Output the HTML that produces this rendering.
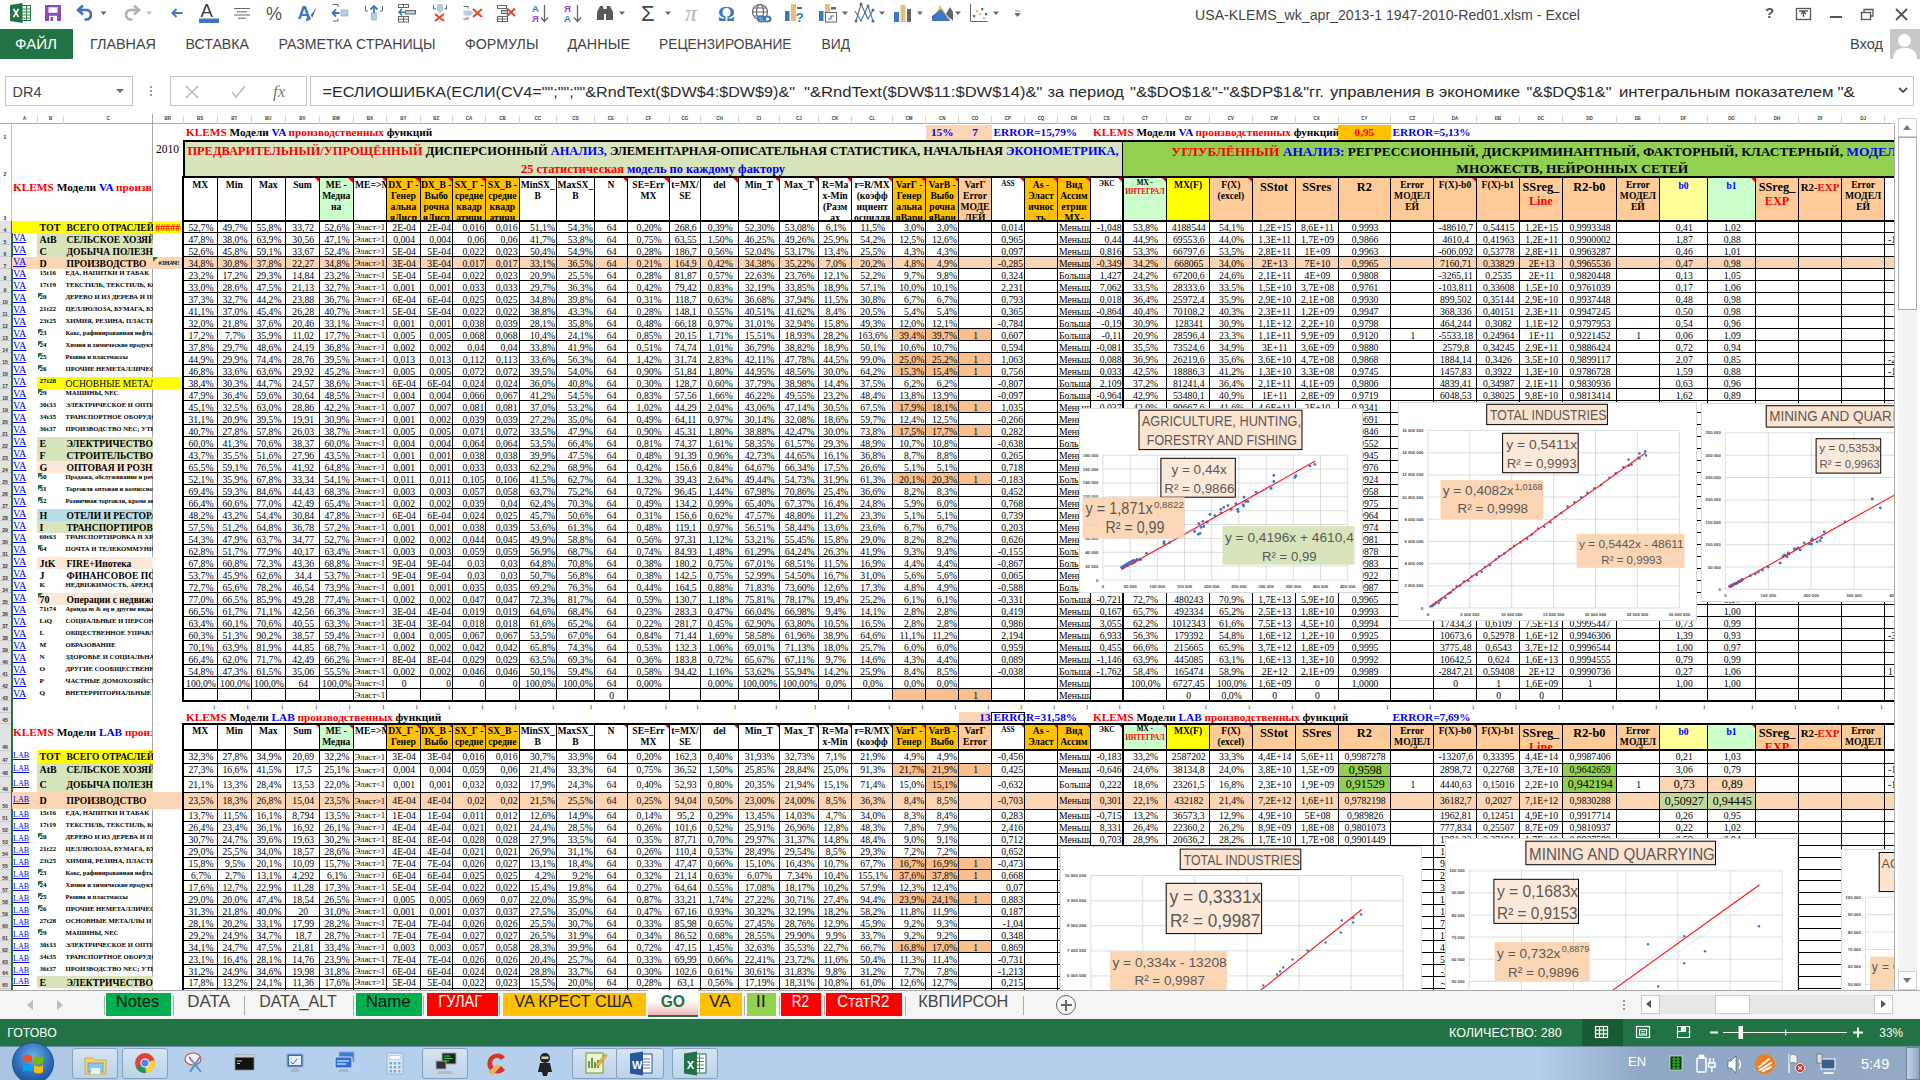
<!DOCTYPE html><html lang="ru"><head><meta charset="utf-8"><title>Excel</title><style>
*{box-sizing:border-box;margin:0;padding:0}
html,body{width:1920px;height:1080px;overflow:hidden;background:#fff;font-family:"Liberation Sans",sans-serif}
#sh{position:absolute;left:0;top:114px;width:1894px;height:876px;overflow:hidden;background:#fff;font-family:"Liberation Serif",serif;font-size:9.7px;color:#000}
.r{position:absolute;left:0;width:1895px;white-space:nowrap}
.r>*{position:absolute;top:0;height:100%;overflow:hidden;display:block;font-style:normal;font-weight:normal;text-align:center}
.hl{position:absolute;background:#000;height:1px}
.vl{position:absolute;background:#000;width:1px}
.bg{position:absolute}
.t{position:absolute;white-space:nowrap}
.rd{color:#f00}.bl{color:#00f}
.hd>*{font-weight:bold;white-space:nowrap;line-height:11px;font-size:9.6px;padding:1px 0 0 0!important;text-align:center!important}
.tri:after{content:"";position:absolute;right:0;top:0;border-left:5px solid transparent;border-top:5px solid #f00}
.gt:before{content:"";position:absolute;left:0;top:0;border-right:5px solid transparent;border-top:5px solid #1e7b34}
.lk{color:#00f;text-decoration:underline;text-align:left!important;font-size:10px;padding-left:1.5px;line-height:10.5px}
.B{font-weight:bold!important;font-size:10px;text-align:left!important}
.C.B{font-size:9.55px}
.s{line-height:8.7px;font-size:6.7px;text-align:left!important;font-weight:bold!important}
.tn{line-height:8.7px;font-size:6.5px;text-align:left!important;font-weight:bold!important}
.m{font-size:9.6px;text-align:left!important}
.one{font-size:5.6px}
.sc{line-height:8.7px;font-size:7.1px;text-align:left!important;font-weight:bold!important}
.ch{position:absolute;background:#fff;border:1px solid #d9d9d9;overflow:hidden;font-family:"Liberation Sans",sans-serif;color:#595959}
.bx{position:absolute;text-align:center;white-space:nowrap;color:#595959}
.ax{position:absolute;font-size:4px;color:#777;white-space:nowrap}
.A{left:11.50px;width:26.00px;}.B{left:37.50px;width:26.00px;}.C{left:63.50px;width:89.00px;}.BR{left:152.50px;width:30.50px;}.BS{left:183.00px;width:34.50px;padding-left:1.5px;}.BT{left:217.50px;width:33.50px;padding-left:1.5px;}.BU{left:251.00px;width:34.50px;padding-left:1.5px;}.BV{left:285.50px;width:34.00px;padding-left:1.5px;}.BW{left:319.50px;width:33.50px;padding-left:1.5px;}.BX{left:353.00px;width:33.75px;text-align:left;padding-left:1.5px;}.BY{left:386.75px;width:33.25px;padding-left:1.5px;}.BZ{left:420.00px;width:32.50px;text-align:right;padding-right:1.5px;}.CA{left:452.50px;width:33.25px;text-align:right;padding-right:1.5px;}.CB{left:485.75px;width:33.25px;text-align:right;padding-right:1.5px;}.CC{left:519.00px;width:37.50px;text-align:right;padding-right:1.5px;}.CD{left:556.50px;width:37.75px;text-align:right;padding-right:1.5px;}.CE{left:594.25px;width:33.25px;padding-left:1.5px;}.CF{left:627.50px;width:41.75px;padding-left:1.5px;}.CG{left:669.25px;width:31.50px;padding-left:1.5px;}.CH{left:700.75px;width:37.50px;padding-left:1.5px;}.CI{left:738.25px;width:41.25px;padding-left:1.5px;}.CJ{left:779.50px;width:39.00px;padding-left:1.5px;}.CK{left:818.50px;width:33.25px;padding-left:1.5px;}.CL{left:851.75px;width:40.75px;padding-left:1.5px;}.CM{left:892.50px;width:33.25px;text-align:right;padding-right:1.5px;}.CN{left:925.75px;width:32.75px;text-align:right;padding-right:1.5px;}.CO{left:958.50px;width:33.00px;padding-left:1.5px;}.CP{left:991.50px;width:33.00px;text-align:right;padding-right:1.5px;}.CQ{left:1024.50px;width:33.00px;padding-left:1.5px;}.CR{left:1057.50px;width:33.00px;text-align:left;padding-left:1.5px;}.CS{left:1090.50px;width:32.50px;text-align:right;padding-right:1.5px;}.CT{left:1123.00px;width:43.75px;padding-left:1.5px;}.CU{left:1166.75px;width:42.50px;padding-left:1.5px;}.CV{left:1209.25px;width:43.25px;padding-left:1.5px;}.CW{left:1252.50px;width:43.00px;padding-left:1.5px;}.CX{left:1295.50px;width:42.50px;padding-left:1.5px;}.CY{left:1338.00px;width:52.75px;padding-left:1.5px;}.CZ{left:1390.75px;width:42.75px;padding-left:1.5px;}.DA{left:1433.50px;width:43.00px;padding-left:1.5px;}.DB{left:1476.50px;width:42.75px;padding-left:1.5px;}.DC{left:1519.25px;width:43.25px;padding-left:1.5px;}.DD{left:1562.50px;width:53.75px;padding-left:1.5px;}.DE{left:1616.25px;width:43.25px;padding-left:1.5px;}.DF{left:1659.50px;width:48.00px;padding-left:1.5px;}.DG{left:1707.50px;width:48.00px;padding-left:1.5px;}.DH{left:1755.50px;width:43.00px;padding-left:1.5px;}.DI{left:1798.50px;width:43.00px;padding-left:1.5px;}.DJ{left:1841.50px;width:43.20px;padding-left:1.5px;}.DK{left:1884.70px;width:15.30px;padding-left:1.5px;}
.a{position:absolute}
.tab{position:absolute;top:36px;font-size:15px;color:#444;white-space:nowrap;line-height:18px}
.qi{position:absolute;top:5px;width:22px;height:22px}
.st{position:absolute;top:993px;height:23px;font-size:18px;line-height:22px;text-align:center;color:#000;white-space:nowrap}
.sep{position:absolute;top:996px;width:1px;height:19px;background:#ababab}
.tb{position:absolute;top:1048px;height:31px;border:1px solid #8aa0b8;border-radius:3px;background:linear-gradient(#d4e4f4,#bcd3ea)}
</style></head><body><div class="a" style="left:1765px;top:4px;font-size:15px;line-height:18px;color:#555;font-weight:bold">?</div><svg class="a" style="left:1795px;top:6px" width="120" height="18" viewBox="0 0 120 18"><g fill="none" stroke="#555" stroke-width="1.3"><rect x="1.5" y="2.5" width="14" height="11"/><path d="M8.5 11V6M6 8l2.5-2.5L11 8M4 5h9"/><path d="M35 11h12" stroke-width="2"/><rect x="66.5" y="6.5" width="9" height="7"/><path d="M69 6V3.5h9V10h-2.5"/><path d="M101 3l11 11M112 3l-11 11" stroke-width="1.8"/></g></svg><div class="a" style="left:1890px;top:29px;width:30px;height:30px;background:#c8c8c8;overflow:hidden"><div class="a" style="left:8px;top:5px;width:13px;height:13px;border-radius:50%;background:#fff"></div><div class="a" style="left:3px;top:19px;width:24px;height:20px;border-radius:10px 10px 0 0;background:#fff"></div></div><div class="a" style="left:0;top:29px;width:73px;height:30px;background:#217346"></div><div class="a" style="left:5px;top:76px;width:128px;height:30px;border:1px solid #c6c6c6;background:#fff"></div><div class="a" style="left:116px;top:89px;border:4px solid transparent;border-top:4px solid #666;width:0;height:0"></div><div class="a" style="left:150px;top:86px;width:2px;height:10px;background:repeating-linear-gradient(#999 0 2px,transparent 2px 4px)"></div><div class="a" style="left:170px;top:76px;width:137px;height:30px;border:1px solid #c6c6c6;background:#fff"></div><svg class="a" style="left:182px;top:82px" width="120" height="20" viewBox="0 0 120 20"><g fill="none" stroke="#bbb" stroke-width="1.6"><path d="M4 4l12 12M16 4L4 16"/><path d="M50 10l4 5 9-11"/></g><text x="91" y="15" font-family="Liberation Serif" font-style="italic" font-size="17" fill="#777">fx</text></svg><div class="a" style="left:310px;top:76px;width:1604px;height:30px;border:1px solid #c6c6c6;background:#fff"></div><svg class="a" style="left:1897px;top:86px" width="12" height="10"><path d="M2 2l4 4 4-4" fill="none" stroke="#555" stroke-width="1.8"/></svg><div class="a" style="left:1895px;top:114px;width:25px;height:877px;background:#fff"></div><div class="a" style="left:1894px;top:124px;width:1px;height:867px;background:#ababab"></div><div class="a" style="left:1898px;top:137px;width:19px;height:835px;background:#f3f3f3"></div><div class="a" style="left:1898px;top:118px;width:19px;height:19px;border:1px solid #cfcfcf;background:#fff"></div><div class="a" style="left:1903px;top:125px;border:4.5px solid transparent;border-bottom:5px solid #777;border-top:0"></div><div class="a" style="left:1898px;top:137px;width:19px;height:173px;border:1px solid #ababab;background:#fff"></div><div class="a" style="left:1898px;top:971px;width:19px;height:19px;border:1px solid #cfcfcf;background:#fff"></div><div class="a" style="left:1903px;top:978px;border:4.5px solid transparent;border-top:5px solid #777;border-bottom:0"></div><div class="a" style="left:0;top:990px;width:1920px;height:29px;background:#f5f5f5;border-top:1px solid #ababab"></div><div class="a" style="left:27px;top:1000px;border:5px solid transparent;border-right:6px solid #bdbdbd;border-left:0"></div><div class="a" style="left:57px;top:1000px;border:5px solid transparent;border-left:6px solid #bdbdbd;border-right:0"></div><div class="sep" style="left:103.5px"></div><div class="sep" style="left:173.0px"></div><div class="sep" style="left:244.0px"></div><div class="sep" style="left:353.0px"></div><div class="sep" style="left:423.0px"></div><div class="sep" style="left:499.0px"></div><div class="st" style="left:106.0px;width:65.0px;background:#00b050"></div><div class="st" style="left:356.0px;width:65.5px;background:#00b050"></div><div class="st" style="left:427.0px;width:70.5px;background:#ff0000"></div><div class="st" style="left:502.5px;width:143.5px;background:#ffc000"></div><div class="st" style="left:700.0px;width:41.5px;background:#ffc000"></div><div class="st" style="left:746.5px;width:29.5px;background:#92d050"></div><div class="st" style="left:781.0px;width:40.0px;background:#ff0000"></div><div class="st" style="left:826.0px;width:76.0px;background:#ff0000"></div><div class="sep" style="left:743.5px"></div><div class="sep" style="left:778.5px"></div><div class="sep" style="left:823.5px"></div><div class="sep" style="left:904.5px"></div><div class="sep" style="left:1022.5px"></div><div class="a" style="left:648px;top:990px;width:50px;height:27px;background:linear-gradient(#fff 0,#fff 45%,#f4b6b6 100%);border-bottom:2.5px solid #217346"></div><div class="a" style="left:1056px;top:995px;width:20px;height:20px;border:1.5px solid #666;border-radius:50%"></div><div class="a" style="left:1060.5px;top:1004.250px;width:11px;height:1.5px;background:#666"></div><div class="a" style="left:1065.250px;top:999.5px;width:1.5px;height:11px;background:#666"></div><div class="a" style="left:1623px;top:1000px;width:2px;height:10px;background:repeating-linear-gradient(#999 0 2px,transparent 2px 4px)"></div><div class="a" style="left:1641px;top:995px;width:252px;height:19px;background:#e8e8e8"></div><div class="a" style="left:1641px;top:995px;width:19px;height:19px;border:1px solid #c8c8c8;background:#fff"></div><div class="a" style="left:1646px;top:1000px;border:4.5px solid transparent;border-right:5.5px solid #555;border-left:0"></div><div class="a" style="left:1874px;top:995px;width:19px;height:19px;border:1px solid #c8c8c8;background:#fff"></div><div class="a" style="left:1881px;top:1000px;border:4.5px solid transparent;border-left:5.5px solid #555;border-right:0"></div><div class="a" style="left:1715px;top:995px;width:35px;height:19px;border:1px solid #c8c8c8;background:#fff"></div><div class="a" style="left:0;top:1019px;width:1920px;height:27px;background:#217346"></div><div class="a" style="left:1582px;top:1019px;width:41px;height:27px;background:#185c37"></div><svg class="a" style="left:1590px;top:1024px" width="330" height="18" viewBox="0 0 330 18"><g fill="none" stroke="#fff" stroke-width="1.2"><rect x="5.5" y="2.5" width="12" height="11"/><path d="M9.5 2.5v11M13.5 2.5v11M5.5 6.2h12M5.5 9.9h12"/><rect x="46.5" y="2.5" width="13" height="11"/><rect x="49.5" y="5.5" width="7" height="5.5"/><path d="M51 7.5h4M51 9.3h4" stroke-width=".8"/><path d="M87.5 13.5v-11h12v11zM91.5 2.5v5h4v-5" /><path d="M87.5 7.5h4" /><path d="M133 8.5h124M195.7 5.5v6" stroke-width="1"/><path d="M120 8.5h8M263 8.5h10M268 3.5v10" stroke-width="1.8"/></g><rect x="148.5" y="2" width="4.5" height="13" fill="#fff"/><rect x="92" y="3" width="3.5" height="4" fill="#fff"/></svg><div class="a" style="left:0;top:1046px;width:1920px;height:34px;background:linear-gradient(90deg,#a9c4e2 0,#b4d0ec 8%,#b4d0ec 80%,#8fa8c6 85.5%,#93a9c4 100%);border-top:1px solid #6e8aa8"></div><div class="a" style="left:12px;top:1042px;width:42px;height:42px;border-radius:50%;background:radial-gradient(circle at 50% 35%,#6fb2e8 0,#2a6cb8 55%,#173f7a 100%);border:1px solid #274b7a"></div><svg class="a" style="left:20px;top:1050px" width="26" height="26" viewBox="0 0 26 26"><path d="M3 6q5-3 9 0v7q-4-3-9 0z" fill="#f25022"/><path d="M14 6q5 3 9 0v7q-4 3-9 0z" fill="#7fba00"/><path d="M3 15q5-3 9 0v7q-4-3-9 0z" fill="#00a4ef"/><path d="M14 15q5 3 9 0v7q-4 3-9 0z" fill="#ffb900"/></svg><div class="tb" style="left:72px;width:46px"></div><div class="tb" style="left:122px;width:46px"></div><div class="tb" style="left:422px;width:46px"></div><div class="tb" style="left:572px;width:46px"></div><div class="tb" style="left:672px;width:46px"></div><div class="a" style="left:616px;top:1048px;width:48px;height:31px;border:1px solid #8aa0b8;border-radius:3px;background:linear-gradient(#d4e4f4,#bcd3ea)"></div><svg class="a" style="left:0;top:0" width="1920" height="1080" viewBox="0 0 1920 1080"><g transform="translate(84,1054)"><path d="M1 4h8l2 2h11v14H1z" fill="#f3d36b" stroke="#c9a53a" stroke-width=".8"/><rect x="4" y="9" width="15" height="9" fill="#8cc7f0" stroke="#5b9bd5" stroke-width=".8"/><rect x="7" y="14" width="9" height="6" fill="#e8f2fb"/></g><g transform="translate(145,1063)"><circle r="10" fill="#db4437"/><path d="M0 0L-8.7 5A10 10 0 0 0 1 10z" fill="#0f9d58"/><path d="M0 0L1 10A10 10 0 0 0 9.5-3z" fill="#ffcd40"/><circle r="4.6" fill="#fff"/><circle r="3.6" fill="#4285f4"/></g><g transform="translate(195,1063)"><ellipse cx="-2" cy="-4" rx="8" ry="6" fill="#f4f4f4" stroke="#d05050" stroke-width="1.2"/><path d="M-6-6L6 9M5-6L-5 9" stroke="#5b8fc7" stroke-width="2" fill="none"/></g><g transform="translate(235,1055)"><rect width="19" height="15" fill="#111" stroke="#888" stroke-width=".8"/><rect y="0" width="19" height="2.5" fill="#ccc"/><path d="M2 6h5M2 8.5h3" stroke="#ddd" stroke-width=".9"/></g><g transform="translate(286,1053)"><rect x="1" y="1" width="16" height="13" rx="1" fill="#2f6fd0" stroke="#9ab" stroke-width="1.2"/><rect x="3" y="3" width="12" height="9" fill="#e9f1fb"/><path d="M5 9l2 2 4-5" stroke="#2f6fd0" fill="none"/><path d="M6 15h6l2 4H4z" fill="#aab4c2"/></g><g transform="translate(335,1052)"><rect x="4" y="0" width="15" height="10" fill="#3b7be0" stroke="#9ab" stroke-width="1"/><rect x="0" y="5" width="17" height="11" rx="1" fill="#2f6fd0" stroke="#cde" stroke-width="1.2"/><path d="M2 9h12M2 12h9" stroke="#fff" stroke-width="1.2"/><path d="M5 17h7l2 3H3z" fill="#aab4c2"/></g><g transform="translate(387,1053)"><rect width="16" height="21" rx="1.5" fill="#dbe9f8" stroke="#8fb2dc"/><rect x="2.5" y="2.5" width="11" height="4" fill="#f7fbff" stroke="#9bbbe0" stroke-width=".6"/><g fill="#7fa8d8"><rect x="2.5" y="9" width="2.5" height="2.5"/><rect x="6.7" y="9" width="2.5" height="2.5"/><rect x="11" y="9" width="2.5" height="2.5"/><rect x="2.5" y="13" width="2.5" height="2.5"/><rect x="6.7" y="13" width="2.5" height="2.5"/><rect x="11" y="13" width="2.5" height="2.5"/><rect x="2.5" y="17" width="2.5" height="2.5"/><rect x="6.7" y="17" width="2.5" height="2.5"/></g><rect x="11" y="17" width="2.5" height="2.5" fill="#e8954a"/></g><g transform="translate(436,1053)"><rect x="6" y="0" width="14" height="11" fill="#222" stroke="#aaa"/><path d="M8 3h6M8 5.5h9M8 8h5" stroke="#3c3" stroke-width="1"/><rect x="0" y="8" width="10" height="8" fill="#333" stroke="#aaa"/><path d="M3 18h12l2 3H1z" fill="#bbb"/></g><g transform="translate(497,1063)"><path d="M8-6A10 10 0 1 0 8 7L4 3A5 5 0 1 1 4-3z" fill="#d8352a"/><path d="M-9 9L0 1l3 3-7 8z" fill="#e9b25c"/></g><g transform="translate(545,1063)"><circle cy="-5" r="5" fill="#222"/><rect x="-3.5" y="-6.5" width="7" height="2.5" fill="#e8c8a8"/><path d="M-5 0h10l2 9h-4l-1 4h-4l-1-4h-4z" fill="#222"/></g><g transform="translate(586,1053)"><rect width="17" height="20" fill="#eaf5d0" stroke="#6c9a2e"/><path d="M3 15V8M6 15V5M9 15V9M12 15V7" stroke="#3a7a1e" stroke-width="1.5"/><path d="M10 12L19 1l2 1.5L12 14z" fill="#f0b43c" stroke="#a0701a" stroke-width=".5"/></g><g transform="translate(630,1052)"><rect x="8" y="2" width="14" height="19" fill="#fff" stroke="#2b579a"/><path d="M11 7h9M11 10h9M11 13h9M11 16h9" stroke="#2b579a" stroke-width=".8"/><path d="M0 1.5l13-2v24l-13-2z" fill="#2b579a"/><text x="2" y="16.5" font-family="Liberation Sans" font-weight="bold" font-size="11" fill="#fff">W</text></g><g transform="translate(684,1052)"><rect x="8" y="2" width="14" height="19" fill="#fff" stroke="#217346"/><path d="M11 6h9M11 9.5h9M11 13h9M11 16.5h9M15.5 3v17" stroke="#217346" stroke-width=".8"/><path d="M0 1.5l13-2v24l-13-2z" fill="#217346"/><text x="2.8" y="16.5" font-family="Liberation Sans" font-weight="bold" font-size="11" fill="#fff">X</text></g><g transform="translate(1670,1056)"><rect width="12" height="14" fill="#0a3a0a" stroke="#ddd" stroke-width=".8"/><path d="M2 3h8M2 6h8M2 9h8M2 12h8M4 1v12M8 1v12" stroke="#2fd02f" stroke-width=".9"/></g><g transform="translate(1697,1055)" fill="none" stroke="#fff" stroke-width="1.5"><rect x="0" y="3" width="9" height="14" rx="1"/><rect x="2.5" y="0.5" width="4" height="2.5" fill="#fff"/><path d="M13 3v5M16.5 3v5M11.5 8h6.5v4h-6.5zM14.8 12v5"/></g><g transform="translate(1728,1055)" fill="#fff" stroke="#445" stroke-width=".6"><path d="M0 6h3l5-5v17l-5-5H0z"/><path d="M11 5q3 4.5 0 9" fill="none" stroke="#fff" stroke-width="1.3"/></g><g transform="translate(1765,1064)"><circle r="10" fill="#f47b20"/><path d="M-6 3L4-5M-5 6L6-1M-2 7l8-4" stroke="#fff" stroke-width="2" stroke-linecap="round"/></g><g transform="translate(1787,1054)"><path d="M2 0v19" stroke="#eee" stroke-width="1.5"/><path d="M3 1q4-2 7 1v8q-3-3-7-1z" fill="#f4f4f4" stroke="#667" stroke-width=".6"/><circle cx="13" cy="14" r="4.5" fill="#d22" stroke="#fff" stroke-width=".8"/><path d="M11 12l4 4M15 12l-4 4" stroke="#fff" stroke-width="1.2"/></g><g transform="translate(1817,1054)"><rect x="4" y="5" width="14" height="10" fill="#3a5f8f" stroke="#eee" stroke-width="1.2"/><rect x="0" y="0" width="5" height="9" fill="#ddd" stroke="#556" stroke-width=".6"/><path d="M7 18h9l1 2H6z" fill="#eee"/></g></svg><div class="a" style="left:1628px;top:1053.5px;font-size:13px;line-height:16px;color:#fff">EN</div><div class="a" style="left:1861px;top:1055px;font-size:14.5px;line-height:18px;color:#fff">5:49</div><div class="a" style="left:1906px;top:1047px;width:14px;height:33px;border:1px solid #6c829c;background:linear-gradient(90deg,#c4d4e6,#8fa6c2)"></div><svg class="a" style="left:0;top:0" width="1100" height="30" viewBox="0 0 1100 30"><g transform="translate(10,3)"><rect x="9" y="2.5" width="11.5" height="15" fill="#fff" stroke="#217346" stroke-width="1"/><path d="M12 6h8M12 9h8M12 12h8M12 15h8M16.5 3v14" stroke="#217346" stroke-width=".9"/><path d="M0 2l12.5-2v20L0 18z" fill="#217346"/><path d="M3.5 6l5 8M8.5 6l-5 8" stroke="#fff" stroke-width="1.7"/></g><g transform="translate(45,5)"><path d="M0 0h16v16H0z" fill="#8b4bb8"/><rect x="3.5" y="2.3" width="9" height="5.5" fill="#fff"/><rect x="4" y="10.8" width="8" height="5.2" fill="#fff"/><rect x="5.5" y="12" width="2.6" height="4" fill="#8b4bb8"/></g><path d="M83 7l-5 4.5 5 4.5M78.5 11.5h9a5 5 0 0 1 0 9.5h-3" fill="none" stroke="#3e77bd" stroke-width="2.6" stroke-linejoin="miter" transform="translate(0,-1.5)"/><path d="M100.5 11.5h6l-3 3.5z" fill="#666"/><path d="M134 7l5 4.5-5 4.5M138.5 11.5h-9a5 5 0 0 0 0 9.5h3" fill="none" stroke="#b4b4b4" stroke-width="2.6" transform="translate(0,-1.5)"/><path d="M146.0 11.5h6l-3 3.5z" fill="#c0c0c0"/><path d="M176.5 9l-4 4 4 4M172.5 13h10" fill="none" stroke="#3e77bd" stroke-width="2"/><text x="200.5" y="17" font-family="Liberation Sans" font-size="18.5" fill="#3b3b3b">A</text><rect x="199" y="18.5" width="20" height="4.5" fill="#3e77bd"/><path d="M234 8.5h16M237 11.8h10M234 15h16M238 18.2h8" stroke="#666" stroke-width="1"/><text x="266" y="19.5" font-family="Liberation Sans" font-size="18" fill="#555">%</text><text x="297.5" y="19" font-family="Liberation Sans" font-weight="bold" font-size="18.5" fill="#3e77bd">A</text><path d="M316.5 7.5l-6 8 2 2z" fill="#666"/><path d="M309 16q-3 1-3 5 4 0 5-3z" fill="#3e77bd"/><g fill="none" stroke="#666" stroke-width="1"><path d="M333 4.5h5v2.5M333 21h5v-2.5"/></g><rect x="341" y="10" width="7" height="6" fill="#b8cde8" stroke="#8aa" stroke-width=".6"/><path d="M336 9.5l-3.5 3.5 3.5 3.5M332.5 13h7" fill="none" stroke="#3e77bd" stroke-width="1.8"/><g fill="none" stroke="#666" stroke-width="1"><path d="M365.5 6v5h2.5M382.5 6v5h-2.5"/></g><rect x="371.5" y="13" width="5" height="7" fill="#b8cde8" stroke="#8aa" stroke-width=".6"/><path d="M370.5 9.5l3.5-3.5 3.5 3.5M374 6v7" fill="none" stroke="#3e77bd" stroke-width="1.8"/><g fill="none" stroke="#666" stroke-width="1"><rect x="398.5" y="4.5" width="10" height="3"/><path d="M403.5 4.5v3"/><rect x="398.5" y="16.5" width="10" height="5.5"/><path d="M403.5 16.5v5.5M398.5 19.2h10"/><rect x="405.5" y="10.5" width="10" height="3.5" fill="#b8cde8"/></g><path d="M402 9l-3 3.2 3 3.2M399 12.2h6" fill="none" stroke="#3e77bd" stroke-width="1.6"/><g fill="none" stroke="#666" stroke-width="1"><path d="M433.5 5v4h2.5M446.5 5v4h-2.5"/></g><path d="M437.5 4.5h5v6l-2.5 2-2.5-2z" fill="#b8cde8" stroke="#9ab" stroke-width=".6"/><path d="M435 14l9 7M444 14l-9 7" stroke="#e0492a" stroke-width="2"/><g fill="none" stroke="#666" stroke-width="1"><path d="M463.5 6.5h4.5v2M463.5 19h4.5v-2"/></g><path d="M463.5 10.5h7l3 2.5-3 2.5h-7z" fill="#b8cde8"/><path d="M473 9l9 8M482 9l-9 8" stroke="#e0492a" stroke-width="2"/><g fill="none" stroke="#666" stroke-width="1"><rect x="497.5" y="5.5" width="9" height="3"/><rect x="497.5" y="16.5" width="10" height="5"/><path d="M502.5 16.5v5M497.5 19h10"/><rect x="501.5" y="10.5" width="6" height="3" fill="#b8cde8"/></g><path d="M507 8.5l8 7.5M515 8.5l-8 7.5" stroke="#e0492a" stroke-width="2"/><text x="532" y="12" font-family="Liberation Sans" font-weight="bold" font-size="9.5" fill="#3e77bd">А</text><text x="532" y="22" font-family="Liberation Sans" font-weight="bold" font-size="9.5" fill="#8b4bb8">Я</text><path d="M544.5 5v16M541 17.5l3.5 4 3.5-4" fill="none" stroke="#666" stroke-width="1.3"/><text x="564" y="12" font-family="Liberation Sans" font-weight="bold" font-size="9.5" fill="#8b4bb8">Я</text><text x="564" y="22" font-family="Liberation Sans" font-weight="bold" font-size="9.5" fill="#3e77bd">А</text><path d="M577.5 5v16M574 17.5l3.5 4 3.5-4" fill="none" stroke="#666" stroke-width="1.3"/><g fill="#5a5a5a"><path d="M597 20v-8l3-6h3l1 6v8zM613 20v-8l-3-6h-3l-1 6v8z"/><rect x="603" y="9" width="4" height="5"/></g><path d="M619.0 11.5h6l-3 3.5z" fill="#666"/><text x="641" y="21" font-family="Liberation Sans" font-size="22" fill="#444">Σ</text><path d="M665.0 11.5h6l-3 3.5z" fill="#666"/><text x="685" y="21" font-family="Liberation Serif" font-style="italic" font-size="24" fill="#b8b8b8">π</text><text x="718" y="20.5" font-family="Liberation Serif" font-weight="bold" font-size="21" fill="#3e77bd">Ω</text><g fill="none" stroke="#666" stroke-width="1.2"><circle cx="760" cy="12" r="7.5"/><ellipse cx="760" cy="12" rx="3.5" ry="7.5"/><path d="M752.5 12h15M754 8h12M754 16h8"/></g><g fill="none" stroke="#3e77bd" stroke-width="2"><ellipse cx="761.5" cy="19" rx="3.5" ry="2.5"/><ellipse cx="767" cy="19" rx="3.5" ry="2.5"/></g><rect x="785" y="11" width="4.5" height="10" fill="#3e77bd"/><rect x="791" y="4" width="5" height="17" fill="#e8c07a"/><rect x="797" y="7" width="5" height="2" fill="#666"/><text x="795.5" y="21.5" font-family="Liberation Sans" font-weight="bold" font-size="13.5" fill="#3e77bd">?</text><rect x="819" y="11" width="4.5" height="10" fill="#3e77bd"/><rect x="825" y="4" width="5" height="8" fill="#e8c07a"/><rect x="831" y="7" width="5" height="2.5" fill="#666"/><rect x="825.5" y="12.5" width="11" height="9.5" fill="#fff" stroke="#666" stroke-width="1"/><path d="M828 19h3v-3h3" fill="none" stroke="#3e77bd" stroke-width="1.2"/><path d="M842.0 11.5h6l-3 3.5z" fill="#666"/><g fill="none" stroke-width="1.1"><path d="M856 21l5-17 7 15 5-9" stroke="#666"/><path d="M855 11l6 10 7-15 5 15" stroke="#3e77bd"/></g><g fill="#666"><circle cx="861" cy="4" r="1.5"/><circle cx="856" cy="21" r="1.5"/><circle cx="873" cy="10" r="1.5"/></g><g fill="#3e77bd"><circle cx="868" cy="6" r="1.5"/><circle cx="873" cy="21" r="1.5"/></g><path d="M879.0 11.5h6l-3 3.5z" fill="#666"/><rect x="894" y="12" width="5" height="10" fill="#3e77bd"/><rect x="900.5" y="5" width="5" height="17" fill="#e8c07a"/><rect x="907" y="9" width="4" height="13" fill="#666"/><path d="M917.0 11.5h6l-3 3.5z" fill="#666"/><path d="M932 21l8-16 6 9 4-6v13z" fill="#e8c07a"/><path d="M946 14l4-7 3 5v9z" fill="#666"/><path d="M932 21v-5l4-3 5-4 9 12z" fill="#3e77bd"/><path d="M955.0 11.5h6l-3 3.5z" fill="#666"/><path d="M970.5 4v17.5h17" fill="none" stroke="#666" stroke-width="1"/><g fill="#3e77bd"><rect x="973" y="15" width="2.3" height="2.3"/><rect x="981" y="8" width="2.3" height="2.3"/><rect x="985" y="13" width="2.3" height="2.3"/></g><g fill="#e8c07a"><rect x="976" y="10" width="2.3" height="2.3"/><rect x="979" y="13" width="2.3" height="2.3"/><rect x="983" y="17" width="2.3" height="2.3"/></g><path d="M993.0 11.5h6l-3 3.5z" fill="#666"/><path d="M1015 11h5M1015 13.5h5l-2.5 3z" fill="#666" stroke="#666" stroke-width=".8"/></svg><svg class="a" style="left:0;top:0" width="1920" height="1080" viewBox="0 0 1920 1080" font-family="Liberation Sans,sans-serif"><text x="1195.0" y="20.0" font-size="15.0" textLength="385.0" lengthAdjust="spacingAndGlyphs" fill="#444">USA-KLEMS_wk_apr_2013-1 1947-2010-Red01.xlsm - Excel</text><text x="1850.0" y="49.3" font-size="14.8" textLength="33.0" lengthAdjust="spacingAndGlyphs" fill="#444">Вход</text><text x="15.0" y="49.3" font-size="14.8" textLength="42.0" lengthAdjust="spacingAndGlyphs" fill="#fff">ФАЙЛ</text><text x="90.0" y="49.3" font-size="14.8" textLength="66.0" lengthAdjust="spacingAndGlyphs" fill="#444">ГЛАВНАЯ</text><text x="185.5" y="49.3" font-size="14.8" textLength="63.5" lengthAdjust="spacingAndGlyphs" fill="#444">ВСТАВКА</text><text x="278.5" y="49.3" font-size="14.8" textLength="157.0" lengthAdjust="spacingAndGlyphs" fill="#444">РАЗМЕТКА СТРАНИЦЫ</text><text x="465.0" y="49.3" font-size="14.8" textLength="73.5" lengthAdjust="spacingAndGlyphs" fill="#444">ФОРМУЛЫ</text><text x="567.5" y="49.3" font-size="14.8" textLength="62.5" lengthAdjust="spacingAndGlyphs" fill="#444">ДАННЫЕ</text><text x="659.0" y="49.3" font-size="14.8" textLength="132.5" lengthAdjust="spacingAndGlyphs" fill="#444">РЕЦЕНЗИРОВАНИЕ</text><text x="821.5" y="49.3" font-size="14.8" textLength="28.5" lengthAdjust="spacingAndGlyphs" fill="#444">ВИД</text><text x="12.5" y="96.5" font-size="15.0" textLength="29.0" lengthAdjust="spacingAndGlyphs" fill="#444">DR4</text><text x="322.5" y="96.5" font-size="15.2" textLength="472.5" lengthAdjust="spacingAndGlyphs" fill="#2b2b2b">=ЕСЛИОШИБКА(ЕСЛИ(CV4="";"";""&amp;RndText($DW$4:$DW$9)&amp;"</text><text x="804.0" y="96.5" font-size="15.2" textLength="238.5" lengthAdjust="spacingAndGlyphs" fill="#2b2b2b">"&amp;RndText($DW$11:$DW$14)&amp;"</text><text x="1047.5" y="96.5" font-size="15.2" textLength="76.5" lengthAdjust="spacingAndGlyphs" fill="#2b2b2b">за период</text><text x="1130.0" y="96.5" font-size="15.2" textLength="194.0" lengthAdjust="spacingAndGlyphs" fill="#2b2b2b">"&amp;$DO$1&amp;"-"&amp;$DP$1&amp;"гг.</text><text x="1330.0" y="96.5" font-size="15.2" textLength="190.0" lengthAdjust="spacingAndGlyphs" fill="#2b2b2b">управления в экономике</text><text x="1526.5" y="96.5" font-size="15.2" textLength="85.0" lengthAdjust="spacingAndGlyphs" fill="#2b2b2b">"&amp;$DQ$1&amp;"</text><text x="1619.0" y="96.5" font-size="15.2" textLength="214.5" lengthAdjust="spacingAndGlyphs" fill="#2b2b2b">интегральным показателем</text><text x="1837.5" y="96.5" font-size="15.2" textLength="17.5" lengthAdjust="spacingAndGlyphs" fill="#2b2b2b">"&amp;</text><text x="115.7" y="1007.3" font-size="17.0" textLength="43.6" lengthAdjust="spacingAndGlyphs" fill="#111">Notes</text><text x="187.3" y="1007.3" font-size="17.0" textLength="42.7" lengthAdjust="spacingAndGlyphs" fill="#444">DATA</text><text x="259.3" y="1007.3" font-size="17.0" textLength="77.4" lengthAdjust="spacingAndGlyphs" fill="#444">DATA_ALT</text><text x="365.7" y="1007.3" font-size="17.0" textLength="45.0" lengthAdjust="spacingAndGlyphs" fill="#111">Name</text><text x="438.3" y="1007.3" font-size="17.0" textLength="44.0" lengthAdjust="spacingAndGlyphs" fill="#fff">ГУЛАГ</text><text x="514.3" y="1007.3" font-size="17.0" textLength="118.0" lengthAdjust="spacingAndGlyphs" fill="#222">VA КРЕСТ США</text><text x="660.7" y="1007.3" font-size="17.0" textLength="24.3" lengthAdjust="spacingAndGlyphs" fill="#217346" font-weight="bold">GO</text><text x="709.0" y="1007.3" font-size="17.0" textLength="21.7" lengthAdjust="spacingAndGlyphs" fill="#222">VA</text><text x="755.7" y="1007.3" font-size="17.0" textLength="10.3" lengthAdjust="spacingAndGlyphs" fill="#222">II</text><text x="791.7" y="1007.3" font-size="17.0" textLength="17.3" lengthAdjust="spacingAndGlyphs" fill="#fff">R2</text><text x="837.3" y="1007.3" font-size="17.0" textLength="52.0" lengthAdjust="spacingAndGlyphs" fill="#fff">СтатR2</text><text x="918.3" y="1007.3" font-size="17.0" textLength="90.0" lengthAdjust="spacingAndGlyphs" fill="#444">КВПИРСОН</text><text x="7.3" y="1037.0" font-size="12.4" textLength="49.4" lengthAdjust="spacingAndGlyphs" fill="#fff">ГОТОВО</text><text x="1449.0" y="1037.0" font-size="12.4" textLength="112.7" lengthAdjust="spacingAndGlyphs" fill="#fff">КОЛИЧЕСТВО: 280</text><text x="1879.3" y="1037.0" font-size="12.4" textLength="23.7" lengthAdjust="spacingAndGlyphs" fill="#fff">33%</text></svg><div id="sh"><div class="bg" style="left:0;top:0;width:1895px;height:10px;background:#fff;border-bottom:1px solid #ababab"></div><span class="t" style="left:11.5px;top:2px;width:26.0px;text-align:center;font:bold 4.5px 'Liberation Sans',sans-serif;color:#3a3a3a">A</span><div class="bg" style="left:37.0px;top:2px;width:1px;height:8px;background:#d4d4d4"></div><span class="t" style="left:37.5px;top:2px;width:26.0px;text-align:center;font:bold 4.5px 'Liberation Sans',sans-serif;color:#3a3a3a">B</span><div class="bg" style="left:63.0px;top:2px;width:1px;height:8px;background:#d4d4d4"></div><span class="t" style="left:63.5px;top:2px;width:89.0px;text-align:center;font:bold 4.5px 'Liberation Sans',sans-serif;color:#3a3a3a">C</span><div class="bg" style="left:152.0px;top:2px;width:1px;height:8px;background:#d4d4d4"></div><span class="t" style="left:152.5px;top:2px;width:30.5px;text-align:center;font:bold 4.5px 'Liberation Sans',sans-serif;color:#3a3a3a">BR</span><div class="bg" style="left:182.5px;top:2px;width:1px;height:8px;background:#d4d4d4"></div><span class="t" style="left:183.0px;top:2px;width:34.5px;text-align:center;font:bold 4.5px 'Liberation Sans',sans-serif;color:#3a3a3a">BS</span><div class="bg" style="left:217.0px;top:2px;width:1px;height:8px;background:#d4d4d4"></div><span class="t" style="left:217.5px;top:2px;width:33.5px;text-align:center;font:bold 4.5px 'Liberation Sans',sans-serif;color:#3a3a3a">BT</span><div class="bg" style="left:250.5px;top:2px;width:1px;height:8px;background:#d4d4d4"></div><span class="t" style="left:251.0px;top:2px;width:34.5px;text-align:center;font:bold 4.5px 'Liberation Sans',sans-serif;color:#3a3a3a">BU</span><div class="bg" style="left:285.0px;top:2px;width:1px;height:8px;background:#d4d4d4"></div><span class="t" style="left:285.5px;top:2px;width:34.0px;text-align:center;font:bold 4.5px 'Liberation Sans',sans-serif;color:#3a3a3a">BV</span><div class="bg" style="left:319.0px;top:2px;width:1px;height:8px;background:#d4d4d4"></div><span class="t" style="left:319.5px;top:2px;width:33.5px;text-align:center;font:bold 4.5px 'Liberation Sans',sans-serif;color:#3a3a3a">BW</span><div class="bg" style="left:352.5px;top:2px;width:1px;height:8px;background:#d4d4d4"></div><span class="t" style="left:353.0px;top:2px;width:33.8px;text-align:center;font:bold 4.5px 'Liberation Sans',sans-serif;color:#3a3a3a">BX</span><div class="bg" style="left:386.2px;top:2px;width:1px;height:8px;background:#d4d4d4"></div><span class="t" style="left:386.8px;top:2px;width:33.2px;text-align:center;font:bold 4.5px 'Liberation Sans',sans-serif;color:#3a3a3a">BY</span><div class="bg" style="left:419.5px;top:2px;width:1px;height:8px;background:#d4d4d4"></div><span class="t" style="left:420.0px;top:2px;width:32.5px;text-align:center;font:bold 4.5px 'Liberation Sans',sans-serif;color:#3a3a3a">BZ</span><div class="bg" style="left:452.0px;top:2px;width:1px;height:8px;background:#d4d4d4"></div><span class="t" style="left:452.5px;top:2px;width:33.2px;text-align:center;font:bold 4.5px 'Liberation Sans',sans-serif;color:#3a3a3a">CA</span><div class="bg" style="left:485.2px;top:2px;width:1px;height:8px;background:#d4d4d4"></div><span class="t" style="left:485.8px;top:2px;width:33.2px;text-align:center;font:bold 4.5px 'Liberation Sans',sans-serif;color:#3a3a3a">CB</span><div class="bg" style="left:518.5px;top:2px;width:1px;height:8px;background:#d4d4d4"></div><span class="t" style="left:519.0px;top:2px;width:37.5px;text-align:center;font:bold 4.5px 'Liberation Sans',sans-serif;color:#3a3a3a">CC</span><div class="bg" style="left:556.0px;top:2px;width:1px;height:8px;background:#d4d4d4"></div><span class="t" style="left:556.5px;top:2px;width:37.8px;text-align:center;font:bold 4.5px 'Liberation Sans',sans-serif;color:#3a3a3a">CD</span><div class="bg" style="left:593.8px;top:2px;width:1px;height:8px;background:#d4d4d4"></div><span class="t" style="left:594.2px;top:2px;width:33.2px;text-align:center;font:bold 4.5px 'Liberation Sans',sans-serif;color:#3a3a3a">CE</span><div class="bg" style="left:627.0px;top:2px;width:1px;height:8px;background:#d4d4d4"></div><span class="t" style="left:627.5px;top:2px;width:41.8px;text-align:center;font:bold 4.5px 'Liberation Sans',sans-serif;color:#3a3a3a">CF</span><div class="bg" style="left:668.8px;top:2px;width:1px;height:8px;background:#d4d4d4"></div><span class="t" style="left:669.2px;top:2px;width:31.5px;text-align:center;font:bold 4.5px 'Liberation Sans',sans-serif;color:#3a3a3a">CG</span><div class="bg" style="left:700.2px;top:2px;width:1px;height:8px;background:#d4d4d4"></div><span class="t" style="left:700.8px;top:2px;width:37.5px;text-align:center;font:bold 4.5px 'Liberation Sans',sans-serif;color:#3a3a3a">CH</span><div class="bg" style="left:737.8px;top:2px;width:1px;height:8px;background:#d4d4d4"></div><span class="t" style="left:738.2px;top:2px;width:41.2px;text-align:center;font:bold 4.5px 'Liberation Sans',sans-serif;color:#3a3a3a">CI</span><div class="bg" style="left:779.0px;top:2px;width:1px;height:8px;background:#d4d4d4"></div><span class="t" style="left:779.5px;top:2px;width:39.0px;text-align:center;font:bold 4.5px 'Liberation Sans',sans-serif;color:#3a3a3a">CJ</span><div class="bg" style="left:818.0px;top:2px;width:1px;height:8px;background:#d4d4d4"></div><span class="t" style="left:818.5px;top:2px;width:33.2px;text-align:center;font:bold 4.5px 'Liberation Sans',sans-serif;color:#3a3a3a">CK</span><div class="bg" style="left:851.2px;top:2px;width:1px;height:8px;background:#d4d4d4"></div><span class="t" style="left:851.8px;top:2px;width:40.8px;text-align:center;font:bold 4.5px 'Liberation Sans',sans-serif;color:#3a3a3a">CL</span><div class="bg" style="left:892.0px;top:2px;width:1px;height:8px;background:#d4d4d4"></div><span class="t" style="left:892.5px;top:2px;width:33.2px;text-align:center;font:bold 4.5px 'Liberation Sans',sans-serif;color:#3a3a3a">CM</span><div class="bg" style="left:925.2px;top:2px;width:1px;height:8px;background:#d4d4d4"></div><span class="t" style="left:925.8px;top:2px;width:32.8px;text-align:center;font:bold 4.5px 'Liberation Sans',sans-serif;color:#3a3a3a">CN</span><div class="bg" style="left:958.0px;top:2px;width:1px;height:8px;background:#d4d4d4"></div><span class="t" style="left:958.5px;top:2px;width:33.0px;text-align:center;font:bold 4.5px 'Liberation Sans',sans-serif;color:#3a3a3a">CO</span><div class="bg" style="left:991.0px;top:2px;width:1px;height:8px;background:#d4d4d4"></div><span class="t" style="left:991.5px;top:2px;width:33.0px;text-align:center;font:bold 4.5px 'Liberation Sans',sans-serif;color:#3a3a3a">CP</span><div class="bg" style="left:1024.0px;top:2px;width:1px;height:8px;background:#d4d4d4"></div><span class="t" style="left:1024.5px;top:2px;width:33.0px;text-align:center;font:bold 4.5px 'Liberation Sans',sans-serif;color:#3a3a3a">CQ</span><div class="bg" style="left:1057.0px;top:2px;width:1px;height:8px;background:#d4d4d4"></div><span class="t" style="left:1057.5px;top:2px;width:33.0px;text-align:center;font:bold 4.5px 'Liberation Sans',sans-serif;color:#3a3a3a">CR</span><div class="bg" style="left:1090.0px;top:2px;width:1px;height:8px;background:#d4d4d4"></div><span class="t" style="left:1090.5px;top:2px;width:32.5px;text-align:center;font:bold 4.5px 'Liberation Sans',sans-serif;color:#3a3a3a">CS</span><div class="bg" style="left:1122.5px;top:2px;width:1px;height:8px;background:#d4d4d4"></div><span class="t" style="left:1123.0px;top:2px;width:43.8px;text-align:center;font:bold 4.5px 'Liberation Sans',sans-serif;color:#3a3a3a">CT</span><div class="bg" style="left:1166.2px;top:2px;width:1px;height:8px;background:#d4d4d4"></div><span class="t" style="left:1166.8px;top:2px;width:42.5px;text-align:center;font:bold 4.5px 'Liberation Sans',sans-serif;color:#3a3a3a">CU</span><div class="bg" style="left:1208.8px;top:2px;width:1px;height:8px;background:#d4d4d4"></div><span class="t" style="left:1209.2px;top:2px;width:43.2px;text-align:center;font:bold 4.5px 'Liberation Sans',sans-serif;color:#3a3a3a">CV</span><div class="bg" style="left:1252.0px;top:2px;width:1px;height:8px;background:#d4d4d4"></div><span class="t" style="left:1252.5px;top:2px;width:43.0px;text-align:center;font:bold 4.5px 'Liberation Sans',sans-serif;color:#3a3a3a">CW</span><div class="bg" style="left:1295.0px;top:2px;width:1px;height:8px;background:#d4d4d4"></div><span class="t" style="left:1295.5px;top:2px;width:42.5px;text-align:center;font:bold 4.5px 'Liberation Sans',sans-serif;color:#3a3a3a">CX</span><div class="bg" style="left:1337.5px;top:2px;width:1px;height:8px;background:#d4d4d4"></div><span class="t" style="left:1338.0px;top:2px;width:52.8px;text-align:center;font:bold 4.5px 'Liberation Sans',sans-serif;color:#3a3a3a">CY</span><div class="bg" style="left:1390.2px;top:2px;width:1px;height:8px;background:#d4d4d4"></div><span class="t" style="left:1390.8px;top:2px;width:42.8px;text-align:center;font:bold 4.5px 'Liberation Sans',sans-serif;color:#3a3a3a">CZ</span><div class="bg" style="left:1433.0px;top:2px;width:1px;height:8px;background:#d4d4d4"></div><span class="t" style="left:1433.5px;top:2px;width:43.0px;text-align:center;font:bold 4.5px 'Liberation Sans',sans-serif;color:#3a3a3a">DA</span><div class="bg" style="left:1476.0px;top:2px;width:1px;height:8px;background:#d4d4d4"></div><span class="t" style="left:1476.5px;top:2px;width:42.8px;text-align:center;font:bold 4.5px 'Liberation Sans',sans-serif;color:#3a3a3a">DB</span><div class="bg" style="left:1518.8px;top:2px;width:1px;height:8px;background:#d4d4d4"></div><span class="t" style="left:1519.2px;top:2px;width:43.2px;text-align:center;font:bold 4.5px 'Liberation Sans',sans-serif;color:#3a3a3a">DC</span><div class="bg" style="left:1562.0px;top:2px;width:1px;height:8px;background:#d4d4d4"></div><span class="t" style="left:1562.5px;top:2px;width:53.8px;text-align:center;font:bold 4.5px 'Liberation Sans',sans-serif;color:#3a3a3a">DD</span><div class="bg" style="left:1615.8px;top:2px;width:1px;height:8px;background:#d4d4d4"></div><span class="t" style="left:1616.2px;top:2px;width:43.2px;text-align:center;font:bold 4.5px 'Liberation Sans',sans-serif;color:#3a3a3a">DE</span><div class="bg" style="left:1659.0px;top:2px;width:1px;height:8px;background:#d4d4d4"></div><span class="t" style="left:1659.5px;top:2px;width:48.0px;text-align:center;font:bold 4.5px 'Liberation Sans',sans-serif;color:#3a3a3a">DF</span><div class="bg" style="left:1707.0px;top:2px;width:1px;height:8px;background:#d4d4d4"></div><span class="t" style="left:1707.5px;top:2px;width:48.0px;text-align:center;font:bold 4.5px 'Liberation Sans',sans-serif;color:#3a3a3a">DG</span><div class="bg" style="left:1755.0px;top:2px;width:1px;height:8px;background:#d4d4d4"></div><span class="t" style="left:1755.5px;top:2px;width:43.0px;text-align:center;font:bold 4.5px 'Liberation Sans',sans-serif;color:#3a3a3a">DH</span><div class="bg" style="left:1798.0px;top:2px;width:1px;height:8px;background:#d4d4d4"></div><span class="t" style="left:1798.5px;top:2px;width:43.0px;text-align:center;font:bold 4.5px 'Liberation Sans',sans-serif;color:#3a3a3a">DI</span><div class="bg" style="left:1841.0px;top:2px;width:1px;height:8px;background:#d4d4d4"></div><span class="t" style="left:1841.5px;top:2px;width:43.2px;text-align:center;font:bold 4.5px 'Liberation Sans',sans-serif;color:#3a3a3a">DJ</span><div class="bg" style="left:1884.2px;top:2px;width:1px;height:8px;background:#d4d4d4"></div><div class="bg" style="left:0.0px;top:11.0px;width:11.0px;height:95.5px;background:#fff"></div><div class="bg" style="left:0.0px;top:106.5px;width:11.0px;height:769.5px;background:#e2e2e2"></div><div class="bg" style="left:10.5px;top:106.5px;width:2.0px;height:769.5px;background:#217346"></div><div class="bg" style="left:11.0px;top:10.0px;width:1.0px;height:96.5px;background:#c6c6c6"></div><span class="t" style="left:0;top:20.0px;width:10px;text-align:center;font:bold 5.1px 'Liberation Sans',sans-serif;color:#3a3a3a">1</span><span class="t" style="left:0;top:57.0px;width:10px;text-align:center;font:bold 5.1px 'Liberation Sans',sans-serif;color:#3a3a3a">2</span><span class="t" style="left:0;top:100.5px;width:10px;text-align:center;font:bold 5.1px 'Liberation Sans',sans-serif;color:#3a3a3a">3</span><span class="t" style="left:0;top:112.5px;width:10px;text-align:center;font:bold 5.1px 'Liberation Sans',sans-serif;color:#3a3a3a">4</span><div class="bg" style="left:0;top:118.0px;width:10.5px;height:1px;background:#c8c8c8"></div><span class="t" style="left:0;top:124.5px;width:10px;text-align:center;font:bold 5.1px 'Liberation Sans',sans-serif;color:#3a3a3a">5</span><div class="bg" style="left:0;top:130.0px;width:10.5px;height:1px;background:#c8c8c8"></div><span class="t" style="left:0;top:136.5px;width:10px;text-align:center;font:bold 5.1px 'Liberation Sans',sans-serif;color:#3a3a3a">6</span><div class="bg" style="left:0;top:142.0px;width:10.5px;height:1px;background:#c8c8c8"></div><span class="t" style="left:0;top:148.5px;width:10px;text-align:center;font:bold 5.1px 'Liberation Sans',sans-serif;color:#3a3a3a">7</span><div class="bg" style="left:0;top:154.0px;width:10.5px;height:1px;background:#c8c8c8"></div><span class="t" style="left:0;top:160.5px;width:10px;text-align:center;font:bold 5.1px 'Liberation Sans',sans-serif;color:#3a3a3a">8</span><div class="bg" style="left:0;top:166.0px;width:10.5px;height:1px;background:#c8c8c8"></div><span class="t" style="left:0;top:172.5px;width:10px;text-align:center;font:bold 5.1px 'Liberation Sans',sans-serif;color:#3a3a3a">9</span><div class="bg" style="left:0;top:178.0px;width:10.5px;height:1px;background:#c8c8c8"></div><span class="t" style="left:0;top:184.5px;width:10px;text-align:center;font:bold 5.1px 'Liberation Sans',sans-serif;color:#3a3a3a">10</span><div class="bg" style="left:0;top:190.0px;width:10.5px;height:1px;background:#c8c8c8"></div><span class="t" style="left:0;top:196.5px;width:10px;text-align:center;font:bold 5.1px 'Liberation Sans',sans-serif;color:#3a3a3a">11</span><div class="bg" style="left:0;top:202.0px;width:10.5px;height:1px;background:#c8c8c8"></div><span class="t" style="left:0;top:208.5px;width:10px;text-align:center;font:bold 5.1px 'Liberation Sans',sans-serif;color:#3a3a3a">12</span><div class="bg" style="left:0;top:214.0px;width:10.5px;height:1px;background:#c8c8c8"></div><span class="t" style="left:0;top:220.5px;width:10px;text-align:center;font:bold 5.1px 'Liberation Sans',sans-serif;color:#3a3a3a">13</span><div class="bg" style="left:0;top:226.0px;width:10.5px;height:1px;background:#c8c8c8"></div><span class="t" style="left:0;top:232.5px;width:10px;text-align:center;font:bold 5.1px 'Liberation Sans',sans-serif;color:#3a3a3a">14</span><div class="bg" style="left:0;top:238.0px;width:10.5px;height:1px;background:#c8c8c8"></div><span class="t" style="left:0;top:244.5px;width:10px;text-align:center;font:bold 5.1px 'Liberation Sans',sans-serif;color:#3a3a3a">15</span><div class="bg" style="left:0;top:250.0px;width:10.5px;height:1px;background:#c8c8c8"></div><span class="t" style="left:0;top:256.5px;width:10px;text-align:center;font:bold 5.1px 'Liberation Sans',sans-serif;color:#3a3a3a">16</span><div class="bg" style="left:0;top:262.0px;width:10.5px;height:1px;background:#c8c8c8"></div><span class="t" style="left:0;top:268.5px;width:10px;text-align:center;font:bold 5.1px 'Liberation Sans',sans-serif;color:#3a3a3a">17</span><div class="bg" style="left:0;top:274.0px;width:10.5px;height:1px;background:#c8c8c8"></div><span class="t" style="left:0;top:280.5px;width:10px;text-align:center;font:bold 5.1px 'Liberation Sans',sans-serif;color:#3a3a3a">18</span><div class="bg" style="left:0;top:286.0px;width:10.5px;height:1px;background:#c8c8c8"></div><span class="t" style="left:0;top:292.5px;width:10px;text-align:center;font:bold 5.1px 'Liberation Sans',sans-serif;color:#3a3a3a">19</span><div class="bg" style="left:0;top:298.0px;width:10.5px;height:1px;background:#c8c8c8"></div><span class="t" style="left:0;top:304.5px;width:10px;text-align:center;font:bold 5.1px 'Liberation Sans',sans-serif;color:#3a3a3a">20</span><div class="bg" style="left:0;top:310.0px;width:10.5px;height:1px;background:#c8c8c8"></div><span class="t" style="left:0;top:316.5px;width:10px;text-align:center;font:bold 5.1px 'Liberation Sans',sans-serif;color:#3a3a3a">21</span><div class="bg" style="left:0;top:322.0px;width:10.5px;height:1px;background:#c8c8c8"></div><span class="t" style="left:0;top:328.5px;width:10px;text-align:center;font:bold 5.1px 'Liberation Sans',sans-serif;color:#3a3a3a">22</span><div class="bg" style="left:0;top:334.0px;width:10.5px;height:1px;background:#c8c8c8"></div><span class="t" style="left:0;top:340.5px;width:10px;text-align:center;font:bold 5.1px 'Liberation Sans',sans-serif;color:#3a3a3a">23</span><div class="bg" style="left:0;top:346.0px;width:10.5px;height:1px;background:#c8c8c8"></div><span class="t" style="left:0;top:352.5px;width:10px;text-align:center;font:bold 5.1px 'Liberation Sans',sans-serif;color:#3a3a3a">24</span><div class="bg" style="left:0;top:358.0px;width:10.5px;height:1px;background:#c8c8c8"></div><span class="t" style="left:0;top:364.5px;width:10px;text-align:center;font:bold 5.1px 'Liberation Sans',sans-serif;color:#3a3a3a">25</span><div class="bg" style="left:0;top:370.0px;width:10.5px;height:1px;background:#c8c8c8"></div><span class="t" style="left:0;top:376.5px;width:10px;text-align:center;font:bold 5.1px 'Liberation Sans',sans-serif;color:#3a3a3a">26</span><div class="bg" style="left:0;top:382.0px;width:10.5px;height:1px;background:#c8c8c8"></div><span class="t" style="left:0;top:388.5px;width:10px;text-align:center;font:bold 5.1px 'Liberation Sans',sans-serif;color:#3a3a3a">27</span><div class="bg" style="left:0;top:394.0px;width:10.5px;height:1px;background:#c8c8c8"></div><span class="t" style="left:0;top:400.5px;width:10px;text-align:center;font:bold 5.1px 'Liberation Sans',sans-serif;color:#3a3a3a">28</span><div class="bg" style="left:0;top:406.0px;width:10.5px;height:1px;background:#c8c8c8"></div><span class="t" style="left:0;top:412.5px;width:10px;text-align:center;font:bold 5.1px 'Liberation Sans',sans-serif;color:#3a3a3a">29</span><div class="bg" style="left:0;top:418.0px;width:10.5px;height:1px;background:#c8c8c8"></div><span class="t" style="left:0;top:424.5px;width:10px;text-align:center;font:bold 5.1px 'Liberation Sans',sans-serif;color:#3a3a3a">30</span><div class="bg" style="left:0;top:430.0px;width:10.5px;height:1px;background:#c8c8c8"></div><span class="t" style="left:0;top:436.5px;width:10px;text-align:center;font:bold 5.1px 'Liberation Sans',sans-serif;color:#3a3a3a">31</span><div class="bg" style="left:0;top:442.0px;width:10.5px;height:1px;background:#c8c8c8"></div><span class="t" style="left:0;top:448.5px;width:10px;text-align:center;font:bold 5.1px 'Liberation Sans',sans-serif;color:#3a3a3a">32</span><div class="bg" style="left:0;top:454.0px;width:10.5px;height:1px;background:#c8c8c8"></div><span class="t" style="left:0;top:460.5px;width:10px;text-align:center;font:bold 5.1px 'Liberation Sans',sans-serif;color:#3a3a3a">33</span><div class="bg" style="left:0;top:466.0px;width:10.5px;height:1px;background:#c8c8c8"></div><span class="t" style="left:0;top:472.5px;width:10px;text-align:center;font:bold 5.1px 'Liberation Sans',sans-serif;color:#3a3a3a">34</span><div class="bg" style="left:0;top:478.0px;width:10.5px;height:1px;background:#c8c8c8"></div><span class="t" style="left:0;top:484.5px;width:10px;text-align:center;font:bold 5.1px 'Liberation Sans',sans-serif;color:#3a3a3a">35</span><div class="bg" style="left:0;top:490.0px;width:10.5px;height:1px;background:#c8c8c8"></div><span class="t" style="left:0;top:496.5px;width:10px;text-align:center;font:bold 5.1px 'Liberation Sans',sans-serif;color:#3a3a3a">36</span><div class="bg" style="left:0;top:502.0px;width:10.5px;height:1px;background:#c8c8c8"></div><span class="t" style="left:0;top:508.5px;width:10px;text-align:center;font:bold 5.1px 'Liberation Sans',sans-serif;color:#3a3a3a">37</span><div class="bg" style="left:0;top:514.0px;width:10.5px;height:1px;background:#c8c8c8"></div><span class="t" style="left:0;top:520.5px;width:10px;text-align:center;font:bold 5.1px 'Liberation Sans',sans-serif;color:#3a3a3a">38</span><div class="bg" style="left:0;top:526.0px;width:10.5px;height:1px;background:#c8c8c8"></div><span class="t" style="left:0;top:532.5px;width:10px;text-align:center;font:bold 5.1px 'Liberation Sans',sans-serif;color:#3a3a3a">39</span><div class="bg" style="left:0;top:538.0px;width:10.5px;height:1px;background:#c8c8c8"></div><span class="t" style="left:0;top:544.5px;width:10px;text-align:center;font:bold 5.1px 'Liberation Sans',sans-serif;color:#3a3a3a">40</span><div class="bg" style="left:0;top:550.0px;width:10.5px;height:1px;background:#c8c8c8"></div><span class="t" style="left:0;top:556.5px;width:10px;text-align:center;font:bold 5.1px 'Liberation Sans',sans-serif;color:#3a3a3a">41</span><div class="bg" style="left:0;top:562.0px;width:10.5px;height:1px;background:#c8c8c8"></div><span class="t" style="left:0;top:568.5px;width:10px;text-align:center;font:bold 5.1px 'Liberation Sans',sans-serif;color:#3a3a3a">42</span><div class="bg" style="left:0;top:574.0px;width:10.5px;height:1px;background:#c8c8c8"></div><span class="t" style="left:0;top:580.5px;width:10px;text-align:center;font:bold 5.1px 'Liberation Sans',sans-serif;color:#3a3a3a">43</span><div class="bg" style="left:0;top:586.0px;width:10.5px;height:1px;background:#c8c8c8"></div><span class="t" style="left:0;top:592.0px;width:10px;text-align:center;font:bold 5.1px 'Liberation Sans',sans-serif;color:#3a3a3a">44</span><div class="bg" style="left:0;top:597.5px;width:10.5px;height:1px;background:#c8c8c8"></div><span class="t" style="left:0;top:603.4px;width:10px;text-align:center;font:bold 5.1px 'Liberation Sans',sans-serif;color:#3a3a3a">45</span><div class="bg" style="left:0;top:608.9px;width:10.5px;height:1px;background:#c8c8c8"></div><span class="t" style="left:0;top:630.0px;width:10px;text-align:center;font:bold 5.1px 'Liberation Sans',sans-serif;color:#3a3a3a">46</span><div class="bg" style="left:0;top:635.5px;width:10.5px;height:1px;background:#c8c8c8"></div><span class="t" style="left:0;top:643.0px;width:10px;text-align:center;font:bold 5.1px 'Liberation Sans',sans-serif;color:#3a3a3a">47</span><div class="bg" style="left:0;top:648.5px;width:10.5px;height:1px;background:#c8c8c8"></div><span class="t" style="left:0;top:656.0px;width:10px;text-align:center;font:bold 5.1px 'Liberation Sans',sans-serif;color:#3a3a3a">48</span><div class="bg" style="left:0;top:661.5px;width:10.5px;height:1px;background:#c8c8c8"></div><span class="t" style="left:0;top:672.0px;width:10px;text-align:center;font:bold 5.1px 'Liberation Sans',sans-serif;color:#3a3a3a">49</span><div class="bg" style="left:0;top:677.5px;width:10.5px;height:1px;background:#c8c8c8"></div><span class="t" style="left:0;top:689.0px;width:10px;text-align:center;font:bold 5.1px 'Liberation Sans',sans-serif;color:#3a3a3a">50</span><div class="bg" style="left:0;top:694.5px;width:10.5px;height:1px;background:#c8c8c8"></div><span class="t" style="left:0;top:701.2px;width:10px;text-align:center;font:bold 5.1px 'Liberation Sans',sans-serif;color:#3a3a3a">51</span><div class="bg" style="left:0;top:706.7px;width:10.5px;height:1px;background:#c8c8c8"></div><span class="t" style="left:0;top:713.1px;width:10px;text-align:center;font:bold 5.1px 'Liberation Sans',sans-serif;color:#3a3a3a">52</span><div class="bg" style="left:0;top:718.6px;width:10.5px;height:1px;background:#c8c8c8"></div><span class="t" style="left:0;top:725.1px;width:10px;text-align:center;font:bold 5.1px 'Liberation Sans',sans-serif;color:#3a3a3a">53</span><div class="bg" style="left:0;top:730.6px;width:10.5px;height:1px;background:#c8c8c8"></div><span class="t" style="left:0;top:737.0px;width:10px;text-align:center;font:bold 5.1px 'Liberation Sans',sans-serif;color:#3a3a3a">54</span><div class="bg" style="left:0;top:742.5px;width:10.5px;height:1px;background:#c8c8c8"></div><span class="t" style="left:0;top:749.0px;width:10px;text-align:center;font:bold 5.1px 'Liberation Sans',sans-serif;color:#3a3a3a">55</span><div class="bg" style="left:0;top:754.5px;width:10.5px;height:1px;background:#c8c8c8"></div><span class="t" style="left:0;top:760.9px;width:10px;text-align:center;font:bold 5.1px 'Liberation Sans',sans-serif;color:#3a3a3a">56</span><div class="bg" style="left:0;top:766.4px;width:10.5px;height:1px;background:#c8c8c8"></div><span class="t" style="left:0;top:772.8px;width:10px;text-align:center;font:bold 5.1px 'Liberation Sans',sans-serif;color:#3a3a3a">57</span><div class="bg" style="left:0;top:778.3px;width:10.5px;height:1px;background:#c8c8c8"></div><span class="t" style="left:0;top:784.8px;width:10px;text-align:center;font:bold 5.1px 'Liberation Sans',sans-serif;color:#3a3a3a">58</span><div class="bg" style="left:0;top:790.3px;width:10.5px;height:1px;background:#c8c8c8"></div><span class="t" style="left:0;top:796.7px;width:10px;text-align:center;font:bold 5.1px 'Liberation Sans',sans-serif;color:#3a3a3a">59</span><div class="bg" style="left:0;top:802.2px;width:10.5px;height:1px;background:#c8c8c8"></div><span class="t" style="left:0;top:808.7px;width:10px;text-align:center;font:bold 5.1px 'Liberation Sans',sans-serif;color:#3a3a3a">60</span><div class="bg" style="left:0;top:814.2px;width:10.5px;height:1px;background:#c8c8c8"></div><span class="t" style="left:0;top:820.6px;width:10px;text-align:center;font:bold 5.1px 'Liberation Sans',sans-serif;color:#3a3a3a">61</span><div class="bg" style="left:0;top:826.1px;width:10.5px;height:1px;background:#c8c8c8"></div><span class="t" style="left:0;top:832.5px;width:10px;text-align:center;font:bold 5.1px 'Liberation Sans',sans-serif;color:#3a3a3a">62</span><div class="bg" style="left:0;top:838.0px;width:10.5px;height:1px;background:#c8c8c8"></div><span class="t" style="left:0;top:844.5px;width:10px;text-align:center;font:bold 5.1px 'Liberation Sans',sans-serif;color:#3a3a3a">63</span><div class="bg" style="left:0;top:850.0px;width:10.5px;height:1px;background:#c8c8c8"></div><span class="t" style="left:0;top:856.4px;width:10px;text-align:center;font:bold 5.1px 'Liberation Sans',sans-serif;color:#3a3a3a">64</span><div class="bg" style="left:0;top:861.9px;width:10.5px;height:1px;background:#c8c8c8"></div><span class="t" style="left:0;top:868.4px;width:10px;text-align:center;font:bold 5.1px 'Liberation Sans',sans-serif;color:#3a3a3a">65</span><div class="bg" style="left:0;top:873.9px;width:10.5px;height:1px;background:#c8c8c8"></div><span class="t" style="left:0;top:880.3px;width:10px;text-align:center;font:bold 5.1px 'Liberation Sans',sans-serif;color:#3a3a3a">66</span><div class="bg" style="left:0;top:885.8px;width:10.5px;height:1px;background:#c8c8c8"></div><div class="bg" style="left:152.0px;top:0.0px;width:1.2px;height:876.0px;background:#a6a6a6"></div><span class="t" style="left:186.0px;top:11.5px;font-weight:bold;font-size:11.25px;line-height:12px"><span class=rd>KLEMS</span> Модели <span class=bl>VA</span> <span class=rd>производственных</span> функций</span><div class="bg" style="left:925.8px;top:11.0px;width:65.8px;height:15.0px;background:#fcd5b4"></div><span class="t bl" style="left:925.75px;top:11.5px;width:32.75px;text-align:center;font-weight:bold;font-size:11.25px;line-height:12px">15%</span><span class="t bl" style="left:958.5px;top:11.5px;width:33px;text-align:center;font-weight:bold;font-size:11.25px;line-height:12px">7</span><span class="t bl" style="left:993.5px;top:11.5px;font-weight:bold;font-size:11.25px;line-height:12px">ERROR=15,79%</span><span class="t" style="left:1093.0px;top:11.5px;font-weight:bold;font-size:11.25px;line-height:12px"><span class=rd>KLEMS</span> Модели <span class=bl>VA</span> <span class=rd>производственных</span> функций</span><div class="bg" style="left:1338.0px;top:11.0px;width:52.8px;height:15.0px;background:#ffc000"></div><span class="t rd" style="left:1338px;top:11.5px;width:52.75px;text-align:center;font-weight:bold;font-size:11.25px;line-height:12px">0,95</span><span class="t bl" style="left:1392.5px;top:11.5px;font-weight:bold;font-size:11.25px;line-height:12px">ERROR=5,13%</span><span class="t" style="left:156px;top:28.5px;font-size:11.5px;line-height:12px">2010</span><div class="bg" style="left:182.5px;top:26.0px;width:941px;height:37.5px;background:#d8e4bc;border:2px solid #000;text-align:center;font-weight:bold;font-size:12.4px;line-height:17.6px;white-space:nowrap;padding-top:1.3px;overflow:hidden"><span class=rd>ПРЕДВАРИТЕЛЬНЫЙ/УПРОЩЁННЫЙ</span> ДИСПЕРСИОННЫЙ <span class=bl>АНАЛИЗ,</span> ЭЛЕМЕНТАРНАЯ-ОПИСАТЕЛЬНАЯ СТАТИСТИКА, НАЧАЛЬНАЯ <span class=bl>ЭКОНОМЕТРИКА,</span><br><span class=rd>25 статистическая</span> <span class=bl>модель по каждому фактору</span></div><div class="bg" style="left:1123.3px;top:26.0px;width:900px;height:37.5px;background:#92d050;border:2px solid #000;border-left:0;text-align:center;font-weight:bold;font-size:13.42px;line-height:17px;white-space:nowrap;overflow:hidden;padding-top:1px"><span class=rd>УГЛУБЛЁННЫЙ</span> <span class=bl>АНАЛИЗ:</span> РЕГРЕССИОННЫЙ, ДИСКРИМИНАНТНЫЙ, ФАКТОРНЫЙ, КЛАСТЕРНЫЙ, <span class=bl>МОДЕЛИРОВАНИЕ</span><br>МНОЖЕСТВ, НЕЙРОННЫХ СЕТЕЙ</div><span class="t" style="left:13px;top:67.0px;width:139px;overflow:hidden;font-weight:bold;font-size:11.3px;line-height:12px"><span class=rd>KLEMS</span> Модели <span class=bl>VA</span> <span class=rd>производственных</span></span><span class="t" style="left:13px;top:612.0px;width:139px;overflow:hidden;font-weight:bold;font-size:11.3px;line-height:12px"><span class=rd>KLEMS</span> Модели <span class=bl>LAB</span> <span class=rd>производственных</span></span><div class="r hd" style="top:64.0px;height:42.5px"><b class="BS">MX</b><b class="BT">Min</b><b class="BU">Max</b><b class="BV tri" style="padding-top:2px">Sum</b><b class="BW tri" style="background:#ccffcc;">ME -<br>Медна<br>на</b><b class="BX tri" style="text-align:left!important;padding-left:2px!important">ME=>MX</b><b class="BY tri" style="background:#ffc000;">DX_Г -<br>Генер<br>альна<br>яДисп</b><b class="BZ tri" style="background:#ffc000;">DX_В -<br>Выбо<br>рочна<br>яДисп</b><b class="CA tri" style="background:#ffc000;">SX_Г -<br>средне<br>квадр<br>атичн</b><b class="CB" style="background:#ffc000;">SX_В -<br>средне<br>квадр<br>атичн</b><b class="CC">MinSX_<br>B</b><b class="CD">MaxSX_<br>B</b><b class="CE tri" style="padding-top:2px">N</b><b class="CF tri">SE=Err<br>MX</b><b class="CG">t=MX/<br>SE</b><b class="CH tri">del</b><b class="CI tri">Min_T</b><b class="CJ tri">Max_T</b><b class="CK tri">R=Ma<br>x-Min<br>(Разм<br>ах</b><b class="CL tri">r=R/MX<br>(коэфф<br>ициент<br>осцилля</b><b class="CM tri" style="background:#ffc000;">VarГ -<br>Генер<br>альна<br>яВари</b><b class="CN tri" style="background:#ffc000;">VarВ -<br>Выбо<br>рочна<br>яВари</b><b class="CO" style="background:#ffcc99;">VarГ<br>Error<br>МОДЕ<br>ЛЕЙ</b><b class="CP tri" style="font-size:7.3px;line-height:9px">ASS</b><b class="CQ tri" style="background:#ffc000;">As -<br>Эласт<br>ичнос<br>ть</b><b class="CR tri" style="background:#ffc000;">Вид<br>Ассим<br>етрии<br>МХ-</b><b class="CS tri" style="font-size:7.3px;line-height:9px">ЭКС</b><b class="CT tri" style="background:#ccffcc;font-size:7.2px;line-height:9px">MX -<br><span class=rd>ИНТЕГРАЛ</span></b><b class="CU" style="background:#ffff00;">MX(F)</b><b class="CV tri" style="background:#ffcc99;">F(X)<br>(excel)</b><b class="CW" style="background:#ffcc99;font-size:12.3px;line-height:14px;padding-top:2px!important">SStot</b><b class="CX" style="background:#ffcc99;font-size:12.3px;line-height:14px;padding-top:2px!important">SSres</b><b class="CY" style="background:#ffcc99;font-size:12.3px;line-height:14px;padding-top:2px!important">R2</b><b class="CZ" style="background:#ffcc99;">Error<br>МОДЕЛ<br>ЕЙ</b><b class="DA tri" style="background:#ffcc99;">F(X)-b0</b><b class="DB" style="background:#ffcc99;">F(X)-b1</b><b class="DC" style="background:#ffcc99;font-size:12.3px;line-height:14px;padding-top:2px!important">SSreg_<br><span class=rd>Line</span></b><b class="DD" style="background:#ffcc99;font-size:12.3px;line-height:14px;padding-top:2px!important">R2-b0</b><b class="DE" style="background:#ffcc99;">Error<br>МОДЕЛ<br>ЕЙ</b><b class="DF" style="background:#ffff99;font-size:9.6px;padding-top:2px!important"><span class=bl>b0</span></b><b class="DG tri" style="background:#ccffcc;font-size:9.6px;padding-top:2px!important"><span class=bl>b1</span></b><b class="DH" style="background:#ffcc99;font-size:12.3px;line-height:14px;padding-top:2px!important">SSreg_<br><span class=rd>EXP</span></b><b class="DI" style="background:#ffcc99;font-size:10.9px;line-height:14px;padding-top:2px!important;white-space:nowrap">R2-<span class=rd>EXP</span></b><b class="DJ" style="background:#ffcc99;">Error<br>МОДЕЛ<br>ЕЙ</b><b class="DK"></b></div><div class="r hd" style="top:610.4px;height:25.6px"><b class="BS">MX</b><b class="BT">Min</b><b class="BU">Max</b><b class="BV tri" style="padding-top:2px">Sum</b><b class="BW tri" style="background:#ccffcc;">ME -<br>Медна<br>на</b><b class="BX tri" style="text-align:left!important;padding-left:2px!important">ME=>MX</b><b class="BY tri" style="background:#ffc000;">DX_Г -<br>Генер<br>альна<br>яДисп</b><b class="BZ tri" style="background:#ffc000;">DX_В -<br>Выбо<br>рочна<br>яДисп</b><b class="CA tri" style="background:#ffc000;">SX_Г -<br>средне<br>квадр<br>атичн</b><b class="CB" style="background:#ffc000;">SX_В -<br>средне<br>квадр<br>атичн</b><b class="CC">MinSX_<br>B</b><b class="CD">MaxSX_<br>B</b><b class="CE tri" style="padding-top:2px">N</b><b class="CF tri">SE=Err<br>MX</b><b class="CG">t=MX/<br>SE</b><b class="CH tri">del</b><b class="CI tri">Min_T</b><b class="CJ tri">Max_T</b><b class="CK tri">R=Ma<br>x-Min<br>(Разм<br>ах</b><b class="CL tri">r=R/MX<br>(коэфф<br>ициент<br>осцилля</b><b class="CM tri" style="background:#ffc000;">VarГ -<br>Генер<br>альна<br>яВари</b><b class="CN tri" style="background:#ffc000;">VarВ -<br>Выбо<br>рочна<br>яВари</b><b class="CO" style="background:#ffcc99;">VarГ<br>Error<br>МОДЕ<br>ЛЕЙ</b><b class="CP tri" style="font-size:7.3px;line-height:9px">ASS</b><b class="CQ tri" style="background:#ffc000;">As -<br>Эласт<br>ичнос<br>ть</b><b class="CR tri" style="background:#ffc000;">Вид<br>Ассим<br>етрии<br>МХ-</b><b class="CS tri" style="font-size:7.3px;line-height:9px">ЭКС</b><b class="CT tri" style="background:#ccffcc;font-size:7.2px;line-height:9px">MX -<br><span class=rd>ИНТЕГРАЛ</span></b><b class="CU" style="background:#ffff00;">MX(F)</b><b class="CV tri" style="background:#ffcc99;">F(X)<br>(excel)</b><b class="CW" style="background:#ffcc99;font-size:12.3px;line-height:14px;padding-top:2px!important">SStot</b><b class="CX" style="background:#ffcc99;font-size:12.3px;line-height:14px;padding-top:2px!important">SSres</b><b class="CY" style="background:#ffcc99;font-size:12.3px;line-height:14px;padding-top:2px!important">R2</b><b class="CZ" style="background:#ffcc99;">Error<br>МОДЕЛ<br>ЕЙ</b><b class="DA tri" style="background:#ffcc99;">F(X)-b0</b><b class="DB" style="background:#ffcc99;">F(X)-b1</b><b class="DC" style="background:#ffcc99;font-size:12.3px;line-height:14px;padding-top:2px!important">SSreg_<br><span class=rd>Line</span></b><b class="DD" style="background:#ffcc99;font-size:12.3px;line-height:14px;padding-top:2px!important">R2-b0</b><b class="DE" style="background:#ffcc99;">Error<br>МОДЕЛ<br>ЕЙ</b><b class="DF" style="background:#ffff99;font-size:9.6px;padding-top:2px!important"><span class=bl>b0</span></b><b class="DG tri" style="background:#ccffcc;font-size:9.6px;padding-top:2px!important"><span class=bl>b1</span></b><b class="DH" style="background:#ffcc99;font-size:12.3px;line-height:14px;padding-top:2px!important">SSreg_<br><span class=rd>EXP</span></b><b class="DI" style="background:#ffcc99;font-size:10.9px;line-height:14px;padding-top:2px!important;white-space:nowrap">R2-<span class=rd>EXP</span></b><b class="DJ" style="background:#ffcc99;">Error<br>МОДЕЛ<br>ЕЙ</b><b class="DK"></b></div><div class="bg" style="left:11.5px;top:106.5px;width:171.0px;height:12.0px;background:#ffff00"></div><div class="r" style="top:106.5px;height:12.0px;line-height:13.5px;"><i class="B B" style="padding-left:2.0px">TOT</i><i class="C B" style="padding-left:3.0px">ВСЕГО ОТРАСЛЕЙ</i><i class="BR rd" style="font-weight:bold;font-size:10px">#####</i><i class="BS">52,7%</i><i class="BT">49,7%</i><i class="BU">55,8%</i><i class="BV">33,72</i><i class="BW">52,6%</i><i class="BX" style="font-size:8.7px;">Эласт&gt;1</i><i class="BY">2E-04</i><i class="BZ">2E-04</i><i class="CA">0,016</i><i class="CB">0,016</i><i class="CC">51,1%</i><i class="CD">54,3%</i><i class="CE">64</i><i class="CF">0,20%</i><i class="CG">268,6</i><i class="CH">0,39%</i><i class="CI">52,30%</i><i class="CJ">53,08%</i><i class="CK">6,1%</i><i class="CL">11,5%</i><i class="CM">3,0%</i><i class="CN">3,0%</i><i class="CP">0,014</i><i class="CR">Меньша</i><i class="CS">-1,048</i><i class="CT">53,8%</i><i class="CU">4188544</i><i class="CV">54,1%</i><i class="CW">1,2E+15</i><i class="CX">8,6E+11</i><i class="CY">0,9993</i><i class="DA">-48610,7</i><i class="DB">0,54415</i><i class="DC">1,2E+15</i><i class="DD">0,9993348</i><i class="DF">0,41</i><i class="DG">1,02</i></div><div class="bg" style="left:37.0px;top:118.5px;width:115.5px;height:12.0px;background:#d8e4bc"></div><div class="r" style="top:118.5px;height:12.0px;line-height:13.5px;"><i class="A lk">VA</i><i class="B B" style="padding-left:2.0px">AtB</i><i class="C B" style="padding-left:3.0px">СЕЛЬСКОЕ ХОЗЯЙ</i><i class="BS">47,8%</i><i class="BT">38,0%</i><i class="BU">63,9%</i><i class="BV">30,56</i><i class="BW">47,1%</i><i class="BX" style="font-size:8.7px;">Эласт&gt;1</i><i class="BY">0,004</i><i class="BZ">0,004</i><i class="CA">0,06</i><i class="CB">0,06</i><i class="CC">41,7%</i><i class="CD">53,8%</i><i class="CE">64</i><i class="CF">0,75%</i><i class="CG">63,55</i><i class="CH">1,50%</i><i class="CI">46,25%</i><i class="CJ">49,26%</i><i class="CK">25,9%</i><i class="CL">54,2%</i><i class="CM">12,5%</i><i class="CN">12,6%</i><i class="CP">0,965</i><i class="CR">Меньша</i><i class="CS">0,44</i><i class="CT">44,9%</i><i class="CU">69553,6</i><i class="CV">44,0%</i><i class="CW">1,3E+11</i><i class="CX">1,7E+09</i><i class="CY">0,9866</i><i class="DA">4610,4</i><i class="DB">0,41963</i><i class="DC">1,2E+11</i><i class="DD">0,9900002</i><i class="DF">1,87</i><i class="DG">0,88</i></div><div class="bg" style="left:37.0px;top:130.5px;width:115.5px;height:12.0px;background:#d8e4bc"></div><div class="r" style="top:130.5px;height:12.0px;line-height:13.5px;"><i class="A lk">VA</i><i class="B B" style="padding-left:2.0px">C</i><i class="C B" style="padding-left:3.0px">ДОБЫЧА ПОЛЕЗНЫ</i><i class="BS">52,6%</i><i class="BT">45,8%</i><i class="BU">59,1%</i><i class="BV">33,67</i><i class="BW">52,4%</i><i class="BX" style="font-size:8.7px;">Эласт&gt;1</i><i class="BY">5E-04</i><i class="BZ">5E-04</i><i class="CA">0,022</i><i class="CB">0,023</i><i class="CC">50,4%</i><i class="CD">54,9%</i><i class="CE">64</i><i class="CF">0,28%</i><i class="CG">186,7</i><i class="CH">0,56%</i><i class="CI">52,04%</i><i class="CJ">53,17%</i><i class="CK">13,4%</i><i class="CL">25,5%</i><i class="CM">4,3%</i><i class="CN">4,3%</i><i class="CP">0,097</i><i class="CR">Меньша</i><i class="CS">0,816</i><i class="CT">53,3%</i><i class="CU">66797,6</i><i class="CV">53,5%</i><i class="CW">2,8E+11</i><i class="CX">1E+09</i><i class="CY">0,9963</i><i class="DA">-606,092</i><i class="DB">0,53778</i><i class="DC">2,8E+11</i><i class="DD">0,9963287</i><i class="DF">0,46</i><i class="DG">1,01</i></div><div class="bg" style="left:11.5px;top:142.5px;width:1883.5px;height:12.0px;background:#fcd5b4"></div><div class="r" style="top:142.5px;height:12.0px;line-height:13.5px;"><i class="A lk">VA</i><i class="B B" style="padding-left:2.0px">D</i><i class="C B" style="padding-left:3.0px">ПРОИЗВОДСТВО</i><i class="BR gt" style="font-size:6px;font-weight:bold;padding-left:6px;text-align:left">#ЗНАЧ!</i><i class="BS">34,8%</i><i class="BT">30,8%</i><i class="BU">37,8%</i><i class="BV">22,27</i><i class="BW">34,8%</i><i class="BX" style="font-size:8.7px;">Эласт&gt;1</i><i class="BY">3E-04</i><i class="BZ">3E-04</i><i class="CA">0,017</i><i class="CB">0,017</i><i class="CC">33,1%</i><i class="CD">36,5%</i><i class="CE">64</i><i class="CF">0,21%</i><i class="CG">164,9</i><i class="CH">0,42%</i><i class="CI">34,38%</i><i class="CJ">35,22%</i><i class="CK">7,0%</i><i class="CL">20,2%</i><i class="CM">4,8%</i><i class="CN">4,9%</i><i class="CP">-0,285</i><i class="CR">Меньша</i><i class="CS">-0,349</i><i class="CT">34,2%</i><i class="CU">668065</i><i class="CV">34,0%</i><i class="CW">2E+13</i><i class="CX">7E+10</i><i class="CY">0,9965</i><i class="DA">7160,71</i><i class="DB">0,33829</i><i class="DC">2E+13</i><i class="DD">0,9965536</i><i class="DF">0,47</i><i class="DG">0,98</i></div><div class="r" style="top:154.5px;height:12.0px;line-height:13.5px;"><i class="A lk">VA</i><i class="B sc" style="padding-left:2.0px">15t16</i><i class="C s" style="padding-left:2.0px">ЕДА, НАПИТКИ И ТАБАК</i><i class="BS">23,2%</i><i class="BT">17,2%</i><i class="BU">29,3%</i><i class="BV">14,84</i><i class="BW">23,2%</i><i class="BX" style="font-size:8.7px;">Эласт&lt;1</i><i class="BY">5E-04</i><i class="BZ">5E-04</i><i class="CA">0,022</i><i class="CB">0,023</i><i class="CC">20,9%</i><i class="CD">25,5%</i><i class="CE">64</i><i class="CF">0,28%</i><i class="CG">81,87</i><i class="CH">0,57%</i><i class="CI">22,63%</i><i class="CJ">23,76%</i><i class="CK">12,1%</i><i class="CL">52,2%</i><i class="CM">9,7%</i><i class="CN">9,8%</i><i class="CP">0,324</i><i class="CR">Больша</i><i class="CS">1,427</i><i class="CT">24,2%</i><i class="CU">67200,6</i><i class="CV">24,6%</i><i class="CW">2,1E+11</i><i class="CX">4E+09</i><i class="CY">0,9808</i><i class="DA">-3265,11</i><i class="DB">0,2535</i><i class="DC">2E+11</i><i class="DD">0,9820448</i><i class="DF">0,13</i><i class="DG">1,05</i></div><div class="r" style="top:166.5px;height:12.0px;line-height:13.5px;"><i class="A lk">VA</i><i class="B sc" style="padding-left:2.0px">17t19</i><i class="C s" style="padding-left:2.0px">ТЕКСТИЛЬ, ТЕКСТИЛЬ, КОЖА</i><i class="BS">33,0%</i><i class="BT">28,6%</i><i class="BU">47,5%</i><i class="BV">21,13</i><i class="BW">32,7%</i><i class="BX" style="font-size:8.7px;">Эласт&gt;1</i><i class="BY">0,001</i><i class="BZ">0,001</i><i class="CA">0,033</i><i class="CB">0,033</i><i class="CC">29,7%</i><i class="CD">36,3%</i><i class="CE">64</i><i class="CF">0,42%</i><i class="CG">79,42</i><i class="CH">0,83%</i><i class="CI">32,19%</i><i class="CJ">33,85%</i><i class="CK">18,9%</i><i class="CL">57,1%</i><i class="CM">10,0%</i><i class="CN">10,1%</i><i class="CP">2,231</i><i class="CR">Меньша</i><i class="CS">7,062</i><i class="CT">33,5%</i><i class="CU">28333,6</i><i class="CV">33,5%</i><i class="CW">1,5E+10</i><i class="CX">3,7E+08</i><i class="CY">0,9761</i><i class="DA">-103,811</i><i class="DB">0,33608</i><i class="DC">1,5E+10</i><i class="DD">0,9761039</i><i class="DF">0,17</i><i class="DG">1,06</i></div><div class="r" style="top:178.5px;height:12.0px;line-height:13.5px;"><i class="A lk">VA</i><i class="B sc gt" style="padding-left:2.0px">20</i><i class="C s" style="padding-left:2.0px">ДЕРЕВО И ИЗ ДЕРЕВА И ПРОБКИ</i><i class="BS">37,3%</i><i class="BT">32,7%</i><i class="BU">44,2%</i><i class="BV">23,88</i><i class="BW">36,7%</i><i class="BX" style="font-size:8.7px;">Эласт&gt;1</i><i class="BY">6E-04</i><i class="BZ">6E-04</i><i class="CA">0,025</i><i class="CB">0,025</i><i class="CC">34,8%</i><i class="CD">39,8%</i><i class="CE">64</i><i class="CF">0,31%</i><i class="CG">118,7</i><i class="CH">0,63%</i><i class="CI">36,68%</i><i class="CJ">37,94%</i><i class="CK">11,5%</i><i class="CL">30,8%</i><i class="CM">6,7%</i><i class="CN">6,7%</i><i class="CP">0,793</i><i class="CR">Меньша</i><i class="CS">0,018</i><i class="CT">36,4%</i><i class="CU">25972,4</i><i class="CV">35,9%</i><i class="CW">2,9E+10</i><i class="CX">2,1E+08</i><i class="CY">0,9930</i><i class="DA">899,502</i><i class="DB">0,35144</i><i class="DC">2,9E+10</i><i class="DD">0,9937448</i><i class="DF">0,48</i><i class="DG">0,98</i></div><div class="r" style="top:190.5px;height:12.0px;line-height:13.5px;"><i class="A lk">VA</i><i class="B sc" style="padding-left:2.0px">21t22</i><i class="C s" style="padding-left:2.0px">ЦЕЛЛЮЛОЗА, БУМАГА, БУМАГА</i><i class="BS">41,1%</i><i class="BT">37,0%</i><i class="BU">45,4%</i><i class="BV">26,28</i><i class="BW">40,7%</i><i class="BX" style="font-size:8.7px;">Эласт&gt;1</i><i class="BY">5E-04</i><i class="BZ">5E-04</i><i class="CA">0,022</i><i class="CB">0,022</i><i class="CC">38,8%</i><i class="CD">43,3%</i><i class="CE">64</i><i class="CF">0,28%</i><i class="CG">148,1</i><i class="CH">0,55%</i><i class="CI">40,51%</i><i class="CJ">41,62%</i><i class="CK">8,4%</i><i class="CL">20,5%</i><i class="CM">5,4%</i><i class="CN">5,4%</i><i class="CP">0,365</i><i class="CR">Меньша</i><i class="CS">-0,864</i><i class="CT">40,4%</i><i class="CU">70108,2</i><i class="CV">40,3%</i><i class="CW">2,3E+11</i><i class="CX">1,2E+09</i><i class="CY">0,9947</i><i class="DA">368,336</i><i class="DB">0,40151</i><i class="DC">2,3E+11</i><i class="DD">0,9947245</i><i class="DF">0,50</i><i class="DG">0,98</i></div><div class="r" style="top:202.5px;height:12.0px;line-height:13.5px;"><i class="A lk">VA</i><i class="B sc" style="padding-left:2.0px">23t25</i><i class="C s" style="padding-left:2.0px">ХИМИЯ, РЕЗИНА, ПЛАСТИК</i><i class="BS">32,0%</i><i class="BT">21,8%</i><i class="BU">37,6%</i><i class="BV">20,46</i><i class="BW">33,1%</i><i class="BX" style="font-size:8.7px;">Эласт&lt;1</i><i class="BY">0,001</i><i class="BZ">0,001</i><i class="CA">0,038</i><i class="CB">0,039</i><i class="CC">28,1%</i><i class="CD">35,8%</i><i class="CE">64</i><i class="CF">0,48%</i><i class="CG">66,18</i><i class="CH">0,97%</i><i class="CI">31,01%</i><i class="CJ">32,94%</i><i class="CK">15,8%</i><i class="CL">49,3%</i><i class="CM">12,0%</i><i class="CN">12,1%</i><i class="CP">-0,784</i><i class="CR">Больша</i><i class="CS">-0,19</i><i class="CT">30,9%</i><i class="CU">128341</i><i class="CV">30,9%</i><i class="CW">1,1E+12</i><i class="CX">2,2E+10</i><i class="CY">0,9798</i><i class="DA">464,244</i><i class="DB">0,3082</i><i class="DC">1,1E+12</i><i class="DD">0,9797953</i><i class="DF">0,54</i><i class="DG">0,96</i></div><div class="r" style="top:214.5px;height:12.0px;line-height:13.5px;"><i class="A lk">VA</i><i class="B sc gt" style="padding-left:2.0px">23</i><i class="C tn" style="padding-left:2.0px">Кокс, рафинированная нефть</i><i class="BS">17,2%</i><i class="BT">7,7%</i><i class="BU">35,9%</i><i class="BV">11,02</i><i class="BW">17,7%</i><i class="BX" style="font-size:8.7px;">Эласт&lt;1</i><i class="BY">0,005</i><i class="BZ">0,005</i><i class="CA">0,068</i><i class="CB">0,068</i><i class="CC">10,4%</i><i class="CD">24,1%</i><i class="CE">64</i><i class="CF">0,85%</i><i class="CG">20,15</i><i class="CH">1,71%</i><i class="CI">15,51%</i><i class="CJ">18,93%</i><i class="CK">28,2%</i><i class="CL">163,6%</i><i class="CM" style="background:#fabf8f;">39,4%</i><i class="CN" style="background:#fabf8f;">39,7%</i><i class="CO" style="background:#fabf8f;">1</i><i class="CP">0,607</i><i class="CR">Больша</i><i class="CS">-0,11</i><i class="CT">20,9%</i><i class="CU">28596,4</i><i class="CV">23,3%</i><i class="CW">1,1E+11</i><i class="CX">9,9E+09</i><i class="CY">0,9120</i><i class="CZ">1</i><i class="DA">-5533,18</i><i class="DB">0,24964</i><i class="DC">1E+11</i><i class="DD">0,9221452</i><i class="DE">1</i><i class="DF">0,06</i><i class="DG">1,09</i></div><div class="r" style="top:226.5px;height:12.0px;line-height:13.5px;"><i class="A lk">VA</i><i class="B sc gt" style="padding-left:2.0px">24</i><i class="C tn" style="padding-left:2.0px">Химия и химические продукты</i><i class="BS">37,8%</i><i class="BT">29,7%</i><i class="BU">48,6%</i><i class="BV">24,19</i><i class="BW">36,8%</i><i class="BX" style="font-size:8.7px;">Эласт&gt;1</i><i class="BY">0,002</i><i class="BZ">0,002</i><i class="CA">0,04</i><i class="CB">0,04</i><i class="CC">33,8%</i><i class="CD">41,9%</i><i class="CE">64</i><i class="CF">0,51%</i><i class="CG">74,74</i><i class="CH">1,01%</i><i class="CI">36,79%</i><i class="CJ">38,82%</i><i class="CK">18,9%</i><i class="CL">50,1%</i><i class="CM">10,6%</i><i class="CN">10,7%</i><i class="CP">0,594</i><i class="CR">Меньша</i><i class="CS">-0,081</i><i class="CT">35,5%</i><i class="CU">73524,6</i><i class="CV">34,9%</i><i class="CW">3E+11</i><i class="CX">3,6E+09</i><i class="CY">0,9880</i><i class="DA">2579,8</i><i class="DB">0,34245</i><i class="DC">2,9E+11</i><i class="DD">0,9886424</i><i class="DF">0,72</i><i class="DG">0,94</i></div><div class="r" style="top:238.5px;height:12.0px;line-height:13.5px;"><i class="A lk">VA</i><i class="B sc gt" style="padding-left:2.0px">25</i><i class="C tn" style="padding-left:2.0px">Резина и пластмассы</i><i class="BS">44,9%</i><i class="BT">29,9%</i><i class="BU">74,4%</i><i class="BV">28,76</i><i class="BW">39,5%</i><i class="BX" style="font-size:8.7px;">Эласт&gt;1</i><i class="BY">0,013</i><i class="BZ">0,013</i><i class="CA">0,112</i><i class="CB">0,113</i><i class="CC">33,6%</i><i class="CD">56,3%</i><i class="CE">64</i><i class="CF">1,42%</i><i class="CG">31,74</i><i class="CH">2,83%</i><i class="CI">42,11%</i><i class="CJ">47,78%</i><i class="CK">44,5%</i><i class="CL">99,0%</i><i class="CM" style="background:#fabf8f;">25,0%</i><i class="CN" style="background:#fabf8f;">25,2%</i><i class="CO" style="background:#fabf8f;">1</i><i class="CP">1,063</i><i class="CR">Меньша</i><i class="CS">0,088</i><i class="CT">36,9%</i><i class="CU">26219,6</i><i class="CV">35,6%</i><i class="CW">3,6E+10</i><i class="CX">4,7E+08</i><i class="CY">0,9868</i><i class="DA">1884,14</i><i class="DB">0,3426</i><i class="DC">3,5E+10</i><i class="DD">0,9899117</i><i class="DF">2,07</i><i class="DG">0,85</i></div><div class="r" style="top:250.5px;height:12.0px;line-height:13.5px;"><i class="A lk">VA</i><i class="B sc gt" style="padding-left:2.0px">26</i><i class="C s" style="padding-left:2.0px">ПРОЧИЕ НЕМЕТАЛЛИЧЕСКИЕ</i><i class="BS">46,8%</i><i class="BT">33,6%</i><i class="BU">63,6%</i><i class="BV">29,92</i><i class="BW">45,2%</i><i class="BX" style="font-size:8.7px;">Эласт&gt;1</i><i class="BY">0,005</i><i class="BZ">0,005</i><i class="CA">0,072</i><i class="CB">0,072</i><i class="CC">39,5%</i><i class="CD">54,0%</i><i class="CE">64</i><i class="CF">0,90%</i><i class="CG">51,84</i><i class="CH">1,80%</i><i class="CI">44,95%</i><i class="CJ">48,56%</i><i class="CK">30,0%</i><i class="CL">64,2%</i><i class="CM" style="background:#fabf8f;">15,3%</i><i class="CN" style="background:#fabf8f;">15,4%</i><i class="CO" style="background:#fabf8f;">1</i><i class="CP">0,756</i><i class="CR">Меньша</i><i class="CS">0,033</i><i class="CT">42,5%</i><i class="CU">18886,3</i><i class="CV">41,2%</i><i class="CW">1,3E+10</i><i class="CX">3,3E+08</i><i class="CY">0,9745</i><i class="DA">1457,83</i><i class="DB">0,3922</i><i class="DC">1,3E+10</i><i class="DD">0,9786728</i><i class="DF">1,59</i><i class="DG">0,88</i></div><div class="bg" style="left:37.0px;top:262.5px;width:145.5px;height:12.0px;background:#ffff00"></div><div class="r" style="top:262.5px;height:12.0px;line-height:13.5px;"><i class="A lk">VA</i><i class="B sc" style="padding-left:2.0px">27t28</i><i class="C m" style="padding-left:2.0px">ОСНОВНЫЕ МЕТАЛЛЫ</i><i class="BS">38,4%</i><i class="BT">30,3%</i><i class="BU">44,7%</i><i class="BV">24,57</i><i class="BW">38,6%</i><i class="BX" style="font-size:8.7px;">Эласт&lt;1</i><i class="BY">6E-04</i><i class="BZ">6E-04</i><i class="CA">0,024</i><i class="CB">0,024</i><i class="CC">36,0%</i><i class="CD">40,8%</i><i class="CE">64</i><i class="CF">0,30%</i><i class="CG">128,7</i><i class="CH">0,60%</i><i class="CI">37,79%</i><i class="CJ">38,98%</i><i class="CK">14,4%</i><i class="CL">37,5%</i><i class="CM">6,2%</i><i class="CN">6,2%</i><i class="CP">-0,807</i><i class="CR">Больша</i><i class="CS">2,109</i><i class="CT">37,2%</i><i class="CU">81241,4</i><i class="CV">36,4%</i><i class="CW">2,1E+11</i><i class="CX">4,1E+09</i><i class="CY">0,9806</i><i class="DA">4839,41</i><i class="DB">0,34987</i><i class="DC">2,1E+11</i><i class="DD">0,9830936</i><i class="DF">0,63</i><i class="DG">0,96</i></div><div class="r" style="top:274.5px;height:12.0px;line-height:13.5px;"><i class="A lk">VA</i><i class="B sc gt" style="padding-left:2.0px">29</i><i class="C s" style="padding-left:2.0px">МАШИНЫ, NEC</i><i class="BS">47,9%</i><i class="BT">36,4%</i><i class="BU">59,6%</i><i class="BV">30,64</i><i class="BW">48,5%</i><i class="BX" style="font-size:8.7px;">Эласт&lt;1</i><i class="BY">0,004</i><i class="BZ">0,004</i><i class="CA">0,066</i><i class="CB">0,067</i><i class="CC">41,2%</i><i class="CD">54,5%</i><i class="CE">64</i><i class="CF">0,83%</i><i class="CG">57,56</i><i class="CH">1,66%</i><i class="CI">46,22%</i><i class="CJ">49,55%</i><i class="CK">23,2%</i><i class="CL">48,4%</i><i class="CM">13,8%</i><i class="CN">13,9%</i><i class="CP">-0,097</i><i class="CR">Больша</i><i class="CS">-0,964</i><i class="CT">42,9%</i><i class="CU">53480,1</i><i class="CV">40,9%</i><i class="CW">1E+11</i><i class="CX">2,8E+09</i><i class="CY">0,9719</i><i class="DA">6048,53</i><i class="DB">0,38025</i><i class="DC">9,8E+10</i><i class="DD">0,9813414</i><i class="DF">1,62</i><i class="DG">0,89</i></div><div class="r" style="top:286.5px;height:12.0px;line-height:13.5px;"><i class="A lk">VA</i><i class="B sc" style="padding-left:2.0px">30t33</i><i class="C s" style="padding-left:2.0px">ЭЛЕКТРИЧЕСКОЕ И ОПТИЧЕСКОЕ</i><i class="BS">45,1%</i><i class="BT">32,5%</i><i class="BU">63,0%</i><i class="BV">28,86</i><i class="BW">42,2%</i><i class="BX" style="font-size:8.7px;">Эласт&gt;1</i><i class="BY">0,007</i><i class="BZ">0,007</i><i class="CA">0,081</i><i class="CB">0,081</i><i class="CC">37,0%</i><i class="CD">53,2%</i><i class="CE">64</i><i class="CF">1,02%</i><i class="CG">44,29</i><i class="CH">2,04%</i><i class="CI">43,06%</i><i class="CJ">47,14%</i><i class="CK">30,5%</i><i class="CL">67,5%</i><i class="CM" style="background:#fabf8f;">17,9%</i><i class="CN" style="background:#fabf8f;">18,1%</i><i class="CO" style="background:#fabf8f;">1</i><i class="CP">1,035</i><i class="CR">Меньша</i><i class="CS">-0,037</i><i class="CT">42,0%</i><i class="CU">90667,6</i><i class="CV">41,6%</i><i class="CW">4,6E+11</i><i class="CX">2E+10</i><i class="CY">0,9341</i><i class="DA">3312,4</i><i class="DB">0,4012</i><i class="DC">4,4E+11</i><i class="DD">0,9541</i><i class="DF">0,8</i><i class="DG">0,95</i></div><div class="r" style="top:298.5px;height:12.0px;line-height:13.5px;"><i class="A lk">VA</i><i class="B sc" style="padding-left:2.0px">34t35</i><i class="C s" style="padding-left:2.0px">ТРАНСПОРТНОЕ ОБОРУДОВАНИЕ</i><i class="BS">31,1%</i><i class="BT">20,9%</i><i class="BU">39,5%</i><i class="BV">19,91</i><i class="BW">30,9%</i><i class="BX" style="font-size:8.7px;">Эласт&gt;1</i><i class="BY">0,001</i><i class="BZ">0,002</i><i class="CA">0,039</i><i class="CB">0,039</i><i class="CC">27,2%</i><i class="CD">35,0%</i><i class="CE">64</i><i class="CF">0,49%</i><i class="CG">64,11</i><i class="CH">0,97%</i><i class="CI">30,14%</i><i class="CJ">32,08%</i><i class="CK">18,6%</i><i class="CL">59,7%</i><i class="CM">12,4%</i><i class="CN">12,5%</i><i class="CP">-0,266</i><i class="CR">Меньша</i><i class="CS">0,214</i><i class="CT">30,1%</i><i class="CU">40112,3</i><i class="CV">30,4%</i><i class="CW">5,1E+10</i><i class="CX">1,6E+09</i><i class="CY">0,9691</i><i class="DA">812,3</i><i class="DB">0,301</i><i class="DC">5E+10</i><i class="DD">0,97</i><i class="DF">0,5</i><i class="DG">0,97</i></div><div class="r" style="top:310.5px;height:12.0px;line-height:13.5px;"><i class="A lk">VA</i><i class="B sc" style="padding-left:2.0px">36t37</i><i class="C s" style="padding-left:2.0px">ПРОИЗВОДСТВО NEC; УТИЛИЗАЦИЯ</i><i class="BS">40,7%</i><i class="BT">27,8%</i><i class="BU">57,8%</i><i class="BV">26,03</i><i class="BW">38,7%</i><i class="BX" style="font-size:8.7px;">Эласт&gt;1</i><i class="BY">0,005</i><i class="BZ">0,005</i><i class="CA">0,071</i><i class="CB">0,072</i><i class="CC">33,5%</i><i class="CD">47,9%</i><i class="CE">64</i><i class="CF">0,90%</i><i class="CG">45,31</i><i class="CH">1,80%</i><i class="CI">38,88%</i><i class="CJ">42,47%</i><i class="CK">30,0%</i><i class="CL">73,8%</i><i class="CM" style="background:#fabf8f;">17,5%</i><i class="CN" style="background:#fabf8f;">17,7%</i><i class="CO" style="background:#fabf8f;">1</i><i class="CP">0,282</i><i class="CR">Меньша</i><i class="CS">-0,552</i><i class="CT">38,2%</i><i class="CU">20331,2</i><i class="CV">37,9%</i><i class="CW">1,2E+10</i><i class="CX">1,8E+08</i><i class="CY">0,9846</i><i class="DA">512,3</i><i class="DB">0,37</i><i class="DC">1,2E+10</i><i class="DD">0,985</i><i class="DF">0,6</i><i class="DG">0,97</i></div><div class="bg" style="left:37.0px;top:322.5px;width:115.5px;height:12.0px;background:#d8e4bc"></div><div class="r" style="top:322.5px;height:12.0px;line-height:13.5px;"><i class="A lk">VA</i><i class="B B" style="padding-left:2.0px">E</i><i class="C B" style="padding-left:3.0px">ЭЛЕКТРИЧЕСТВО,</i><i class="BS">60,0%</i><i class="BT">41,3%</i><i class="BU">70,6%</i><i class="BV">38,37</i><i class="BW">60,0%</i><i class="BX" style="font-size:8.7px;">Эласт&lt;1</i><i class="BY">0,004</i><i class="BZ">0,004</i><i class="CA">0,064</i><i class="CB">0,064</i><i class="CC">53,5%</i><i class="CD">66,4%</i><i class="CE">64</i><i class="CF">0,81%</i><i class="CG">74,37</i><i class="CH">1,61%</i><i class="CI">58,35%</i><i class="CJ">61,57%</i><i class="CK">29,3%</i><i class="CL">48,9%</i><i class="CM">10,7%</i><i class="CN">10,8%</i><i class="CP">-0,638</i><i class="CR">Больша</i><i class="CS">-0,391</i><i class="CT">59,8%</i><i class="CU">120341</i><i class="CV">59,1%</i><i class="CW">9,1E+11</i><i class="CX">4,1E+10</i><i class="CY">0,9552</i><i class="DA">7123,4</i><i class="DB">0,561</i><i class="DC">8,9E+11</i><i class="DD">0,96</i><i class="DF">1,1</i><i class="DG">0,93</i></div><div class="bg" style="left:37.0px;top:334.5px;width:115.5px;height:12.0px;background:#d8e4bc"></div><div class="r" style="top:334.5px;height:12.0px;line-height:13.5px;"><i class="A lk">VA</i><i class="B B" style="padding-left:2.0px">F</i><i class="C B" style="padding-left:3.0px">СТРОИТЕЛЬСТВО</i><i class="BS">43,7%</i><i class="BT">35,5%</i><i class="BU">51,6%</i><i class="BV">27,96</i><i class="BW">43,5%</i><i class="BX" style="font-size:8.7px;">Эласт&gt;1</i><i class="BY">0,001</i><i class="BZ">0,001</i><i class="CA">0,038</i><i class="CB">0,038</i><i class="CC">39,9%</i><i class="CD">47,5%</i><i class="CE">64</i><i class="CF">0,48%</i><i class="CG">91,39</i><i class="CH">0,96%</i><i class="CI">42,73%</i><i class="CJ">44,65%</i><i class="CK">16,1%</i><i class="CL">36,8%</i><i class="CM">8,7%</i><i class="CN">8,8%</i><i class="CP">0,265</i><i class="CR">Меньша</i><i class="CS">-0,878</i><i class="CT">43,1%</i><i class="CU">231452</i><i class="CV">43,0%</i><i class="CW">2,7E+12</i><i class="CX">1,5E+10</i><i class="CY">0,9945</i><i class="DA">2201,3</i><i class="DB">0,42</i><i class="DC">2,7E+12</i><i class="DD">0,995</i><i class="DF">0,5</i><i class="DG">0,99</i></div><div class="bg" style="left:37.0px;top:346.5px;width:115.5px;height:12.0px;background:#fde9d9"></div><div class="r" style="top:346.5px;height:12.0px;line-height:13.5px;"><i class="A lk">VA</i><i class="B B" style="padding-left:2.0px">G</i><i class="C B" style="padding-left:3.0px">ОПТОВАЯ И РОЗНИЧНАЯ</i><i class="BS">65,5%</i><i class="BT">59,1%</i><i class="BU">76,5%</i><i class="BV">41,92</i><i class="BW">64,8%</i><i class="BX" style="font-size:8.7px;">Эласт&gt;1</i><i class="BY">0,001</i><i class="BZ">0,001</i><i class="CA">0,033</i><i class="CB">0,033</i><i class="CC">62,2%</i><i class="CD">68,9%</i><i class="CE">64</i><i class="CF">0,42%</i><i class="CG">156,6</i><i class="CH">0,84%</i><i class="CI">64,67%</i><i class="CJ">66,34%</i><i class="CK">17,5%</i><i class="CL">26,6%</i><i class="CM">5,1%</i><i class="CN">5,1%</i><i class="CP">0,718</i><i class="CR">Меньша</i><i class="CS">0,327</i><i class="CT">64,9%</i><i class="CU">530122</i><i class="CV">64,0%</i><i class="CW">2,3E+13</i><i class="CX">5,6E+10</i><i class="CY">0,9976</i><i class="DA">6612,1</i><i class="DB">0,63</i><i class="DC">2,3E+13</i><i class="DD">0,998</i><i class="DF">0,8</i><i class="DG">0,98</i></div><div class="r" style="top:358.5px;height:12.0px;line-height:13.5px;"><i class="A lk">VA</i><i class="B sc gt" style="padding-left:2.0px">50</i><i class="C tn" style="padding-left:2.0px">Продажа, обслуживание и ремонт</i><i class="BS">52,1%</i><i class="BT">35,9%</i><i class="BU">67,8%</i><i class="BV">33,34</i><i class="BW">54,1%</i><i class="BX" style="font-size:8.7px;">Эласт&lt;1</i><i class="BY">0,011</i><i class="BZ">0,011</i><i class="CA">0,105</i><i class="CB">0,106</i><i class="CC">41,5%</i><i class="CD">62,7%</i><i class="CE">64</i><i class="CF">1,32%</i><i class="CG">39,43</i><i class="CH">2,64%</i><i class="CI">49,44%</i><i class="CJ">54,73%</i><i class="CK">31,9%</i><i class="CL">61,3%</i><i class="CM" style="background:#fabf8f;">20,1%</i><i class="CN" style="background:#fabf8f;">20,3%</i><i class="CO" style="background:#fabf8f;">1</i><i class="CP">-0,183</i><i class="CR">Больша</i><i class="CS">-1,236</i><i class="CT">53,5%</i><i class="CU">40213,5</i><i class="CV">52,9%</i><i class="CW">9,2E+10</i><i class="CX">7E+09</i><i class="CY">0,9924</i><i class="DA">1234,5</i><i class="DB">0,51</i><i class="DC">9,1E+10</i><i class="DD">0,993</i><i class="DF">0,7</i><i class="DG">0,97</i></div><div class="r" style="top:370.5px;height:12.0px;line-height:13.5px;"><i class="A lk">VA</i><i class="B sc gt" style="padding-left:2.0px">51</i><i class="C tn" style="padding-left:2.0px">Торговля оптовая и комиссионная</i><i class="BS">69,4%</i><i class="BT">59,3%</i><i class="BU">84,6%</i><i class="BV">44,43</i><i class="BW">68,3%</i><i class="BX" style="font-size:8.7px;">Эласт&gt;1</i><i class="BY">0,003</i><i class="BZ">0,003</i><i class="CA">0,057</i><i class="CB">0,058</i><i class="CC">63,7%</i><i class="CD">75,2%</i><i class="CE">64</i><i class="CF">0,72%</i><i class="CG">96,45</i><i class="CH">1,44%</i><i class="CI">67,98%</i><i class="CJ">70,86%</i><i class="CK">25,4%</i><i class="CL">36,6%</i><i class="CM">8,2%</i><i class="CN">8,3%</i><i class="CP">0,452</i><i class="CR">Меньша</i><i class="CS">-0,412</i><i class="CT">68,7%</i><i class="CU">250311</i><i class="CV">67,8%</i><i class="CW">5,4E+12</i><i class="CX">2,3E+10</i><i class="CY">0,9958</i><i class="DA">4123,3</i><i class="DB">0,66</i><i class="DC">5,3E+12</i><i class="DD">0,996</i><i class="DF">0,9</i><i class="DG">0,98</i></div><div class="r" style="top:382.5px;height:12.0px;line-height:13.5px;"><i class="A lk">VA</i><i class="B sc gt" style="padding-left:2.0px">52</i><i class="C tn" style="padding-left:2.0px">Розничная торговля, кроме авто</i><i class="BS">66,4%</i><i class="BT">60,6%</i><i class="BU">77,0%</i><i class="BV">42,49</i><i class="BW">65,4%</i><i class="BX" style="font-size:8.7px;">Эласт&gt;1</i><i class="BY">0,002</i><i class="BZ">0,002</i><i class="CA">0,039</i><i class="CB">0,04</i><i class="CC">62,4%</i><i class="CD">70,3%</i><i class="CE">64</i><i class="CF">0,49%</i><i class="CG">134,2</i><i class="CH">0,99%</i><i class="CI">65,40%</i><i class="CJ">67,37%</i><i class="CK">16,4%</i><i class="CL">24,8%</i><i class="CM">5,9%</i><i class="CN">6,0%</i><i class="CP">0,768</i><i class="CR">Меньша</i><i class="CS">0,155</i><i class="CT">65,9%</i><i class="CU">241562</i><i class="CV">65,1%</i><i class="CW">4,8E+12</i><i class="CX">1,2E+10</i><i class="CY">0,9975</i><i class="DA">3011,2</i><i class="DB">0,64</i><i class="DC">4,8E+12</i><i class="DD">0,998</i><i class="DF">0,8</i><i class="DG">0,99</i></div><div class="bg" style="left:37.0px;top:394.5px;width:115.5px;height:12.0px;background:#b7dee8"></div><div class="r" style="top:394.5px;height:12.0px;line-height:13.5px;"><i class="A lk">VA</i><i class="B B" style="padding-left:2.0px">H</i><i class="C B" style="padding-left:3.0px">ОТЕЛИ И РЕСТОРАНЫ</i><i class="BS">48,2%</i><i class="BT">43,2%</i><i class="BU">54,4%</i><i class="BV">30,84</i><i class="BW">47,8%</i><i class="BX" style="font-size:8.7px;">Эласт&gt;1</i><i class="BY">6E-04</i><i class="BZ">6E-04</i><i class="CA">0,024</i><i class="CB">0,025</i><i class="CC">45,7%</i><i class="CD">50,6%</i><i class="CE">64</i><i class="CF">0,31%</i><i class="CG">156,6</i><i class="CH">0,62%</i><i class="CI">47,57%</i><i class="CJ">48,80%</i><i class="CK">11,2%</i><i class="CL">23,3%</i><i class="CM">5,1%</i><i class="CN">5,1%</i><i class="CP">0,739</i><i class="CR">Меньша</i><i class="CS">0,902</i><i class="CT">47,9%</i><i class="CU">80123,4</i><i class="CV">47,6%</i><i class="CW">5,2E+11</i><i class="CX">1,9E+09</i><i class="CY">0,9964</i><i class="DA">1203,4</i><i class="DB">0,47</i><i class="DC">5,2E+11</i><i class="DD">0,997</i><i class="DF">0,6</i><i class="DG">0,98</i></div><div class="bg" style="left:37.0px;top:406.5px;width:115.5px;height:12.0px;background:#d8e4bc"></div><div class="r" style="top:406.5px;height:12.0px;line-height:13.5px;"><i class="A lk">VA</i><i class="B B" style="padding-left:2.0px">I</i><i class="C B" style="padding-left:3.0px">ТРАНСПОРТИРОВКА</i><i class="BS">57,5%</i><i class="BT">51,2%</i><i class="BU">64,8%</i><i class="BV">36,78</i><i class="BW">57,2%</i><i class="BX" style="font-size:8.7px;">Эласт&gt;1</i><i class="BY">0,001</i><i class="BZ">0,001</i><i class="CA">0,038</i><i class="CB">0,039</i><i class="CC">53,6%</i><i class="CD">61,3%</i><i class="CE">64</i><i class="CF">0,48%</i><i class="CG">119,1</i><i class="CH">0,97%</i><i class="CI">56,51%</i><i class="CJ">58,44%</i><i class="CK">13,6%</i><i class="CL">23,6%</i><i class="CM">6,7%</i><i class="CN">6,7%</i><i class="CP">0,203</i><i class="CR">Меньша</i><i class="CS">-0,633</i><i class="CT">57,1%</i><i class="CU">190234</i><i class="CV">56,8%</i><i class="CW">2,6E+12</i><i class="CX">6,8E+09</i><i class="CY">0,9974</i><i class="DA">2312,5</i><i class="DB">0,56</i><i class="DC">2,6E+12</i><i class="DD">0,998</i><i class="DF">0,7</i><i class="DG">0,99</i></div><div class="r" style="top:418.5px;height:12.0px;line-height:13.5px;"><i class="A lk">VA</i><i class="B sc" style="padding-left:2.0px">60t63</i><i class="C s" style="padding-left:2.0px">ТРАНСПОРТИРОВКА И ХРАНЕНИЕ</i><i class="BS">54,3%</i><i class="BT">47,9%</i><i class="BU">63,7%</i><i class="BV">34,77</i><i class="BW">52,7%</i><i class="BX" style="font-size:8.7px;">Эласт&gt;1</i><i class="BY">0,002</i><i class="BZ">0,002</i><i class="CA">0,044</i><i class="CB">0,045</i><i class="CC">49,9%</i><i class="CD">58,8%</i><i class="CE">64</i><i class="CF">0,56%</i><i class="CG">97,31</i><i class="CH">1,12%</i><i class="CI">53,21%</i><i class="CJ">55,45%</i><i class="CK">15,8%</i><i class="CL">29,0%</i><i class="CM">8,2%</i><i class="CN">8,2%</i><i class="CP">0,626</i><i class="CR">Меньша</i><i class="CS">-0,288</i><i class="CT">53,6%</i><i class="CU">130122</i><i class="CV">53,1%</i><i class="CW">1,1E+12</i><i class="CX">2,1E+09</i><i class="CY">0,9981</i><i class="DA">1800,2</i><i class="DB">0,52</i><i class="DC">1,1E+12</i><i class="DD">0,998</i><i class="DF">0,7</i><i class="DG">0,98</i></div><div class="r" style="top:430.5px;height:12.0px;line-height:13.5px;"><i class="A lk">VA</i><i class="B sc gt" style="padding-left:2.0px">64</i><i class="C s" style="padding-left:2.0px">ПОЧТА И ТЕЛЕКОММУНИКАЦИИ</i><i class="BS">62,8%</i><i class="BT">51,7%</i><i class="BU">77,9%</i><i class="BV">40,17</i><i class="BW">63,4%</i><i class="BX" style="font-size:8.7px;">Эласт&lt;1</i><i class="BY">0,003</i><i class="BZ">0,003</i><i class="CA">0,059</i><i class="CB">0,059</i><i class="CC">56,9%</i><i class="CD">68,7%</i><i class="CE">64</i><i class="CF">0,74%</i><i class="CG">84,93</i><i class="CH">1,48%</i><i class="CI">61,29%</i><i class="CJ">64,24%</i><i class="CK">26,3%</i><i class="CL">41,9%</i><i class="CM">9,3%</i><i class="CN">9,4%</i><i class="CP">-0,155</i><i class="CR">Больша</i><i class="CS">-0,947</i><i class="CT">63,0%</i><i class="CU">60211,7</i><i class="CV">62,2%</i><i class="CW">4,1E+11</i><i class="CX">5E+09</i><i class="CY">0,9878</i><i class="DA">3901,2</i><i class="DB">0,6</i><i class="DC">4E+11</i><i class="DD">0,989</i><i class="DF">1,2</i><i class="DG">0,95</i></div><div class="bg" style="left:37.0px;top:442.5px;width:115.5px;height:12.0px;background:#fde9d9"></div><div class="r" style="top:442.5px;height:12.0px;line-height:13.5px;"><i class="A lk">VA</i><i class="B B" style="padding-left:2.0px">JtK</i><i class="C B" style="padding-left:3.0px">FIRE+Ипотека</i><i class="BS">67,8%</i><i class="BT">60,8%</i><i class="BU">72,3%</i><i class="BV">43,36</i><i class="BW">68,8%</i><i class="BX" style="font-size:8.7px;">Эласт&lt;1</i><i class="BY">9E-04</i><i class="BZ">9E-04</i><i class="CA">0,03</i><i class="CB">0,03</i><i class="CC">64,8%</i><i class="CD">70,8%</i><i class="CE">64</i><i class="CF">0,38%</i><i class="CG">180,2</i><i class="CH">0,75%</i><i class="CI">67,01%</i><i class="CJ">68,51%</i><i class="CK">11,5%</i><i class="CL">16,9%</i><i class="CM">4,4%</i><i class="CN">4,4%</i><i class="CP">-0,867</i><i class="CR">Больша</i><i class="CS">0,511</i><i class="CT">67,9%</i><i class="CU">1012234</i><i class="CV">67,3%</i><i class="CW">9,1E+13</i><i class="CX">1,5E+11</i><i class="CY">0,9983</i><i class="DA">9012,3</i><i class="DB">0,67</i><i class="DC">9,1E+13</i><i class="DD">0,998</i><i class="DF">0,8</i><i class="DG">0,99</i></div><div class="r" style="top:454.5px;height:12.0px;line-height:13.5px;"><i class="A lk">VA</i><i class="B B" style="padding-left:2.0px">J</i><i class="C B" style="padding-left:3.0px">ФИНАНСОВОЕ ПОСРЕДНИЧЕСТВО</i><i class="BS">53,7%</i><i class="BT">45,9%</i><i class="BU">62,6%</i><i class="BV">34,4</i><i class="BW">53,7%</i><i class="BX" style="font-size:8.7px;">Эласт&gt;1</i><i class="BY">9E-04</i><i class="BZ">9E-04</i><i class="CA">0,03</i><i class="CB">0,03</i><i class="CC">50,7%</i><i class="CD">56,8%</i><i class="CE">64</i><i class="CF">0,38%</i><i class="CG">142,5</i><i class="CH">0,75%</i><i class="CI">52,99%</i><i class="CJ">54,50%</i><i class="CK">16,7%</i><i class="CL">31,0%</i><i class="CM">5,6%</i><i class="CN">5,6%</i><i class="CP">0,065</i><i class="CR">Меньша</i><i class="CS">-0,702</i><i class="CT">53,5%</i><i class="CU">301234</i><i class="CV">53,3%</i><i class="CW">8,2E+12</i><i class="CX">6,4E+10</i><i class="CY">0,9922</i><i class="DA">5123,4</i><i class="DB">0,52</i><i class="DC">8,1E+12</i><i class="DD">0,993</i><i class="DF">0,9</i><i class="DG">0,97</i></div><div class="r" style="top:466.5px;height:12.0px;line-height:13.5px;"><i class="A lk">VA</i><i class="B sc" style="padding-left:2.0px">K</i><i class="C s" style="padding-left:2.0px">НЕДВИЖИМОСТЬ, АРЕНДА</i><i class="BS">72,7%</i><i class="BT">65,6%</i><i class="BU">78,2%</i><i class="BV">46,54</i><i class="BW">73,9%</i><i class="BX" style="font-size:8.7px;">Эласт&lt;1</i><i class="BY">0,001</i><i class="BZ">0,001</i><i class="CA">0,035</i><i class="CB">0,035</i><i class="CC">69,2%</i><i class="CD">76,3%</i><i class="CE">64</i><i class="CF">0,44%</i><i class="CG">164,5</i><i class="CH">0,88%</i><i class="CI">71,83%</i><i class="CJ">73,60%</i><i class="CK">12,6%</i><i class="CL">17,3%</i><i class="CM">4,8%</i><i class="CN">4,9%</i><i class="CP">-0,588</i><i class="CR">Больша</i><i class="CS">-0,314</i><i class="CT">73,0%</i><i class="CU">710234</i><i class="CV">72,1%</i><i class="CW">4,2E+13</i><i class="CX">5,5E+10</i><i class="CY">0,9987</i><i class="DA">8123,4</i><i class="DB">0,71</i><i class="DC">4,2E+13</i><i class="DD">0,999</i><i class="DF">0,9</i><i class="DG">0,99</i></div><div class="bg" style="left:37.0px;top:478.5px;width:115.5px;height:12.0px;background:#fde9d9"></div><div class="r" style="top:478.5px;height:12.0px;line-height:13.5px;"><i class="A lk">VA</i><i class="B B gt" style="padding-left:2.0px">70</i><i class="C B" style="padding-left:3.0px">Операции с недвижимым</i><i class="BS">77,0%</i><i class="BT">66,5%</i><i class="BU">85,9%</i><i class="BV">49,28</i><i class="BW">77,4%</i><i class="BX" style="font-size:8.7px;">Эласт&lt;1</i><i class="BY">0,002</i><i class="BZ">0,002</i><i class="CA">0,047</i><i class="CB">0,047</i><i class="CC">72,3%</i><i class="CD">81,7%</i><i class="CE">64</i><i class="CF">0,59%</i><i class="CG">130,7</i><i class="CH">1,18%</i><i class="CI">75,81%</i><i class="CJ">78,17%</i><i class="CK">19,4%</i><i class="CL">25,2%</i><i class="CM">6,1%</i><i class="CN">6,1%</i><i class="CP">-0,331</i><i class="CR">Больша</i><i class="CS">-0,721</i><i class="CT">72,7%</i><i class="CU">480243</i><i class="CV">70,9%</i><i class="CW">1,7E+13</i><i class="CX">5,9E+10</i><i class="CY">0,9965</i><i class="DA">14520,3</i><i class="DB">0,6801</i><i class="DC">1,7E+13</i><i class="DD">0,9971203</i><i class="DF">1,12</i><i class="DG">0,97</i></div><div class="r" style="top:490.5px;height:12.0px;line-height:13.5px;"><i class="A lk">VA</i><i class="B sc" style="padding-left:2.0px">71t74</i><i class="C tn" style="padding-left:2.0px">Аренда m &amp; eq и другие виды</i><i class="BS">66,5%</i><i class="BT">61,7%</i><i class="BU">71,1%</i><i class="BV">42,56</i><i class="BW">66,3%</i><i class="BX" style="font-size:8.7px;">Эласт&gt;1</i><i class="BY">3E-04</i><i class="BZ">4E-04</i><i class="CA">0,019</i><i class="CB">0,019</i><i class="CC">64,6%</i><i class="CD">68,4%</i><i class="CE">64</i><i class="CF">0,23%</i><i class="CG">283,3</i><i class="CH">0,47%</i><i class="CI">66,04%</i><i class="CJ">66,98%</i><i class="CK">9,4%</i><i class="CL">14,1%</i><i class="CM">2,8%</i><i class="CN">2,8%</i><i class="CP">0,419</i><i class="CR">Меньша</i><i class="CS">0,167</i><i class="CT">65,7%</i><i class="CU">492334</i><i class="CV">65,2%</i><i class="CW">2,5E+13</i><i class="CX">1,8E+10</i><i class="CY">0,9993</i><i class="DA">3021,7</i><i class="DB">0,6498</i><i class="DC">2,5E+13</i><i class="DD">0,9993412</i><i class="DF">0,69</i><i class="DG">1,00</i></div><div class="r" style="top:502.5px;height:12.0px;line-height:13.5px;"><i class="A lk">VA</i><i class="B sc" style="padding-left:2.0px">LtQ</i><i class="C s" style="padding-left:2.0px">СОЦИАЛЬНЫЕ И ПЕРСОНАЛЬНЫЕ</i><i class="BS">63,4%</i><i class="BT">60,1%</i><i class="BU">70,6%</i><i class="BV">40,55</i><i class="BW">63,3%</i><i class="BX" style="font-size:8.7px;">Эласт&gt;1</i><i class="BY">3E-04</i><i class="BZ">3E-04</i><i class="CA">0,018</i><i class="CB">0,018</i><i class="CC">61,6%</i><i class="CD">65,2%</i><i class="CE">64</i><i class="CF">0,22%</i><i class="CG">281,7</i><i class="CH">0,45%</i><i class="CI">62,90%</i><i class="CJ">63,80%</i><i class="CK">10,5%</i><i class="CL">16,5%</i><i class="CM">2,8%</i><i class="CN">2,8%</i><i class="CP">0,986</i><i class="CR">Меньша</i><i class="CS">3,055</i><i class="CT">62,2%</i><i class="CU">1012343</i><i class="CV">61,6%</i><i class="CW">7,5E+13</i><i class="CX">4,5E+10</i><i class="CY">0,9994</i><i class="DA">17434,3</i><i class="DB">0,6109</i><i class="DC">7,5E+13</i><i class="DD">0,9995447</i><i class="DF">0,73</i><i class="DG">0,99</i></div><div class="r" style="top:514.5px;height:12.0px;line-height:13.5px;"><i class="A lk">VA</i><i class="B sc" style="padding-left:2.0px">L</i><i class="C s" style="padding-left:2.0px">ОБЩЕСТВЕННОЕ УПРАВЛЕНИЕ</i><i class="BS">60,3%</i><i class="BT">51,3%</i><i class="BU">90,2%</i><i class="BV">38,57</i><i class="BW">59,4%</i><i class="BX" style="font-size:8.7px;">Эласт&gt;1</i><i class="BY">0,004</i><i class="BZ">0,005</i><i class="CA">0,067</i><i class="CB">0,067</i><i class="CC">53,5%</i><i class="CD">67,0%</i><i class="CE">64</i><i class="CF">0,84%</i><i class="CG">71,44</i><i class="CH">1,69%</i><i class="CI">58,58%</i><i class="CJ">61,96%</i><i class="CK">38,9%</i><i class="CL">64,6%</i><i class="CM">11,1%</i><i class="CN">11,2%</i><i class="CP">2,194</i><i class="CR">Меньша</i><i class="CS">6,933</i><i class="CT">56,3%</i><i class="CU">179392</i><i class="CV">54,8%</i><i class="CW">1,6E+12</i><i class="CX">1,2E+10</i><i class="CY">0,9925</i><i class="DA">10673,6</i><i class="DB">0,52978</i><i class="DC">1,6E+12</i><i class="DD">0,9946306</i><i class="DF">1,39</i><i class="DG">0,93</i></div><div class="r" style="top:526.5px;height:12.0px;line-height:13.5px;"><i class="A lk">VA</i><i class="B sc" style="padding-left:2.0px">M</i><i class="C s" style="padding-left:2.0px">ОБРАЗОВАНИЕ</i><i class="BS">70,1%</i><i class="BT">63,9%</i><i class="BU">81,9%</i><i class="BV">44,85</i><i class="BW">68,7%</i><i class="BX" style="font-size:8.7px;">Эласт&gt;1</i><i class="BY">0,002</i><i class="BZ">0,002</i><i class="CA">0,042</i><i class="CB">0,042</i><i class="CC">65,8%</i><i class="CD">74,3%</i><i class="CE">64</i><i class="CF">0,53%</i><i class="CG">132,3</i><i class="CH">1,06%</i><i class="CI">69,01%</i><i class="CJ">71,13%</i><i class="CK">18,0%</i><i class="CL">25,7%</i><i class="CM">6,0%</i><i class="CN">6,0%</i><i class="CP">0,959</i><i class="CR">Меньша</i><i class="CS">0,455</i><i class="CT">66,6%</i><i class="CU">215665</i><i class="CV">65,9%</i><i class="CW">3,7E+12</i><i class="CX">1,8E+09</i><i class="CY">0,9995</i><i class="DA">3775,48</i><i class="DB">0,6543</i><i class="DC">3,7E+12</i><i class="DD">0,9996544</i><i class="DF">1,00</i><i class="DG">0,97</i></div><div class="r" style="top:538.5px;height:12.0px;line-height:13.5px;"><i class="A lk">VA</i><i class="B sc" style="padding-left:2.0px">N</i><i class="C s" style="padding-left:2.0px">ЗДОРОВЬЕ И СОЦИАЛЬНАЯ</i><i class="BS">66,4%</i><i class="BT">62,0%</i><i class="BU">71,7%</i><i class="BV">42,49</i><i class="BW">66,2%</i><i class="BX" style="font-size:8.7px;">Эласт&gt;1</i><i class="BY">8E-04</i><i class="BZ">8E-04</i><i class="CA">0,029</i><i class="CB">0,029</i><i class="CC">63,5%</i><i class="CD">69,3%</i><i class="CE">64</i><i class="CF">0,36%</i><i class="CG">183,8</i><i class="CH">0,72%</i><i class="CI">65,67%</i><i class="CJ">67,11%</i><i class="CK">9,7%</i><i class="CL">14,6%</i><i class="CM">4,3%</i><i class="CN">4,4%</i><i class="CP">0,089</i><i class="CR">Меньша</i><i class="CS">-1,146</i><i class="CT">63,9%</i><i class="CU">445085</i><i class="CV">63,1%</i><i class="CW">1,6E+13</i><i class="CX">1,3E+10</i><i class="CY">0,9992</i><i class="DA">10642,5</i><i class="DB">0,624</i><i class="DC">1,6E+13</i><i class="DD">0,9994555</i><i class="DF">0,79</i><i class="DG">0,99</i></div><div class="r" style="top:550.5px;height:12.0px;line-height:13.5px;"><i class="A lk">VA</i><i class="B sc" style="padding-left:2.0px">O</i><i class="C s" style="padding-left:2.0px">ДРУГИЕ СООБЩЕСТВЕННЫЕ</i><i class="BS">54,8%</i><i class="BT">47,3%</i><i class="BU">61,5%</i><i class="BV">35,06</i><i class="BW">55,5%</i><i class="BX" style="font-size:8.7px;">Эласт&lt;1</i><i class="BY">0,002</i><i class="BZ">0,002</i><i class="CA">0,046</i><i class="CB">0,046</i><i class="CC">50,1%</i><i class="CD">59,4%</i><i class="CE">64</i><i class="CF">0,58%</i><i class="CG">94,42</i><i class="CH">1,16%</i><i class="CI">53,62%</i><i class="CJ">55,94%</i><i class="CK">14,2%</i><i class="CL">25,9%</i><i class="CM">8,4%</i><i class="CN">8,5%</i><i class="CP">-0,038</i><i class="CR">Больша</i><i class="CS">-1,762</i><i class="CT">58,4%</i><i class="CU">165474</i><i class="CV">58,9%</i><i class="CW">2E+12</i><i class="CX">2,1E+09</i><i class="CY">0,9989</i><i class="DA">-2847,21</i><i class="DB">0,59408</i><i class="DC">2E+12</i><i class="DD">0,9990736</i><i class="DF">0,27</i><i class="DG">1,06</i></div><div class="r" style="top:562.5px;height:12.0px;line-height:13.5px;"><i class="A lk">VA</i><i class="B sc" style="padding-left:2.0px">P</i><i class="C s" style="padding-left:2.0px">ЧАСТНЫЕ ДОМОХОЗЯЙСТВА</i><i class="BS">100,0%</i><i class="BT">100,0%</i><i class="BU">100,0%</i><i class="BV">64</i><i class="BW">100,0%</i><i class="BX" style="font-size:8.7px;">Эласт&lt;1</i><i class="BY">0</i><i class="BZ">0</i><i class="CA">0</i><i class="CB">0</i><i class="CC">100,0%</i><i class="CD">100,0%</i><i class="CE">64</i><i class="CF">0,00%</i><i class="CH">0,00%</i><i class="CI">100,00%</i><i class="CJ">100,00%</i><i class="CK">0,0%</i><i class="CL">0,0%</i><i class="CM">0,0%</i><i class="CN">0,0%</i><i class="CR">Меньша</i><i class="CT">100,0%</i><i class="CU">6727,45</i><i class="CV">100,0%</i><i class="CW">1,6E+09</i><i class="CX">0</i><i class="CY">1,0000</i><i class="DA">0</i><i class="DB">1</i><i class="DC">1,6E+09</i><i class="DD">1</i><i class="DF">1,00</i><i class="DG">1,00</i></div><div class="r" style="top:574.5px;height:12.0px;line-height:13.5px;"><i class="A lk">VA</i><i class="B sc" style="padding-left:2.0px">Q</i><i class="C s" style="padding-left:2.0px">ВНЕТЕРРИТОРИАЛЬНЫЕ</i><i class="BX" style="font-size:8.7px;">Эласт&lt;1</i><i class="CE">0</i><i class="CM" style="background:#fabf8f"></i><i class="CN" style="background:#fabf8f"></i><i class="CO" style="background:#fabf8f;">1</i><i class="CR">Меньша</i><i class="CU">0</i><i class="CV">0,0%</i><i class="CW">0</i><i class="CX">0</i><i class="DB">0</i><i class="DC">0</i></div><div class="bg" style="left:37.0px;top:636.0px;width:115.5px;height:13.0px;background:#ffff00"></div><div class="r" style="top:636.0px;height:13.0px;line-height:14.5px;"><i class="A lk" style="font-size:8.1px;line-height:12.5px">LAB</i><i class="B B" style="padding-left:2.0px">TOT</i><i class="C B" style="padding-left:3.0px">ВСЕГО ОТРАСЛЕЙ</i><i class="BS">32,3%</i><i class="BT">27,8%</i><i class="BU">34,9%</i><i class="BV">20,69</i><i class="BW">32,2%</i><i class="BX" style="font-size:8.7px;">Эласт&gt;1</i><i class="BY">3E-04</i><i class="BZ">3E-04</i><i class="CA">0,016</i><i class="CB">0,016</i><i class="CC">30,7%</i><i class="CD">33,9%</i><i class="CE">64</i><i class="CF">0,20%</i><i class="CG">162,3</i><i class="CH">0,40%</i><i class="CI">31,93%</i><i class="CJ">32,73%</i><i class="CK">7,1%</i><i class="CL">21,9%</i><i class="CM">4,9%</i><i class="CN">4,9%</i><i class="CP">-0,456</i><i class="CR">Меньша</i><i class="CS">-0,183</i><i class="CT">33,2%</i><i class="CU">2587202</i><i class="CV">33,3%</i><i class="CW">4,4E+14</i><i class="CX">5,6E+11</i><i class="CY">0,9987278</i><i class="DA">-13207,6</i><i class="DB">0,33395</i><i class="DC">4,4E+14</i><i class="DD">0,9987406</i><i class="DF">0,21</i><i class="DG">1,03</i></div><div class="bg" style="left:37.0px;top:649.0px;width:115.5px;height:13.0px;background:#d8e4bc"></div><div class="r" style="top:649.0px;height:13.0px;line-height:14.5px;"><i class="A lk" style="font-size:8.1px;line-height:12.5px">LAB</i><i class="B B" style="padding-left:2.0px">AtB</i><i class="C B" style="padding-left:3.0px">СЕЛЬСКОЕ ХОЗЯЙ</i><i class="BS">27,3%</i><i class="BT">16,6%</i><i class="BU">41,5%</i><i class="BV">17,5</i><i class="BW">25,1%</i><i class="BX" style="font-size:8.7px;">Эласт&gt;1</i><i class="BY">0,004</i><i class="BZ">0,004</i><i class="CA">0,059</i><i class="CB">0,06</i><i class="CC">21,4%</i><i class="CD">33,3%</i><i class="CE">64</i><i class="CF">0,75%</i><i class="CG">36,52</i><i class="CH">1,50%</i><i class="CI">25,85%</i><i class="CJ">28,84%</i><i class="CK">25,0%</i><i class="CL">91,3%</i><i class="CM" style="background:#fabf8f;">21,7%</i><i class="CN" style="background:#fabf8f;">21,9%</i><i class="CO" style="background:#fabf8f;">1</i><i class="CP">0,425</i><i class="CR">Меньша</i><i class="CS">-0,646</i><i class="CT">24,6%</i><i class="CU">38134,8</i><i class="CV">24,0%</i><i class="CW">3,8E+10</i><i class="CX">1,5E+09</i><i class="CY" style="background:#92d050;font-size:12px;">0,9598</i><i class="DA">2898,72</i><i class="DB">0,22768</i><i class="DC">3,7E+10</i><i class="DD" style="background:#92d050;">0,9642659</i><i class="DF">3,06</i><i class="DG">0,79</i></div><div class="bg" style="left:37.0px;top:662.0px;width:115.5px;height:16.0px;background:#d8e4bc"></div><div class="r" style="top:662.0px;height:16.0px;line-height:17.5px;"><i class="A lk" style="font-size:8.1px;line-height:15.5px">LAB</i><i class="B B" style="padding-left:2.0px">C</i><i class="C B" style="padding-left:3.0px">ДОБЫЧА ПОЛЕЗНЫ</i><i class="BS">21,1%</i><i class="BT">13,3%</i><i class="BU">28,4%</i><i class="BV">13,53</i><i class="BW">22,0%</i><i class="BX" style="font-size:8.7px;">Эласт&lt;1</i><i class="BY">0,001</i><i class="BZ">0,001</i><i class="CA">0,032</i><i class="CB">0,032</i><i class="CC">17,9%</i><i class="CD">24,3%</i><i class="CE">64</i><i class="CF">0,40%</i><i class="CG">52,93</i><i class="CH">0,80%</i><i class="CI">20,35%</i><i class="CJ">21,94%</i><i class="CK">15,1%</i><i class="CL">71,4%</i><i class="CM">15,0%</i><i class="CN" style="background:#fabf8f;">15,1%</i><i class="CP">-0,632</i><i class="CR">Больша</i><i class="CS">0,222</i><i class="CT">18,6%</i><i class="CU">23261,5</i><i class="CV">16,8%</i><i class="CW">2,3E+10</i><i class="CX">1,9E+09</i><i class="CY" style="background:#92d050;font-size:12px;">0,91529</i><i class="CZ">1</i><i class="DA">4440,63</i><i class="DB">0,15016</i><i class="DC">2,2E+10</i><i class="DD" style="background:#92d050;font-size:12px;">0,942194</i><i class="DE">1</i><i class="DF" style="background:#fcd5b4;font-size:12px;">0,73</i><i class="DG" style="background:#fcd5b4;font-size:12px;">0,89</i></div><div class="bg" style="left:11.5px;top:678.0px;width:1883.5px;height:17.0px;background:#fcd5b4"></div><div class="r" style="top:678.0px;height:17.0px;line-height:18.5px;"><i class="A lk" style="font-size:8.1px;line-height:16.5px">LAB</i><i class="B B" style="padding-left:2.0px">D</i><i class="C B" style="padding-left:3.0px">ПРОИЗВОДСТВО</i><i class="BS">23,5%</i><i class="BT">18,3%</i><i class="BU">26,8%</i><i class="BV">15,04</i><i class="BW">23,5%</i><i class="BX" style="font-size:8.7px;">Эласт&gt;1</i><i class="BY">4E-04</i><i class="BZ">4E-04</i><i class="CA">0,02</i><i class="CB">0,02</i><i class="CC">21,5%</i><i class="CD">25,5%</i><i class="CE">64</i><i class="CF">0,25%</i><i class="CG">94,04</i><i class="CH">0,50%</i><i class="CI">23,00%</i><i class="CJ">24,00%</i><i class="CK">8,5%</i><i class="CL">36,3%</i><i class="CM">8,4%</i><i class="CN">8,5%</i><i class="CP">-0,703</i><i class="CR">Меньша</i><i class="CS">0,301</i><i class="CT">22,1%</i><i class="CU">432182</i><i class="CV">21,4%</i><i class="CW">7,2E+12</i><i class="CX">1,6E+11</i><i class="CY">0,9782198</i><i class="DA">36182,7</i><i class="DB">0,2027</i><i class="DC">7,1E+12</i><i class="DD">0,9830288</i><i class="DF" style="background:#c4d79b;font-size:12px;">0,50927</i><i class="DG" style="background:#c4d79b;font-size:12px;">0,94445</i></div><div class="r" style="top:695.0px;height:12.2px;line-height:13.7px;"><i class="A lk" style="font-size:8.1px;line-height:11.7px">LAB</i><i class="B sc" style="padding-left:2.0px">15t16</i><i class="C s" style="padding-left:2.0px">ЕДА, НАПИТКИ И ТАБАК</i><i class="BS">13,7%</i><i class="BT">11,5%</i><i class="BU">16,1%</i><i class="BV">8,794</i><i class="BW">13,5%</i><i class="BX" style="font-size:8.7px;">Эласт&gt;1</i><i class="BY">1E-04</i><i class="BZ">1E-04</i><i class="CA">0,011</i><i class="CB">0,012</i><i class="CC">12,6%</i><i class="CD">14,9%</i><i class="CE">64</i><i class="CF">0,14%</i><i class="CG">95,2</i><i class="CH">0,29%</i><i class="CI">13,45%</i><i class="CJ">14,03%</i><i class="CK">4,7%</i><i class="CL">34,0%</i><i class="CM">8,3%</i><i class="CN">8,4%</i><i class="CP">0,283</i><i class="CR">Меньша</i><i class="CS">-0,715</i><i class="CT">13,2%</i><i class="CU">36573,3</i><i class="CV">12,9%</i><i class="CW">4,9E+10</i><i class="CX">5E+08</i><i class="CY">0,989826</i><i class="DA">1962,81</i><i class="DB">0,12451</i><i class="DC">4,9E+10</i><i class="DD">0,9917714</i><i class="DF">0,26</i><i class="DG">0,95</i></div><div class="r" style="top:707.2px;height:11.9px;line-height:13.4px;"><i class="A lk" style="font-size:8.1px;line-height:11.4px">LAB</i><i class="B sc" style="padding-left:2.0px">17t19</i><i class="C s" style="padding-left:2.0px">ТЕКСТИЛЬ, ТЕКСТИЛЬ, КОЖА</i><i class="BS">26,4%</i><i class="BT">23,4%</i><i class="BU">36,1%</i><i class="BV">16,92</i><i class="BW">26,1%</i><i class="BX" style="font-size:8.7px;">Эласт&gt;1</i><i class="BY">4E-04</i><i class="BZ">4E-04</i><i class="CA">0,021</i><i class="CB">0,021</i><i class="CC">24,4%</i><i class="CD">28,5%</i><i class="CE">64</i><i class="CF">0,26%</i><i class="CG">101,6</i><i class="CH">0,52%</i><i class="CI">25,91%</i><i class="CJ">26,96%</i><i class="CK">12,8%</i><i class="CL">48,3%</i><i class="CM">7,8%</i><i class="CN">7,9%</i><i class="CP">2,416</i><i class="CR">Меньша</i><i class="CS">8,331</i><i class="CT">26,4%</i><i class="CU">22360,2</i><i class="CV">26,2%</i><i class="CW">8,9E+09</i><i class="CX">1,8E+08</i><i class="CY">0,9801073</i><i class="DA">777,834</i><i class="DB">0,25507</i><i class="DC">8,7E+09</i><i class="DD">0,9810937</i><i class="DF">0,22</i><i class="DG">1,02</i></div><div class="r" style="top:719.1px;height:11.9px;line-height:13.4px;"><i class="A lk" style="font-size:8.1px;line-height:11.4px">LAB</i><i class="B sc gt" style="padding-left:2.0px">20</i><i class="C s" style="padding-left:2.0px">ДЕРЕВО И ИЗ ДЕРЕВА И ПРОБКИ</i><i class="BS">30,7%</i><i class="BT">24,7%</i><i class="BU">39,6%</i><i class="BV">19,63</i><i class="BW">30,2%</i><i class="BX" style="font-size:8.7px;">Эласт&gt;1</i><i class="BY">8E-04</i><i class="BZ">8E-04</i><i class="CA">0,028</i><i class="CB">0,028</i><i class="CC">27,9%</i><i class="CD">33,5%</i><i class="CE">64</i><i class="CF">0,35%</i><i class="CG">87,71</i><i class="CH">0,70%</i><i class="CI">29,97%</i><i class="CJ">31,37%</i><i class="CK">14,8%</i><i class="CL">48,4%</i><i class="CM">9,0%</i><i class="CN">9,1%</i><i class="CP">0,712</i><i class="CR">Меньша</i><i class="CS">0,703</i><i class="CT">28,9%</i><i class="CU">20636,2</i><i class="CV">28,2%</i><i class="CW">1,7E+10</i><i class="CX">1,7E+08</i><i class="CY">0,9901449</i><i class="DA">1391,33</i><i class="DB">0,27191</i><i class="DC">1,7E+10</i><i class="DD">0,9927598</i><i class="DF">0,59</i><i class="DG">0,94</i></div><div class="r" style="top:731.1px;height:11.9px;line-height:13.4px;"><i class="A lk" style="font-size:8.1px;line-height:11.4px">LAB</i><i class="B sc" style="padding-left:2.0px">21t22</i><i class="C s" style="padding-left:2.0px">ЦЕЛЛЮЛОЗА, БУМАГА, БУМАГА</i><i class="BS">29,0%</i><i class="BT">25,5%</i><i class="BU">34,0%</i><i class="BV">18,57</i><i class="BW">28,6%</i><i class="BX" style="font-size:8.7px;">Эласт&gt;1</i><i class="BY">4E-04</i><i class="BZ">4E-04</i><i class="CA">0,021</i><i class="CB">0,021</i><i class="CC">26,9%</i><i class="CD">31,1%</i><i class="CE">64</i><i class="CF">0,26%</i><i class="CG">110,4</i><i class="CH">0,53%</i><i class="CI">28,49%</i><i class="CJ">29,54%</i><i class="CK">8,5%</i><i class="CL">29,3%</i><i class="CM">7,2%</i><i class="CN">7,2%</i><i class="CP">0,652</i><i class="CR">Меньша</i><i class="CS">0,2</i><i class="DA">1523,11</i></div><div class="r" style="top:743.0px;height:11.9px;line-height:13.4px;"><i class="A lk" style="font-size:8.1px;line-height:11.4px">LAB</i><i class="B sc" style="padding-left:2.0px">23t25</i><i class="C s" style="padding-left:2.0px">ХИМИЯ, РЕЗИНА, ПЛАСТИК</i><i class="BS">15,8%</i><i class="BT">9,5%</i><i class="BU">20,1%</i><i class="BV">10,09</i><i class="BW">15,7%</i><i class="BX" style="font-size:8.7px;">Эласт&gt;1</i><i class="BY">7E-04</i><i class="BZ">7E-04</i><i class="CA">0,026</i><i class="CB">0,027</i><i class="CC">13,1%</i><i class="CD">18,4%</i><i class="CE">64</i><i class="CF">0,33%</i><i class="CG">47,47</i><i class="CH">0,66%</i><i class="CI">15,10%</i><i class="CJ">16,43%</i><i class="CK">10,7%</i><i class="CL">67,7%</i><i class="CM" style="background:#fabf8f;">16,7%</i><i class="CN" style="background:#fabf8f;">16,9%</i><i class="CO" style="background:#fabf8f;">1</i><i class="CP">-0,473</i><i class="CR">Больша</i><i class="CS">-0,3</i><i class="DA">912,438</i></div><div class="r" style="top:755.0px;height:11.9px;line-height:13.4px;"><i class="A lk" style="font-size:8.1px;line-height:11.4px">LAB</i><i class="B sc gt" style="padding-left:2.0px">23</i><i class="C tn" style="padding-left:2.0px">Кокс, рафинированная нефть</i><i class="BS">6,7%</i><i class="BT">2,7%</i><i class="BU">13,1%</i><i class="BV">4,292</i><i class="BW">6,1%</i><i class="BX" style="font-size:8.7px;">Эласт&gt;1</i><i class="BY">6E-04</i><i class="BZ">6E-04</i><i class="CA">0,025</i><i class="CB">0,025</i><i class="CC">4,2%</i><i class="CD">9,2%</i><i class="CE">64</i><i class="CF">0,32%</i><i class="CG">21,14</i><i class="CH">0,63%</i><i class="CI">6,07%</i><i class="CJ">7,34%</i><i class="CK">10,4%</i><i class="CL">155,1%</i><i class="CM" style="background:#fabf8f;">37,6%</i><i class="CN" style="background:#fabf8f;">37,8%</i><i class="CO" style="background:#fabf8f;">1</i><i class="CP">0,668</i><i class="CR">Меньша</i><i class="CS">0,1</i><i class="DA">2315,52</i></div><div class="r" style="top:766.9px;height:11.9px;line-height:13.4px;"><i class="A lk" style="font-size:8.1px;line-height:11.4px">LAB</i><i class="B sc gt" style="padding-left:2.0px">24</i><i class="C tn" style="padding-left:2.0px">Химия и химические продукты</i><i class="BS">17,6%</i><i class="BT">12,7%</i><i class="BU">22,9%</i><i class="BV">11,28</i><i class="BW">17,3%</i><i class="BX" style="font-size:8.7px;">Эласт&gt;1</i><i class="BY">5E-04</i><i class="BZ">5E-04</i><i class="CA">0,022</i><i class="CB">0,022</i><i class="CC">15,4%</i><i class="CD">19,8%</i><i class="CE">64</i><i class="CF">0,27%</i><i class="CG">64,64</i><i class="CH">0,55%</i><i class="CI">17,08%</i><i class="CJ">18,17%</i><i class="CK">10,2%</i><i class="CL">57,9%</i><i class="CM">12,3%</i><i class="CN">12,4%</i><i class="CP">0,07</i><i class="CR">Меньша</i><i class="CS">-0,9</i><i class="DA">3127,04</i></div><div class="r" style="top:778.8px;height:11.9px;line-height:13.4px;"><i class="A lk" style="font-size:8.1px;line-height:11.4px">LAB</i><i class="B sc gt" style="padding-left:2.0px">25</i><i class="C tn" style="padding-left:2.0px">Резина и пластмассы</i><i class="BS">29,0%</i><i class="BT">20,0%</i><i class="BU">47,4%</i><i class="BV">18,54</i><i class="BW">26,5%</i><i class="BX" style="font-size:8.7px;">Эласт&gt;1</i><i class="BY">0,005</i><i class="BZ">0,005</i><i class="CA">0,069</i><i class="CB">0,07</i><i class="CC">22,0%</i><i class="CD">35,9%</i><i class="CE">64</i><i class="CF">0,87%</i><i class="CG">33,21</i><i class="CH">1,74%</i><i class="CI">27,22%</i><i class="CJ">30,71%</i><i class="CK">27,4%</i><i class="CL">94,4%</i><i class="CM" style="background:#fabf8f;">23,9%</i><i class="CN" style="background:#fabf8f;">24,1%</i><i class="CO" style="background:#fabf8f;">1</i><i class="CP">0,883</i><i class="CR">Меньша</i><i class="CS">0,5</i><i class="DA">1612,33</i></div><div class="r" style="top:790.8px;height:11.9px;line-height:13.4px;"><i class="A lk" style="font-size:8.1px;line-height:11.4px">LAB</i><i class="B sc gt" style="padding-left:2.0px">26</i><i class="C s" style="padding-left:2.0px">ПРОЧИЕ НЕМЕТАЛЛИЧЕСКИЕ</i><i class="BS">31,3%</i><i class="BT">21,8%</i><i class="BU">40,0%</i><i class="BV">20</i><i class="BW">31,0%</i><i class="BX" style="font-size:8.7px;">Эласт&gt;1</i><i class="BY">0,001</i><i class="BZ">0,001</i><i class="CA">0,037</i><i class="CB">0,037</i><i class="CC">27,5%</i><i class="CD">35,0%</i><i class="CE">64</i><i class="CF">0,47%</i><i class="CG">67,16</i><i class="CH">0,93%</i><i class="CI">30,32%</i><i class="CJ">32,19%</i><i class="CK">18,2%</i><i class="CL">58,2%</i><i class="CM">11,8%</i><i class="CN">11,9%</i><i class="CP">0,187</i><i class="CR">Меньша</i><i class="CS">-0,7</i><i class="DA">1123,41</i></div><div class="r" style="top:802.7px;height:11.9px;line-height:13.4px;"><i class="A lk" style="font-size:8.1px;line-height:11.4px">LAB</i><i class="B sc" style="padding-left:2.0px">27t28</i><i class="C s" style="padding-left:2.0px">ОСНОВНЫЕ МЕТАЛЛЫ И ГОТОВЫЕ</i><i class="BS">28,1%</i><i class="BT">20,2%</i><i class="BU">33,1%</i><i class="BV">17,99</i><i class="BW">28,2%</i><i class="BX" style="font-size:8.7px;">Эласт&lt;1</i><i class="BY">7E-04</i><i class="BZ">7E-04</i><i class="CA">0,026</i><i class="CB">0,026</i><i class="CC">25,5%</i><i class="CD">30,7%</i><i class="CE">64</i><i class="CF">0,33%</i><i class="CG">85,98</i><i class="CH">0,65%</i><i class="CI">27,45%</i><i class="CJ">28,76%</i><i class="CK">12,9%</i><i class="CL">45,9%</i><i class="CM">9,2%</i><i class="CN">9,3%</i><i class="CP">-1,04</i><i class="CR">Больша</i><i class="CS">1,3</i><i class="DA">702,512</i></div><div class="r" style="top:814.7px;height:11.9px;line-height:13.4px;"><i class="A lk" style="font-size:8.1px;line-height:11.4px">LAB</i><i class="B sc gt" style="padding-left:2.0px">29</i><i class="C s" style="padding-left:2.0px">МАШИНЫ, NEC</i><i class="BS">29,2%</i><i class="BT">24,9%</i><i class="BU">34,7%</i><i class="BV">18,7</i><i class="BW">28,7%</i><i class="BX" style="font-size:8.7px;">Эласт&gt;1</i><i class="BY">7E-04</i><i class="BZ">7E-04</i><i class="CA">0,027</i><i class="CB">0,027</i><i class="CC">26,5%</i><i class="CD">31,9%</i><i class="CE">64</i><i class="CF">0,34%</i><i class="CG">86,52</i><i class="CH">0,68%</i><i class="CI">28,55%</i><i class="CJ">29,90%</i><i class="CK">9,9%</i><i class="CL">33,7%</i><i class="CM">9,2%</i><i class="CN">9,2%</i><i class="CP">0,348</i><i class="CR">Меньша</i><i class="CS">-0,2</i><i class="DA">1602,37</i></div><div class="r" style="top:826.6px;height:11.9px;line-height:13.4px;"><i class="A lk" style="font-size:8.1px;line-height:11.4px">LAB</i><i class="B sc" style="padding-left:2.0px">30t33</i><i class="C s" style="padding-left:2.0px">ЭЛЕКТРИЧЕСКОЕ И ОПТИЧЕСКОЕ</i><i class="BS">34,1%</i><i class="BT">24,7%</i><i class="BU">47,5%</i><i class="BV">21,81</i><i class="BW">33,4%</i><i class="BX" style="font-size:8.7px;">Эласт&gt;1</i><i class="BY">0,003</i><i class="BZ">0,003</i><i class="CA">0,057</i><i class="CB">0,058</i><i class="CC">28,3%</i><i class="CD">39,9%</i><i class="CE">64</i><i class="CF">0,72%</i><i class="CG">47,15</i><i class="CH">1,45%</i><i class="CI">32,63%</i><i class="CJ">35,53%</i><i class="CK">22,7%</i><i class="CL">66,7%</i><i class="CM" style="background:#fabf8f;">16,8%</i><i class="CN" style="background:#fabf8f;">17,0%</i><i class="CO" style="background:#fabf8f;">1</i><i class="CP">0,869</i><i class="CR">Меньша</i><i class="CS">0,4</i><i class="DA">412,561</i></div><div class="r" style="top:838.5px;height:11.9px;line-height:13.4px;"><i class="A lk" style="font-size:8.1px;line-height:11.4px">LAB</i><i class="B sc" style="padding-left:2.0px">34t35</i><i class="C s" style="padding-left:2.0px">ТРАНСПОРТНОЕ ОБОРУДОВАНИЕ</i><i class="BS">23,1%</i><i class="BT">16,4%</i><i class="BU">28,1%</i><i class="BV">14,76</i><i class="BW">23,9%</i><i class="BX" style="font-size:8.7px;">Эласт&lt;1</i><i class="BY">7E-04</i><i class="BZ">7E-04</i><i class="CA">0,026</i><i class="CB">0,026</i><i class="CC">20,4%</i><i class="CD">25,7%</i><i class="CE">64</i><i class="CF">0,33%</i><i class="CG">69,99</i><i class="CH">0,66%</i><i class="CI">22,41%</i><i class="CJ">23,72%</i><i class="CK">11,6%</i><i class="CL">50,4%</i><i class="CM">11,3%</i><i class="CN">11,4%</i><i class="CP">-0,731</i><i class="CR">Больша</i><i class="CS">0,1</i><i class="DA">512,602</i></div><div class="r" style="top:850.5px;height:11.9px;line-height:13.4px;"><i class="A lk" style="font-size:8.1px;line-height:11.4px">LAB</i><i class="B sc" style="padding-left:2.0px">36t37</i><i class="C s" style="padding-left:2.0px">ПРОИЗВОДСТВО NEC; УТИЛИЗАЦИЯ</i><i class="BS">31,2%</i><i class="BT">24,9%</i><i class="BU">34,6%</i><i class="BV">19,98</i><i class="BW">31,8%</i><i class="BX" style="font-size:8.7px;">Эласт&lt;1</i><i class="BY">6E-04</i><i class="BZ">6E-04</i><i class="CA">0,024</i><i class="CB">0,024</i><i class="CC">28,8%</i><i class="CD">33,7%</i><i class="CE">64</i><i class="CF">0,30%</i><i class="CG">102,6</i><i class="CH">0,61%</i><i class="CI">30,61%</i><i class="CJ">31,83%</i><i class="CK">9,8%</i><i class="CL">31,2%</i><i class="CM">7,7%</i><i class="CN">7,8%</i><i class="CP">-1,213</i><i class="CR">Больша</i><i class="CS">1,6</i><i class="DA">-212,38</i></div><div class="bg" style="left:37.0px;top:862.4px;width:115.5px;height:11.9px;background:#d8e4bc"></div><div class="r" style="top:862.4px;height:11.9px;line-height:13.4px;"><i class="A lk" style="font-size:8.1px;line-height:11.4px">LAB</i><i class="B B" style="padding-left:2.0px">E</i><i class="C B" style="padding-left:3.0px">ЭЛЕКТРИЧЕСТВО,</i><i class="BS">17,8%</i><i class="BT">13,2%</i><i class="BU">24,1%</i><i class="BV">11,36</i><i class="BW">17,6%</i><i class="BX" style="font-size:8.7px;">Эласт&gt;1</i><i class="BY">5E-04</i><i class="BZ">5E-04</i><i class="CA">0,022</i><i class="CB">0,023</i><i class="CC">15,5%</i><i class="CD">20,0%</i><i class="CE">64</i><i class="CF">0,28%</i><i class="CG">63,1</i><i class="CH">0,56%</i><i class="CI">17,19%</i><i class="CJ">18,31%</i><i class="CK">10,8%</i><i class="CL">61,0%</i><i class="CM">12,6%</i><i class="CN">12,7%</i><i class="CP">0,215</i><i class="CR">Меньша</i><i class="CS">-0,6</i><i class="DA">-412,67</i></div><span class="t" style="left:1888px;top:118.5px;line-height:13.5px">-1</span><span class="t" style="left:1888px;top:238.5px;line-height:13.5px">-2</span><span class="t" style="left:1888px;top:250.5px;line-height:13.5px">-1</span><span class="t" style="left:1888px;top:514.5px;line-height:13.5px">-3</span><span class="t" style="left:1888px;top:550.5px;line-height:13.5px">1</span><span class="t" style="left:1888px;top:649.0px;line-height:14.5px">-1</span><span class="t" style="left:1888px;top:662.0px;line-height:17.5px">-1</span><div class="r" style="top:586.5px;height:11.5px;line-height:13.0px;"><i class="BS one" style="text-align:right;padding-right:2px">1</i><i class="BT one" style="text-align:right;padding-right:2px">1</i><i class="BU one" style="text-align:right;padding-right:2px">1</i><i class="BV one" style="text-align:right;padding-right:2px">1</i><i class="BW one" style="text-align:right;padding-right:2px">1</i><i class="BX one" style="text-align:right;padding-right:2px">1</i><i class="BY one" style="text-align:right;padding-right:2px">1</i><i class="BZ one" style="text-align:right;padding-right:2px">1</i><i class="CA one" style="text-align:right;padding-right:2px">1</i><i class="CB one" style="text-align:right;padding-right:2px">1</i><i class="CC one" style="text-align:right;padding-right:2px">1</i><i class="CD one" style="text-align:right;padding-right:2px">1</i><i class="CE one" style="text-align:right;padding-right:2px">1</i><i class="CF one" style="text-align:right;padding-right:2px">1</i><i class="CG one" style="text-align:right;padding-right:2px">1</i><i class="CH one" style="text-align:right;padding-right:2px">1</i><i class="CI one" style="text-align:right;padding-right:2px">1</i><i class="CJ one" style="text-align:right;padding-right:2px">1</i><i class="CK one" style="text-align:right;padding-right:2px">1</i><i class="CL one" style="text-align:right;padding-right:2px">1</i><i class="CM one" style="text-align:right;padding-right:2px">1</i><i class="CN one" style="text-align:right;padding-right:2px">1</i><i class="CO one" style="text-align:right;padding-right:2px">1</i><i class="CP one" style="text-align:right;padding-right:2px">1</i><i class="CQ one" style="text-align:right;padding-right:2px">1</i><i class="CR one" style="text-align:right;padding-right:2px">1</i><i class="CS one" style="text-align:right;padding-right:2px">1</i><i class="CT one" style="text-align:right;padding-right:2px">1</i><i class="CU one" style="text-align:right;padding-right:2px">1</i><i class="CV one" style="text-align:right;padding-right:2px">1</i><i class="CW one" style="text-align:right;padding-right:2px">1</i><i class="CX one" style="text-align:right;padding-right:2px">1</i><i class="CY one" style="text-align:right;padding-right:2px">1</i><i class="CZ one" style="text-align:right;padding-right:2px">1</i><i class="DA one" style="text-align:right;padding-right:2px">1</i><i class="DB one" style="text-align:right;padding-right:2px">1</i><i class="DC one" style="text-align:right;padding-right:2px">1</i><i class="DD one" style="text-align:right;padding-right:2px">1</i><i class="DE one" style="text-align:right;padding-right:2px">1</i><i class="DF one" style="text-align:right;padding-right:2px">1</i><i class="DG one" style="text-align:right;padding-right:2px">1</i><i class="DH one" style="text-align:right;padding-right:2px">1</i><i class="DI one" style="text-align:right;padding-right:2px">1</i><i class="DJ one" style="text-align:right;padding-right:2px">1</i></div><span class="t" style="left:186.0px;top:597.3px;font-weight:bold;font-size:11.25px;line-height:12px"><span class=rd>KLEMS</span> Модели <span class=bl>LAB</span> <span class=rd>производственных</span> функций</span><div class="bg" style="left:958.5px;top:597.5px;width:33.0px;height:12.0px;background:#fcd5b4"></div><span class="t bl" style="left:958.5px;top:597.3px;width:32px;text-align:right;font-weight:bold;font-size:11.25px;line-height:12px">13</span><span class="t bl" style="left:993.5px;top:597.3px;font-weight:bold;font-size:11.25px;line-height:12px">ERROR=31,58%</span><span class="t" style="left:1093.0px;top:597.3px;font-weight:bold;font-size:11.25px;line-height:12px"><span class=rd>KLEMS</span> Модели <span class=bl>LAB</span> <span class=rd>производственных</span> функций</span><span class="t bl" style="left:1392.5px;top:597.3px;font-weight:bold;font-size:11.25px;line-height:12px">ERROR=7,69%</span><div class="vl" style="left:182.0px;top:63.0px;height:523.5px;width:2.0px"></div><div class="vl" style="left:217.0px;top:63.0px;height:523.5px;width:1.0px"></div><div class="vl" style="left:250.5px;top:63.0px;height:523.5px;width:1.0px"></div><div class="vl" style="left:285.0px;top:63.0px;height:523.5px;width:1.0px"></div><div class="vl" style="left:319.0px;top:63.0px;height:523.5px;width:1.0px"></div><div class="vl" style="left:352.5px;top:63.0px;height:523.5px;width:1.0px"></div><div class="vl" style="left:386.2px;top:63.0px;height:523.5px;width:1.0px"></div><div class="vl" style="left:419.5px;top:63.0px;height:523.5px;width:1.0px"></div><div class="vl" style="left:452.0px;top:63.0px;height:523.5px;width:1.0px"></div><div class="vl" style="left:485.2px;top:63.0px;height:523.5px;width:1.0px"></div><div class="vl" style="left:518.5px;top:63.0px;height:523.5px;width:1.0px"></div><div class="vl" style="left:556.0px;top:63.0px;height:523.5px;width:1.0px"></div><div class="vl" style="left:593.8px;top:63.0px;height:523.5px;width:1.0px"></div><div class="vl" style="left:627.0px;top:63.0px;height:523.5px;width:1.0px"></div><div class="vl" style="left:668.8px;top:63.0px;height:523.5px;width:1.0px"></div><div class="vl" style="left:700.2px;top:63.0px;height:523.5px;width:1.0px"></div><div class="vl" style="left:737.8px;top:63.0px;height:523.5px;width:1.0px"></div><div class="vl" style="left:779.0px;top:63.0px;height:523.5px;width:1.0px"></div><div class="vl" style="left:818.0px;top:63.0px;height:523.5px;width:1.0px"></div><div class="vl" style="left:851.2px;top:63.0px;height:523.5px;width:1.0px"></div><div class="vl" style="left:892.0px;top:63.0px;height:523.5px;width:1.0px"></div><div class="vl" style="left:925.2px;top:63.0px;height:523.5px;width:1.0px"></div><div class="vl" style="left:958.0px;top:63.0px;height:523.5px;width:1.0px"></div><div class="vl" style="left:991.0px;top:63.0px;height:523.5px;width:1.0px"></div><div class="vl" style="left:1024.0px;top:63.0px;height:523.5px;width:1.0px"></div><div class="vl" style="left:1057.0px;top:63.0px;height:523.5px;width:1.0px"></div><div class="vl" style="left:1090.0px;top:63.0px;height:523.5px;width:1.0px"></div><div class="vl" style="left:1122.0px;top:63.0px;height:523.5px;width:2.0px"></div><div class="vl" style="left:1166.2px;top:63.0px;height:523.5px;width:1.0px"></div><div class="vl" style="left:1208.8px;top:63.0px;height:523.5px;width:1.0px"></div><div class="vl" style="left:1252.0px;top:63.0px;height:523.5px;width:1.0px"></div><div class="vl" style="left:1295.0px;top:63.0px;height:523.5px;width:1.0px"></div><div class="vl" style="left:1337.5px;top:63.0px;height:523.5px;width:1.0px"></div><div class="vl" style="left:1390.2px;top:63.0px;height:523.5px;width:1.0px"></div><div class="vl" style="left:1433.0px;top:63.0px;height:523.5px;width:1.0px"></div><div class="vl" style="left:1476.0px;top:63.0px;height:523.5px;width:1.0px"></div><div class="vl" style="left:1518.8px;top:63.0px;height:523.5px;width:1.0px"></div><div class="vl" style="left:1562.0px;top:63.0px;height:523.5px;width:1.0px"></div><div class="vl" style="left:1615.8px;top:63.0px;height:523.5px;width:1.0px"></div><div class="vl" style="left:1659.0px;top:63.0px;height:523.5px;width:1.0px"></div><div class="vl" style="left:1707.0px;top:63.0px;height:523.5px;width:1.0px"></div><div class="vl" style="left:1755.0px;top:63.0px;height:523.5px;width:1.0px"></div><div class="vl" style="left:1798.0px;top:63.0px;height:523.5px;width:1.0px"></div><div class="vl" style="left:1841.0px;top:63.0px;height:523.5px;width:1.0px"></div><div class="vl" style="left:1884.2px;top:63.0px;height:523.5px;width:1.0px"></div><div class="vl" style="left:182.0px;top:609.4px;height:268.6px;width:2.0px"></div><div class="vl" style="left:217.0px;top:609.4px;height:268.6px;width:1.0px"></div><div class="vl" style="left:250.5px;top:609.4px;height:268.6px;width:1.0px"></div><div class="vl" style="left:285.0px;top:609.4px;height:268.6px;width:1.0px"></div><div class="vl" style="left:319.0px;top:609.4px;height:268.6px;width:1.0px"></div><div class="vl" style="left:352.5px;top:609.4px;height:268.6px;width:1.0px"></div><div class="vl" style="left:386.2px;top:609.4px;height:268.6px;width:1.0px"></div><div class="vl" style="left:419.5px;top:609.4px;height:268.6px;width:1.0px"></div><div class="vl" style="left:452.0px;top:609.4px;height:268.6px;width:1.0px"></div><div class="vl" style="left:485.2px;top:609.4px;height:268.6px;width:1.0px"></div><div class="vl" style="left:518.5px;top:609.4px;height:268.6px;width:1.0px"></div><div class="vl" style="left:556.0px;top:609.4px;height:268.6px;width:1.0px"></div><div class="vl" style="left:593.8px;top:609.4px;height:268.6px;width:1.0px"></div><div class="vl" style="left:627.0px;top:609.4px;height:268.6px;width:1.0px"></div><div class="vl" style="left:668.8px;top:609.4px;height:268.6px;width:1.0px"></div><div class="vl" style="left:700.2px;top:609.4px;height:268.6px;width:1.0px"></div><div class="vl" style="left:737.8px;top:609.4px;height:268.6px;width:1.0px"></div><div class="vl" style="left:779.0px;top:609.4px;height:268.6px;width:1.0px"></div><div class="vl" style="left:818.0px;top:609.4px;height:268.6px;width:1.0px"></div><div class="vl" style="left:851.2px;top:609.4px;height:268.6px;width:1.0px"></div><div class="vl" style="left:892.0px;top:609.4px;height:268.6px;width:1.0px"></div><div class="vl" style="left:925.2px;top:609.4px;height:268.6px;width:1.0px"></div><div class="vl" style="left:958.0px;top:609.4px;height:268.6px;width:1.0px"></div><div class="vl" style="left:991.0px;top:609.4px;height:268.6px;width:1.0px"></div><div class="vl" style="left:1024.0px;top:609.4px;height:268.6px;width:1.0px"></div><div class="vl" style="left:1057.0px;top:609.4px;height:268.6px;width:1.0px"></div><div class="vl" style="left:1090.0px;top:609.4px;height:268.6px;width:1.0px"></div><div class="vl" style="left:1122.0px;top:609.4px;height:268.6px;width:2.0px"></div><div class="vl" style="left:1166.2px;top:609.4px;height:268.6px;width:1.0px"></div><div class="vl" style="left:1208.8px;top:609.4px;height:268.6px;width:1.0px"></div><div class="vl" style="left:1252.0px;top:609.4px;height:268.6px;width:1.0px"></div><div class="vl" style="left:1295.0px;top:609.4px;height:268.6px;width:1.0px"></div><div class="vl" style="left:1337.5px;top:609.4px;height:268.6px;width:1.0px"></div><div class="vl" style="left:1390.2px;top:609.4px;height:268.6px;width:1.0px"></div><div class="vl" style="left:1433.0px;top:609.4px;height:268.6px;width:1.0px"></div><div class="vl" style="left:1476.0px;top:609.4px;height:268.6px;width:1.0px"></div><div class="vl" style="left:1518.8px;top:609.4px;height:268.6px;width:1.0px"></div><div class="vl" style="left:1562.0px;top:609.4px;height:268.6px;width:1.0px"></div><div class="vl" style="left:1615.8px;top:609.4px;height:268.6px;width:1.0px"></div><div class="vl" style="left:1659.0px;top:609.4px;height:268.6px;width:1.0px"></div><div class="vl" style="left:1707.0px;top:609.4px;height:268.6px;width:1.0px"></div><div class="vl" style="left:1755.0px;top:609.4px;height:268.6px;width:1.0px"></div><div class="vl" style="left:1798.0px;top:609.4px;height:268.6px;width:1.0px"></div><div class="vl" style="left:1841.0px;top:609.4px;height:268.6px;width:1.0px"></div><div class="vl" style="left:1884.2px;top:609.4px;height:268.6px;width:1.0px"></div><div class="hl" style="left:182.0px;top:105.5px;width:1713.0px;height:2.0px"></div><div class="hl" style="left:182.0px;top:118.0px;width:1713.0px;height:1.0px"></div><div class="hl" style="left:182.0px;top:130.0px;width:1713.0px;height:1.0px"></div><div class="hl" style="left:182.0px;top:142.0px;width:1713.0px;height:1.0px"></div><div class="hl" style="left:182.0px;top:154.0px;width:1713.0px;height:1.0px"></div><div class="hl" style="left:182.0px;top:166.0px;width:1713.0px;height:1.0px"></div><div class="hl" style="left:182.0px;top:178.0px;width:1713.0px;height:1.0px"></div><div class="hl" style="left:182.0px;top:190.0px;width:1713.0px;height:1.0px"></div><div class="hl" style="left:182.0px;top:202.0px;width:1713.0px;height:1.0px"></div><div class="hl" style="left:182.0px;top:214.0px;width:1713.0px;height:1.0px"></div><div class="hl" style="left:182.0px;top:226.0px;width:1713.0px;height:1.0px"></div><div class="hl" style="left:182.0px;top:238.0px;width:1713.0px;height:1.0px"></div><div class="hl" style="left:182.0px;top:250.0px;width:1713.0px;height:1.0px"></div><div class="hl" style="left:182.0px;top:262.0px;width:1713.0px;height:1.0px"></div><div class="hl" style="left:182.0px;top:274.0px;width:1713.0px;height:1.0px"></div><div class="hl" style="left:182.0px;top:286.0px;width:1713.0px;height:1.0px"></div><div class="hl" style="left:182.0px;top:298.0px;width:1713.0px;height:1.0px"></div><div class="hl" style="left:182.0px;top:310.0px;width:1713.0px;height:1.0px"></div><div class="hl" style="left:182.0px;top:322.0px;width:1713.0px;height:1.0px"></div><div class="hl" style="left:182.0px;top:334.0px;width:1713.0px;height:1.0px"></div><div class="hl" style="left:182.0px;top:346.0px;width:1713.0px;height:1.0px"></div><div class="hl" style="left:182.0px;top:358.0px;width:1713.0px;height:1.0px"></div><div class="hl" style="left:182.0px;top:370.0px;width:1713.0px;height:1.0px"></div><div class="hl" style="left:182.0px;top:382.0px;width:1713.0px;height:1.0px"></div><div class="hl" style="left:182.0px;top:394.0px;width:1713.0px;height:1.0px"></div><div class="hl" style="left:182.0px;top:406.0px;width:1713.0px;height:1.0px"></div><div class="hl" style="left:182.0px;top:418.0px;width:1713.0px;height:1.0px"></div><div class="hl" style="left:182.0px;top:430.0px;width:1713.0px;height:1.0px"></div><div class="hl" style="left:182.0px;top:442.0px;width:1713.0px;height:1.0px"></div><div class="hl" style="left:182.0px;top:454.0px;width:1713.0px;height:1.0px"></div><div class="hl" style="left:182.0px;top:466.0px;width:1713.0px;height:1.0px"></div><div class="hl" style="left:182.0px;top:478.0px;width:1713.0px;height:1.0px"></div><div class="hl" style="left:182.0px;top:490.0px;width:1713.0px;height:1.0px"></div><div class="hl" style="left:182.0px;top:502.0px;width:1713.0px;height:1.0px"></div><div class="hl" style="left:182.0px;top:514.0px;width:1713.0px;height:1.0px"></div><div class="hl" style="left:182.0px;top:526.0px;width:1713.0px;height:1.0px"></div><div class="hl" style="left:182.0px;top:538.0px;width:1713.0px;height:1.0px"></div><div class="hl" style="left:182.0px;top:550.0px;width:1713.0px;height:1.0px"></div><div class="hl" style="left:182.0px;top:562.0px;width:1713.0px;height:1.0px"></div><div class="hl" style="left:182.0px;top:574.0px;width:1713.0px;height:1.0px"></div><div class="hl" style="left:182.0px;top:585.5px;width:1713.0px;height:2.0px"></div><div class="hl" style="left:182.0px;top:62.0px;width:1713.0px;height:2.0px"></div><div class="hl" style="left:182.0px;top:635.0px;width:1713.0px;height:2.0px"></div><div class="hl" style="left:182.0px;top:648.5px;width:1713.0px;height:1.0px"></div><div class="hl" style="left:182.0px;top:661.5px;width:1713.0px;height:1.0px"></div><div class="hl" style="left:182.0px;top:677.5px;width:1713.0px;height:1.0px"></div><div class="hl" style="left:182.0px;top:694.5px;width:1713.0px;height:1.0px"></div><div class="hl" style="left:182.0px;top:706.7px;width:1713.0px;height:1.0px"></div><div class="hl" style="left:182.0px;top:718.6px;width:1713.0px;height:1.0px"></div><div class="hl" style="left:182.0px;top:730.6px;width:1713.0px;height:1.0px"></div><div class="hl" style="left:182.0px;top:742.5px;width:1713.0px;height:1.0px"></div><div class="hl" style="left:182.0px;top:754.5px;width:1713.0px;height:1.0px"></div><div class="hl" style="left:182.0px;top:766.4px;width:1713.0px;height:1.0px"></div><div class="hl" style="left:182.0px;top:778.3px;width:1713.0px;height:1.0px"></div><div class="hl" style="left:182.0px;top:790.3px;width:1713.0px;height:1.0px"></div><div class="hl" style="left:182.0px;top:802.2px;width:1713.0px;height:1.0px"></div><div class="hl" style="left:182.0px;top:814.2px;width:1713.0px;height:1.0px"></div><div class="hl" style="left:182.0px;top:826.1px;width:1713.0px;height:1.0px"></div><div class="hl" style="left:182.0px;top:838.0px;width:1713.0px;height:1.0px"></div><div class="hl" style="left:182.0px;top:850.0px;width:1713.0px;height:1.0px"></div><div class="hl" style="left:182.0px;top:861.9px;width:1713.0px;height:1.0px"></div><div class="hl" style="left:182.0px;top:873.9px;width:1713.0px;height:1.0px"></div><div class="hl" style="left:182.0px;top:608.9px;width:1713.0px;height:2.0px"></div><div class="vl" style="left:991.0px;top:598.0px;height:11.0px;width:1.0px"></div><div class="vl" style="left:1024.0px;top:598.0px;height:11.0px;width:1.0px"></div><div class="hl" style="left:991.5px;top:597.5px;width:33.0px;height:1.0px"></div><div class="ch" style="left:1078.5px;top:294.0px;width:284.0px;height:184.5px"><svg style="position:absolute;left:0;top:0" width="284" height="184" viewBox="1079.5 409.0 284 184" font-family="Liberation Sans,sans-serif" fill="#595959"><path d="M1102.4 455.2V580.0M1129.6 455.2V580.0M1156.8 455.2V580.0M1184.0 455.2V580.0M1211.2 455.2V580.0M1238.4 455.2V580.0M1265.6 455.2V580.0M1292.8 455.2V580.0M1320.0 455.2V580.0M1347.2 455.2V580.0M1102.4 455.2H1347.2M1102.4 469.1H1347.2M1102.4 482.9H1347.2M1102.4 496.8H1347.2M1102.4 510.7H1347.2M1102.4 524.5H1347.2M1102.4 538.4H1347.2M1102.4 552.3H1347.2M1102.4 566.1H1347.2M1102.4 580.0H1347.2" stroke="#d4d4d4" stroke-width="0.8" fill="none"/><g font-size="4.3" font-weight="bold" fill="#4a4a4a"><text x="1102.4" y="587.5" text-anchor="middle">0</text><text x="1129.6" y="587.5" text-anchor="middle">50 000</text><text x="1156.8" y="587.5" text-anchor="middle">100 000</text><text x="1184.0" y="587.5" text-anchor="middle">150 000</text><text x="1211.2" y="587.5" text-anchor="middle">200 000</text><text x="1238.4" y="587.5" text-anchor="middle">250 000</text><text x="1265.6" y="587.5" text-anchor="middle">300 000</text><text x="1292.8" y="587.5" text-anchor="middle">350 000</text><text x="1320.0" y="587.5" text-anchor="middle">400 000</text><text x="1347.2" y="587.5" text-anchor="middle">450 000</text><text x="1097.9" y="456.7" text-anchor="end">180 000</text><text x="1097.9" y="470.6" text-anchor="end">160 000</text><text x="1097.9" y="484.4" text-anchor="end">140 000</text><text x="1097.9" y="498.3" text-anchor="end">120 000</text><text x="1097.9" y="512.2" text-anchor="end">100 000</text><text x="1097.9" y="526.0" text-anchor="end">80 000</text><text x="1097.9" y="539.9" text-anchor="end">60 000</text><text x="1097.9" y="553.8" text-anchor="end">40 000</text><text x="1097.9" y="567.6" text-anchor="end">20 000</text><text x="1097.9" y="581.5" text-anchor="end">0</text></g><path d="M1122.0 567.0L1314.0 468.0" stroke="#9dc3e6" stroke-width="0.6" stroke-dasharray="1 1" fill="none"/><path d="M1122.0 566.0L1314.0 464.0" stroke="#9dc3e6" stroke-width="0.6" stroke-dasharray="1 1" fill="none"/><g fill="#4472c4"><circle cx="1145.9" cy="553.3" r="1.4"/><circle cx="1163.5" cy="541.7" r="1.4"/><circle cx="1163.5" cy="543.5" r="1.4"/><circle cx="1169.1" cy="542.6" r="1.4"/><circle cx="1194.1" cy="531.5" r="1.4"/><circle cx="1197.8" cy="534.3" r="1.4"/><circle cx="1199.6" cy="533.3" r="1.4"/><circle cx="1198.3" cy="523.7" r="1.4"/><circle cx="1200.6" cy="527.4" r="1.4"/><circle cx="1202.4" cy="521.3" r="1.4"/><circle cx="1203.3" cy="526.5" r="1.4"/><circle cx="1206.7" cy="522.2" r="1.4"/><circle cx="1209.4" cy="514.4" r="1.4"/><circle cx="1214.4" cy="515.7" r="1.4"/><circle cx="1220.4" cy="509.3" r="1.4"/><circle cx="1220.4" cy="513.0" r="1.4"/><circle cx="1223.3" cy="507.4" r="1.4"/><circle cx="1227.4" cy="505.6" r="1.4"/><circle cx="1230.7" cy="509.3" r="1.4"/><circle cx="1235.4" cy="503.7" r="1.4"/><circle cx="1237.2" cy="509.3" r="1.4"/><circle cx="1237.6" cy="511.5" r="1.4"/><circle cx="1242.6" cy="504.6" r="1.4"/><circle cx="1243.5" cy="497.2" r="1.4"/><circle cx="1243.1" cy="506.1" r="1.4"/><circle cx="1245.0" cy="501.5" r="1.4"/><circle cx="1247.4" cy="501.5" r="1.4"/><circle cx="1255.6" cy="492.2" r="1.4"/><circle cx="1270.6" cy="488.5" r="1.4"/><circle cx="1273.3" cy="481.5" r="1.4"/><circle cx="1273.3" cy="475.4" r="1.4"/><circle cx="1294.4" cy="477.4" r="1.4"/><circle cx="1295.4" cy="475.6" r="1.4"/><circle cx="1309.4" cy="466.1" r="1.4"/><circle cx="1314.4" cy="464.4" r="1.4"/><circle cx="1127.0" cy="565.5" r="1.4"/><circle cx="1133.5" cy="562.6" r="1.4"/><circle cx="1131.2" cy="562.8" r="1.4"/><circle cx="1121.7" cy="566.9" r="1.4"/><circle cx="1121.2" cy="567.3" r="1.4"/><circle cx="1121.9" cy="568.1" r="1.4"/><circle cx="1129.0" cy="562.5" r="1.4"/><circle cx="1123.0" cy="567.2" r="1.4"/><circle cx="1133.0" cy="560.2" r="1.4"/><circle cx="1132.0" cy="562.3" r="1.4"/><circle cx="1140.0" cy="559.6" r="1.4"/><circle cx="1137.7" cy="560.0" r="1.4"/><circle cx="1123.4" cy="567.3" r="1.4"/><circle cx="1126.7" cy="563.6" r="1.4"/><circle cx="1124.1" cy="565.5" r="1.4"/><circle cx="1133.3" cy="561.8" r="1.4"/><circle cx="1131.5" cy="563.6" r="1.4"/><circle cx="1121.7" cy="567.8" r="1.4"/><circle cx="1134.1" cy="561.3" r="1.4"/><circle cx="1126.8" cy="564.3" r="1.4"/><circle cx="1129.6" cy="563.8" r="1.4"/><circle cx="1136.4" cy="559.4" r="1.4"/><circle cx="1125.4" cy="565.0" r="1.4"/><circle cx="1131.0" cy="561.4" r="1.4"/><circle cx="1135.1" cy="561.2" r="1.4"/><circle cx="1140.1" cy="559.3" r="1.4"/><circle cx="1128.9" cy="562.8" r="1.4"/><circle cx="1123.5" cy="566.1" r="1.4"/></g><path d="M1120.9 569.4L1314.8 461.1" stroke="#ff2020" stroke-width="1.2" fill="none"/><rect x="1138.5" y="410.2" width="163.0" height="39.4" fill="#fde4d0" stroke="#000" stroke-width="1"/><rect x="1160.4" y="458.3" width="74.4" height="38.9" fill="#fde9d9" stroke="#000" stroke-width="1"/><rect x="1082.0" y="497.2" width="102.0" height="41.3" fill="rgba(252,213,180,.93)"/><rect x="1222.0" y="526.1" width="132.0" height="38.6" fill="#d8e4bc"/><text x="1141.3" y="425.6" font-size="14.1" textLength="159.3" lengthAdjust="spacingAndGlyphs">AGRICULTURE, HUNTING,</text><text x="1146.3" y="444.8" font-size="14.1" textLength="150.0" lengthAdjust="spacingAndGlyphs">FORESTRY AND FISHING</text><text x="1170.9" y="474.0" font-size="13.0" textLength="55.4" lengthAdjust="spacingAndGlyphs">y = 0,44x</text><text x="1163.8" y="492.5" font-size="13.0" textLength="70.0" lengthAdjust="spacingAndGlyphs">R² = 0,9866</text><text x="1085.1" y="513.8" font-size="16.2" textLength="67.1" lengthAdjust="spacingAndGlyphs">y = 1,871x</text><text x="1153.4" y="508.3" font-size="8.7" textLength="30.0" lengthAdjust="spacingAndGlyphs">0,8822</text><text x="1105.1" y="533.3" font-size="16.2" textLength="58.7" lengthAdjust="spacingAndGlyphs">R² = 0,99</text><text x="1224.4" y="541.9" font-size="13.4" textLength="128.9" lengthAdjust="spacingAndGlyphs">y = 0,4196x + 4610,4</text><text x="1261.5" y="560.6" font-size="13.4" textLength="54.7" lengthAdjust="spacingAndGlyphs">R² = 0,99</text></svg></div><div class="ch" style="left:1397.5px;top:288.0px;width:299.0px;height:219.0px"><svg style="position:absolute;left:0;top:0" width="299" height="219" viewBox="1398.5 403.0 299 219" font-family="Liberation Sans,sans-serif" fill="#595959"><path d="M1427.5 430.5V608.0M1469.4 430.5V608.0M1511.2 430.5V608.0M1553.1 430.5V608.0M1595.0 430.5V608.0M1636.9 430.5V608.0M1678.8 430.5V608.0M1427.5 430.5H1678.8M1427.5 452.7H1678.8M1427.5 474.9H1678.8M1427.5 497.1H1678.8M1427.5 519.2H1678.8M1427.5 541.4H1678.8M1427.5 563.6H1678.8M1427.5 585.8H1678.8M1427.5 608.0H1678.8" stroke="#d4d4d4" stroke-width="0.8" fill="none"/><g font-size="4.3" font-weight="bold" fill="#4a4a4a"><text x="1427.5" y="615.5" text-anchor="middle">0</text><text x="1469.4" y="615.5" text-anchor="middle">5 000 000</text><text x="1511.2" y="615.5" text-anchor="middle">10 000 000</text><text x="1553.1" y="615.5" text-anchor="middle">15 000 000</text><text x="1595.0" y="615.5" text-anchor="middle">20 000 000</text><text x="1636.9" y="615.5" text-anchor="middle">25 000 000</text><text x="1678.8" y="615.5" text-anchor="middle">30 000 000</text><text x="1423.0" y="432.0" text-anchor="end">16 000 000</text><text x="1423.0" y="454.2" text-anchor="end">14 000 000</text><text x="1423.0" y="476.4" text-anchor="end">12 000 000</text><text x="1423.0" y="498.6" text-anchor="end">10 000 000</text><text x="1423.0" y="520.8" text-anchor="end">8 000 000</text><text x="1423.0" y="542.9" text-anchor="end">6 000 000</text><text x="1423.0" y="565.1" text-anchor="end">4 000 000</text><text x="1423.0" y="587.3" text-anchor="end">2 000 000</text><text x="1423.0" y="609.5" text-anchor="end">0</text></g><g fill="#4472c4"><circle cx="1430.1" cy="606.5" r="1.3"/><circle cx="1432.0" cy="605.9" r="1.3"/><circle cx="1433.2" cy="604.4" r="1.3"/><circle cx="1434.2" cy="604.3" r="1.3"/><circle cx="1435.6" cy="602.7" r="1.3"/><circle cx="1438.1" cy="602.9" r="1.3"/><circle cx="1439.5" cy="600.4" r="1.3"/><circle cx="1441.0" cy="598.8" r="1.3"/><circle cx="1444.8" cy="597.9" r="1.3"/><circle cx="1448.0" cy="593.6" r="1.3"/><circle cx="1450.1" cy="592.7" r="1.3"/><circle cx="1452.6" cy="589.8" r="1.3"/><circle cx="1456.2" cy="586.3" r="1.3"/><circle cx="1459.5" cy="585.8" r="1.3"/><circle cx="1463.4" cy="581.5" r="1.3"/><circle cx="1467.8" cy="580.7" r="1.3"/><circle cx="1471.2" cy="576.5" r="1.3"/><circle cx="1476.3" cy="574.9" r="1.3"/><circle cx="1481.2" cy="571.7" r="1.3"/><circle cx="1484.5" cy="567.1" r="1.3"/><circle cx="1489.3" cy="565.3" r="1.3"/><circle cx="1495.3" cy="559.5" r="1.3"/><circle cx="1498.6" cy="556.3" r="1.3"/><circle cx="1503.8" cy="553.5" r="1.3"/><circle cx="1509.6" cy="549.1" r="1.3"/><circle cx="1513.8" cy="545.8" r="1.3"/><circle cx="1519.9" cy="542.4" r="1.3"/><circle cx="1526.6" cy="538.8" r="1.3"/><circle cx="1531.4" cy="534.5" r="1.3"/><circle cx="1537.6" cy="528.6" r="1.3"/><circle cx="1543.9" cy="526.7" r="1.3"/><circle cx="1549.9" cy="522.4" r="1.3"/><circle cx="1555.1" cy="516.7" r="1.3"/><circle cx="1560.8" cy="513.0" r="1.3"/><circle cx="1567.1" cy="506.6" r="1.3"/><circle cx="1573.9" cy="502.2" r="1.3"/><circle cx="1580.8" cy="497.2" r="1.3"/><circle cx="1586.8" cy="492.7" r="1.3"/><circle cx="1593.9" cy="488.4" r="1.3"/><circle cx="1600.7" cy="485.1" r="1.3"/><circle cx="1608.9" cy="477.7" r="1.3"/><circle cx="1615.3" cy="473.3" r="1.3"/><circle cx="1622.8" cy="467.3" r="1.3"/><circle cx="1631.1" cy="464.8" r="1.3"/><circle cx="1637.9" cy="457.9" r="1.3"/><circle cx="1644.7" cy="451.2" r="1.3"/><circle cx="1628.0" cy="459.5" r="1.3"/><circle cx="1639.0" cy="453.5" r="1.3"/><circle cx="1645.5" cy="455.5" r="1.3"/><circle cx="1639.0" cy="458.5" r="1.3"/><circle cx="1628.5" cy="465.5" r="1.3"/></g><path d="M1430.0 606.2L1645.5 452.5" stroke="#ff2020" stroke-width="1.2" fill="none"/><rect x="1486.2" y="404.3" width="120.7" height="20.3" fill="#fde4d0" stroke="#000" stroke-width="1"/><rect x="1502.1" y="433.3" width="75.6" height="39.4" fill="#fde9d9" stroke="#000" stroke-width="1"/><rect x="1440.0" y="480.1" width="103.0" height="38.9" fill="#fcd5b4"/><rect x="1576.0" y="533.9" width="108.1" height="33.9" fill="#fcd5b4"/><text x="1489.4" y="419.7" font-size="13.9" textLength="116.6" lengthAdjust="spacingAndGlyphs">TOTAL INDUSTRIES</text><text x="1505.8" y="448.6" font-size="12.7" textLength="71.0" lengthAdjust="spacingAndGlyphs">y = 0,5411x</text><text x="1506.2" y="467.7" font-size="12.7" textLength="70.0" lengthAdjust="spacingAndGlyphs">R² = 0,9993</text><text x="1442.2" y="494.7" font-size="13.2" textLength="70.9" lengthAdjust="spacingAndGlyphs">y = 0,4082x</text><text x="1514.3" y="489.7" font-size="8.5" textLength="27.8" lengthAdjust="spacingAndGlyphs">1,0168</text><text x="1457.0" y="513.4" font-size="13.2" textLength="70.6" lengthAdjust="spacingAndGlyphs">R² = 0,9998</text><text x="1578.5" y="547.7" font-size="11.6" textLength="104.6" lengthAdjust="spacingAndGlyphs">y = 0,5442x - 48611</text><text x="1600.8" y="563.7" font-size="11.6" textLength="60.6" lengthAdjust="spacingAndGlyphs">R² = 0,9993</text></svg></div><div class="ch" style="left:1701.2px;top:288.5px;width:258.8px;height:199.9px"><svg style="position:absolute;left:0;top:0" width="258" height="199" viewBox="1702.2 403.5 258 199" font-family="Liberation Sans,sans-serif" fill="#595959"><path d="M1725.6 432.3V588.9M1768.5 432.3V588.9M1811.4 432.3V588.9M1854.3 432.3V588.9M1897.2 432.3V588.9M1940.1 432.3V588.9M1725.6 432.3H1940.1M1725.6 454.7H1940.1M1725.6 477.0H1940.1M1725.6 499.4H1940.1M1725.6 521.8H1940.1M1725.6 544.2H1940.1M1725.6 566.5H1940.1M1725.6 588.9H1940.1" stroke="#d4d4d4" stroke-width="0.8" fill="none"/><g font-size="4.3" font-weight="bold" fill="#4a4a4a"><text x="1725.6" y="596.4" text-anchor="middle">0</text><text x="1768.5" y="596.4" text-anchor="middle">100 000</text><text x="1811.4" y="596.4" text-anchor="middle">200 000</text><text x="1854.3" y="596.4" text-anchor="middle">300 000</text><text x="1897.2" y="596.4" text-anchor="middle">400 000</text><text x="1721.1" y="433.8" text-anchor="end">350 000</text><text x="1721.1" y="456.2" text-anchor="end">300 000</text><text x="1721.1" y="478.5" text-anchor="end">250 000</text><text x="1721.1" y="500.9" text-anchor="end">200 000</text><text x="1721.1" y="523.3" text-anchor="end">150 000</text><text x="1721.1" y="545.7" text-anchor="end">100 000</text><text x="1721.1" y="568.0" text-anchor="end">50 000</text><text x="1721.1" y="590.4" text-anchor="end">0</text></g><g fill="#4472c4"><circle cx="1750.5" cy="575.3" r="1.4"/><circle cx="1755.6" cy="573.4" r="1.4"/><circle cx="1758.6" cy="571.6" r="1.4"/><circle cx="1762.7" cy="569.6" r="1.4"/><circle cx="1768.4" cy="566.5" r="1.4"/><circle cx="1780.4" cy="562.4" r="1.4"/><circle cx="1783.3" cy="555.9" r="1.4"/><circle cx="1784.7" cy="554.5" r="1.4"/><circle cx="1786.1" cy="555.3" r="1.4"/><circle cx="1787.4" cy="556.3" r="1.4"/><circle cx="1788.4" cy="552.5" r="1.4"/><circle cx="1789.2" cy="553.5" r="1.4"/><circle cx="1794.5" cy="548.4" r="1.4"/><circle cx="1795.9" cy="548.4" r="1.4"/><circle cx="1798.4" cy="547.4" r="1.4"/><circle cx="1800.4" cy="549.4" r="1.4"/><circle cx="1804.5" cy="542.3" r="1.4"/><circle cx="1809.2" cy="543.3" r="1.4"/><circle cx="1811.6" cy="543.7" r="1.4"/><circle cx="1811.6" cy="540.0" r="1.4"/><circle cx="1812.6" cy="538.4" r="1.4"/><circle cx="1817.3" cy="541.3" r="1.4"/><circle cx="1820.4" cy="540.2" r="1.4"/><circle cx="1821.8" cy="537.4" r="1.4"/><circle cx="1824.4" cy="531.5" r="1.4"/><circle cx="1845.2" cy="521.3" r="1.4"/><circle cx="1872.5" cy="498.5" r="1.4"/><circle cx="1880.5" cy="507.4" r="1.4"/><circle cx="1729.7" cy="586.1" r="1.4"/><circle cx="1730.3" cy="585.7" r="1.4"/><circle cx="1730.9" cy="586.0" r="1.4"/><circle cx="1731.6" cy="585.0" r="1.4"/><circle cx="1732.2" cy="584.5" r="1.4"/><circle cx="1732.8" cy="585.1" r="1.4"/><circle cx="1733.4" cy="584.3" r="1.4"/><circle cx="1734.0" cy="583.6" r="1.4"/><circle cx="1734.7" cy="583.7" r="1.4"/><circle cx="1735.3" cy="582.8" r="1.4"/><circle cx="1735.9" cy="583.0" r="1.4"/><circle cx="1736.5" cy="583.1" r="1.4"/><circle cx="1737.1" cy="582.7" r="1.4"/><circle cx="1737.7" cy="582.2" r="1.4"/><circle cx="1738.4" cy="581.4" r="1.4"/><circle cx="1739.0" cy="581.2" r="1.4"/><circle cx="1739.6" cy="580.6" r="1.4"/><circle cx="1740.2" cy="580.9" r="1.4"/><circle cx="1740.8" cy="580.3" r="1.4"/><circle cx="1741.5" cy="580.2" r="1.4"/><circle cx="1742.1" cy="579.5" r="1.4"/><circle cx="1742.7" cy="579.0" r="1.4"/></g><path d="M1729.7 586.5L1940.0 469.3" stroke="#ff2020" stroke-width="1.2" fill="none"/><rect x="1766.4" y="405.2" width="193.6" height="21.4" fill="#fde4d0" stroke="#000" stroke-width="1"/><rect x="1816.3" y="438.2" width="64.6" height="34.4" fill="#fde9d9" stroke="#000" stroke-width="1"/><text x="1769.4" y="420.9" font-size="14.3" textLength="122.6" lengthAdjust="spacingAndGlyphs">MINING AND QUAR</text><text x="1892.6" y="420.9" font-size="14.3" textLength="42.4" lengthAdjust="spacingAndGlyphs">RYING</text><text x="1819.4" y="451.6" font-size="11.2" textLength="61.5" lengthAdjust="spacingAndGlyphs">y = 0,5353x</text><text x="1819.8" y="467.9" font-size="11.2" textLength="60.1" lengthAdjust="spacingAndGlyphs">R² = 0,9963</text></svg></div><div class="ch" style="left:1060.0px;top:732.0px;width:361.8px;height:254.0px"><svg style="position:absolute;left:0;top:0" width="361" height="254" viewBox="1061.0 847.0 361 254" font-family="Liberation Sans,sans-serif" fill="#595959"><path d="M1090.8 875.5V1126.5M1142.8 875.5V1126.5M1194.9 875.5V1126.5M1247.0 875.5V1126.5M1299.1 875.5V1126.5M1351.2 875.5V1126.5M1403.2 875.5V1126.5M1090.8 875.5H1403.2M1090.8 900.6H1403.2M1090.8 925.7H1403.2M1090.8 950.8H1403.2M1090.8 975.9H1403.2M1090.8 1001.0H1403.2M1090.8 1026.1H1403.2M1090.8 1051.2H1403.2M1090.8 1076.3H1403.2M1090.8 1101.4H1403.2M1090.8 1126.5H1403.2" stroke="#d4d4d4" stroke-width="0.8" fill="none"/><g font-size="4.3" font-weight="bold" fill="#4a4a4a"><text x="1086.2" y="877.0" text-anchor="end">10 000 000</text><text x="1086.2" y="902.1" text-anchor="end">9 000 000</text><text x="1086.2" y="927.2" text-anchor="end">8 000 000</text><text x="1086.2" y="952.3" text-anchor="end">7 000 000</text><text x="1086.2" y="977.4" text-anchor="end">6 000 000</text><text x="1086.2" y="1002.5" text-anchor="end">5 000 000</text></g><g fill="#4472c4"><circle cx="1361.2" cy="914.5" r="1.2"/><circle cx="1353.2" cy="918.0" r="1.2"/><circle cx="1353.2" cy="922.5" r="1.2"/><circle cx="1341.8" cy="920.5" r="1.2"/><circle cx="1340.8" cy="932.5" r="1.2"/><circle cx="1325.5" cy="942.5" r="1.2"/><circle cx="1307.5" cy="950.5" r="1.2"/><circle cx="1292.5" cy="959.5" r="1.2"/><circle cx="1283.2" cy="967.5" r="1.2"/><circle cx="1280.0" cy="971.5" r="1.2"/><circle cx="1277.0" cy="974.5" r="1.2"/><circle cx="1263.2" cy="985.5" r="1.2"/></g><path d="M1241.0 1006.0L1361.8 909.5" stroke="#ff2020" stroke-width="1.2" fill="none"/><rect x="1180.2" y="849.1" width="120.6" height="20.5" fill="#fde4d0" stroke="#000" stroke-width="1"/><rect x="1166.2" y="883.3" width="95.4" height="50.3" fill="#fde9d9" stroke="#000" stroke-width="1"/><rect x="1110.1" y="951.2" width="117.0" height="48.8" fill="#fcd5b4"/><text x="1183.7" y="864.6" font-size="14.3" textLength="116.2" lengthAdjust="spacingAndGlyphs">TOTAL INDUSTRIES</text><text x="1169.4" y="903.3" font-size="18.7" textLength="91.3" lengthAdjust="spacingAndGlyphs">y = 0,3331x</text><text x="1170.0" y="927.3" font-size="18.7" textLength="90.4" lengthAdjust="spacingAndGlyphs">R² = 0,9987</text><text x="1112.4" y="966.7" font-size="13.7" textLength="114.3" lengthAdjust="spacingAndGlyphs">y = 0,334x - 13208</text><text x="1134.5" y="985.0" font-size="13.7" textLength="70.4" lengthAdjust="spacingAndGlyphs">R² = 0,9987</text></svg></div><div class="ch" style="left:1445.3px;top:724.0px;width:352.7px;height:262.0px"><svg style="position:absolute;left:0;top:0" width="352" height="262" viewBox="1446.3 839.0 352 262" font-family="Liberation Sans,sans-serif" fill="#595959"><path d="M1469.5 870.8V1091.8M1521.7 870.8V1091.8M1573.8 870.8V1091.8M1626.0 870.8V1091.8M1678.2 870.8V1091.8M1730.3 870.8V1091.8M1782.5 870.8V1091.8M1469.5 870.8H1782.5M1469.5 892.9H1782.5M1469.5 915.0H1782.5M1469.5 937.1H1782.5M1469.5 959.2H1782.5M1469.5 981.3H1782.5M1469.5 1003.4H1782.5M1469.5 1025.5H1782.5M1469.5 1047.6H1782.5M1469.5 1069.7H1782.5M1469.5 1091.8H1782.5" stroke="#d4d4d4" stroke-width="0.8" fill="none"/><g font-size="4.3" font-weight="bold" fill="#4a4a4a"><text x="1465.0" y="872.3" text-anchor="end">100 000</text><text x="1465.0" y="894.4" text-anchor="end">90 000</text><text x="1465.0" y="916.5" text-anchor="end">80 000</text><text x="1465.0" y="938.6" text-anchor="end">70 000</text><text x="1465.0" y="960.7" text-anchor="end">60 000</text><text x="1465.0" y="982.8" text-anchor="end">50 000</text></g><path d="M1603.5 990.0L1759.0 886.5" stroke="#9dc3e6" stroke-width="0.6" stroke-dasharray="1 1" fill="none"/><path d="M1622.0 990.0L1759.0 897.0" stroke="#9dc3e6" stroke-width="0.6" stroke-dasharray="1 1" fill="none"/><g fill="#4472c4"><circle cx="1759.3" cy="926.3" r="1.2"/><circle cx="1648.3" cy="944.3" r="1.2"/><circle cx="1684.5" cy="936.3" r="1.2"/><circle cx="1705.3" cy="951.3" r="1.2"/><circle cx="1684.5" cy="963.3" r="1.2"/><circle cx="1658.5" cy="986.5" r="1.2"/></g><path d="M1590.0 1006.8L1759.8 884.8" stroke="#ff2020" stroke-width="1.2" fill="none"/><rect x="1526.2" y="841.2" width="189.6" height="23.5" fill="#fde4d0" stroke="#000" stroke-width="1"/><rect x="1494.2" y="879.3" width="84.6" height="44.1" fill="#fde9d9" stroke="#000" stroke-width="1"/><rect x="1495.0" y="942.1" width="95.0" height="38.7" fill="#fcd5b4"/><text x="1529.4" y="859.7" font-size="17.0" textLength="185.8" lengthAdjust="spacingAndGlyphs">MINING AND QUARRYING</text><text x="1497.2" y="896.8" font-size="15.9" textLength="81.3" lengthAdjust="spacingAndGlyphs">y = 0,1683x</text><text x="1497.4" y="919.0" font-size="15.9" textLength="80.3" lengthAdjust="spacingAndGlyphs">R² = 0,9153</text><text x="1497.4" y="957.8" font-size="13.7" textLength="63.3" lengthAdjust="spacingAndGlyphs">y = 0,732x</text><text x="1562.1" y="952.4" font-size="8.6" textLength="27.6" lengthAdjust="spacingAndGlyphs">0,8879</text><text x="1508.3" y="976.7" font-size="13.7" textLength="71.0" lengthAdjust="spacingAndGlyphs">R² = 0,9896</text></svg></div><div class="ch" style="left:1841.4px;top:735.0px;width:118.6px;height:251.0px"><svg style="position:absolute;left:0;top:0" width="118" height="251" viewBox="1842.4 850.0 118 251" font-family="Liberation Sans,sans-serif" fill="#595959"><path d="M1865.8 897.3V1071.3M1912.9 897.3V1071.3M1960.0 897.3V1071.3M1865.8 897.3H1960.0M1865.8 914.7H1960.0M1865.8 932.1H1960.0M1865.8 949.5H1960.0M1865.8 966.9H1960.0M1865.8 984.3H1960.0M1865.8 1001.7H1960.0M1865.8 1019.1H1960.0M1865.8 1036.5H1960.0M1865.8 1053.9H1960.0M1865.8 1071.3H1960.0" stroke="#d4d4d4" stroke-width="0.8" fill="none"/><g font-size="4.3" font-weight="bold" fill="#4a4a4a"><text x="1861.3" y="898.8" text-anchor="end">100 000</text><text x="1861.3" y="916.2" text-anchor="end">90 000</text><text x="1861.3" y="933.6" text-anchor="end">80 000</text><text x="1861.3" y="951.0" text-anchor="end">70 000</text><text x="1861.3" y="968.4" text-anchor="end">60 000</text><text x="1861.3" y="985.8" text-anchor="end">50 000</text></g><g fill="#4472c4"></g><path d="M1700.0 1005.0L1701.0 1004.0" stroke="#ff2020" stroke-width="1.2" fill="none"/><rect x="1879.6" y="852.5" width="80.4" height="39.1" fill="#fde4d0" stroke="#000" stroke-width="1"/><rect x="1870.5" y="956.7" width="89.5" height="43.3" fill="#fcd5b4"/><text x="1882" y="867.8" font-size="12.6">AGRICULTURE,</text><text x="1872.2" y="970.5" font-size="12" letter-spacing=".4">y = 0,2241x</text></svg></div></div></body></html>
